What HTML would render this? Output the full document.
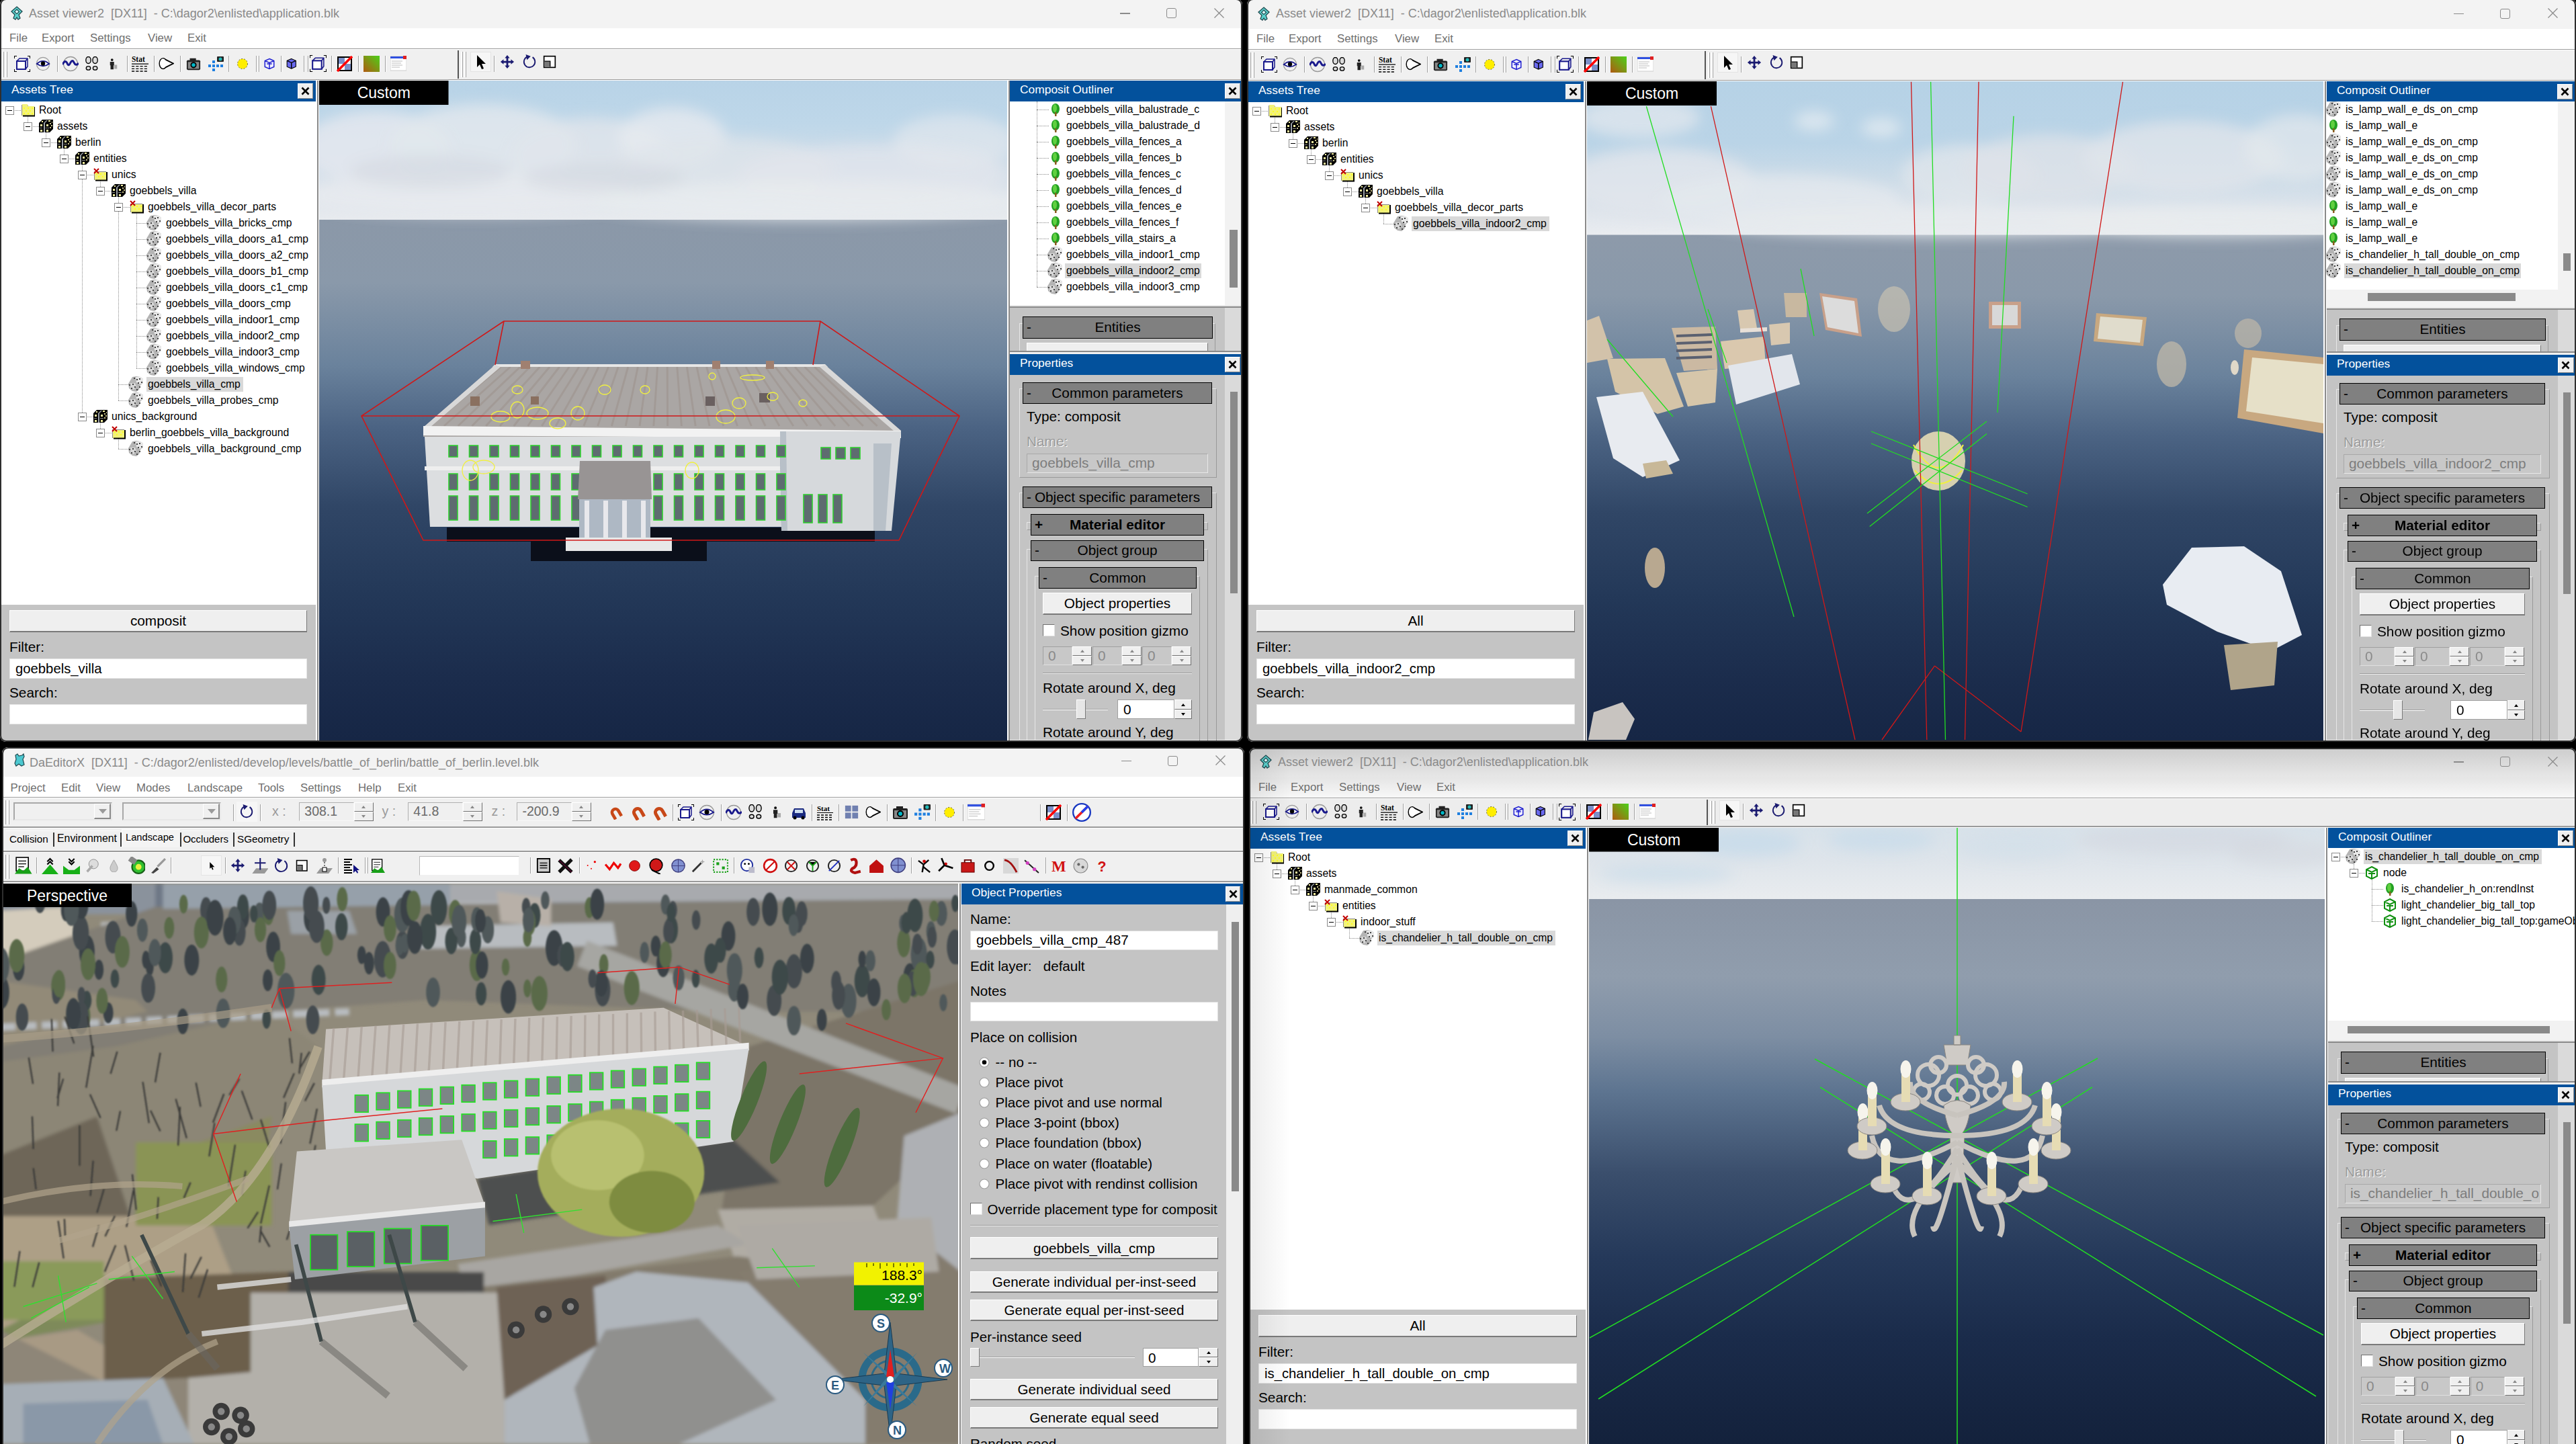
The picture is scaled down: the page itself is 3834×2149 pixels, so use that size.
<!DOCTYPE html><html><head><meta charset="utf-8"><style>html,body{margin:0;padding:0}body{width:3834px;height:2149px;background:#000;position:relative;overflow:hidden;font-family:"Liberation Sans",sans-serif}.a{position:absolute;display:block}.t{position:absolute;white-space:pre;line-height:1}</style></head><body><div class=a style="left:0px;top:-2px;width:1849px;height:1106px;border-radius:9px;overflow:hidden;background:#f0f0f0;"><div class=a style="left:0px;top:0px;width:1849px;height:44px;background:#f3f3f3"></div><svg class=a style="left:16px;top:11px;" width="18" height="21" viewBox="0 0 18 21"><path d="M9 1 L17 8 L12 13 L14 18 L11 20 L9 17 L7 20 L4 18 L6 13 L1 8Z" fill="#5cd0cc" stroke="#1f4a50" stroke-width="1.3"/><path d="M9 5 L12.5 8.5 L9 11.5 L5.5 8.5Z" fill="#dff" stroke="#1f4a50" stroke-width="1.2"/></svg><div class=t style="left:43px;top:12.76px;font-size:18px;color:#8a8a8a;">Asset viewer2  [DX11]  - C:\dagor2\enlisted\application.blk</div><div class=a style="left:1667px;top:21.3px;width:15px;height:1.3px;background:#8b8b8b"></div><div class=a style="left:1736px;top:14.3px;width:15px;height:15px;border:1.3px solid #8b8b8b;border-radius:3px;box-sizing:border-box"></div><svg class=a style="left:1807px;top:13.8px;" width="15" height="15" viewBox="0 0 15 15"><path d="M0.5 0.5 L14.5 14.5 M14.5 0.5 L0.5 14.5" stroke="#8b8b8b" stroke-width="1.3"/></svg><div class=a style="left:0px;top:44px;width:1849px;height:30px;background:#fff"></div><div class=t style="left:14px;top:51.28px;font-size:16.8px;color:#6e6e6e;">File</div><div class=t style="left:62px;top:51.28px;font-size:16.8px;color:#6e6e6e;">Export</div><div class=t style="left:134px;top:51.28px;font-size:16.8px;color:#6e6e6e;">Settings</div><div class=t style="left:220px;top:51.28px;font-size:16.8px;color:#6e6e6e;">View</div><div class=t style="left:279px;top:51.28px;font-size:16.8px;color:#6e6e6e;">Exit</div><div class=a style="left:0px;top:74px;width:1849px;height:1.2px;background:#9c9c9c"></div><div class=a style="left:0px;top:75.2px;width:1849px;height:1px;background:#fff"></div><div class=a style="left:0px;top:76.2px;width:1849px;height:43.5px;background:#f0f0f0"></div><div class=a style="left:0px;top:119.7px;width:1849px;height:1.6px;background:#9a9a9a"></div><div class=a style="left:0px;top:121.3px;width:1849px;height:1px;background:#fff"></div><div class=a style="left:3px;top:79.2px;width:2px;height:37.5px;background:#fff;border-right:1px solid #a0a0a0"></div><div class=a style="left:8px;top:79.2px;width:2px;height:37.5px;background:#fff;border-right:1px solid #a0a0a0"></div><svg class=a style="left:21px;top:84.95px;" width="24" height="24" viewBox="0 0 24 24"><rect x="4" y="8" width="13" height="12" fill="#fff" stroke="#1a1a8c" stroke-width="2"/><path d="M4 8 L8 4 H20 V16 L17 20 M17 8 L20 4" fill="none" stroke="#1a1a8c" stroke-width="1.5"/><path d="M0 4V0H4 M20 0H24V4 M24 20V24H20 M4 24H0V20" fill="none" stroke="#000" stroke-width="2"/></svg><svg class=a style="left:53px;top:85.95px;" width="22" height="22" viewBox="0 0 24 24"><circle cx="12" cy="12" r="10.5" fill="none" stroke="#999" stroke-width="1.3"/><path d="M2 12 Q12 3 22 12 Q12 19 2 12Z" fill="#fff" stroke="#1a1a8c" stroke-width="2"/><circle cx="12" cy="11.5" r="3.5" fill="#000"/></svg><div class=a style="left:84.5px;top:84.95px;width:1px;height:24px;background:#a0a0a0"></div><div class=a style="left:85.5px;top:84.95px;width:1px;height:24px;background:#fff"></div><svg class=a style="left:93px;top:84.95px;" width="24" height="24" viewBox="0 0 24 24"><circle cx="12" cy="12" r="10.5" fill="none" stroke="#999" stroke-width="1.3"/><path d="M0 13 Q4 5 7 11 Q9 17 12 10 Q15 5 17 10 Q20 16 24 11" fill="none" stroke="#1a1a8c" stroke-width="3"/></svg><svg class=a style="left:125.5px;top:85.95px;" width="22" height="22" viewBox="0 0 24 24"><ellipse cx="6" cy="6" rx="4" ry="5.5" fill="#ddd" stroke="#000" stroke-width="1.5"/><ellipse cx="17" cy="6" rx="4" ry="5.5" fill="#ddd" stroke="#000" stroke-width="1.5"/><ellipse cx="6" cy="19" rx="3.5" ry="3" fill="#ddd" stroke="#000" stroke-width="1.5"/><ellipse cx="17" cy="19" rx="3.5" ry="3" fill="#ddd" stroke="#000" stroke-width="1.5"/></svg><svg class=a style="left:160px;top:87.95px;" width="18" height="18" viewBox="0 0 24 24"><rect x="13" y="14" width="6" height="8" fill="#aaa"/><circle cx="9" cy="4" r="2.5" fill="#111"/><path d="M5 8 H13 V15 H12 V23 H6 V15 H5Z" fill="#222"/></svg><div class=a style="left:188.5px;top:84.95px;width:1px;height:24px;background:#a0a0a0"></div><div class=a style="left:189.5px;top:84.95px;width:1px;height:24px;background:#fff"></div><svg class=a style="left:196px;top:84.45px;" width="25" height="25" viewBox="0 0 24 24"><text x="0" y="10" font-family="Liberation Serif" font-size="11" font-weight="bold" fill="#000">Stat</text><path d="M0 12.5H24" stroke="#000" stroke-width="1.2"/><path d="M0 16H24 M0 19.5H24 M0 23H24" stroke="#000" stroke-width="1.3" stroke-dasharray="4 2"/></svg><div class=a style="left:228.5px;top:84.95px;width:1px;height:24px;background:#a0a0a0"></div><div class=a style="left:229.5px;top:84.95px;width:1px;height:24px;background:#fff"></div><svg class=a style="left:236px;top:85.45px;" width="23" height="23" viewBox="0 0 24 24"><ellipse cx="7" cy="12" rx="5.5" ry="8" fill="#fff" stroke="#000" stroke-width="2"/><path d="M7 4 L23 12 L7 20" fill="#fff" stroke="#000" stroke-width="2"/><ellipse cx="7" cy="12" rx="5" ry="7.5" fill="#fff"/></svg><div class=a style="left:268px;top:84.95px;width:1px;height:24px;background:#a0a0a0"></div><div class=a style="left:269px;top:84.95px;width:1px;height:24px;background:#fff"></div><svg class=a style="left:277px;top:85.95px;" width="22" height="22" viewBox="0 0 24 24"><rect x="1" y="6" width="22" height="16" rx="2" fill="#222"/><rect x="3" y="9" width="18" height="11" fill="#888"/><rect x="6" y="3" width="10" height="4" fill="#222"/><circle cx="12" cy="14" r="5" fill="#000"/><circle cx="12" cy="14" r="3" fill="#00b8c8"/></svg><svg class=a style="left:309px;top:84.95px;" width="24" height="24" viewBox="0 0 24 24"><rect x="14" y="1" width="10" height="8" rx="1" fill="#222"/><circle cx="19" cy="5" r="2.5" fill="#2bb"/><path d="M1 13h4v4H1z M7 13h4v4H7z M13 13h4v4h-4z M19 13h4v4h-4z M7 7h4v4H7z M7 19h4v4H7z" fill="#1e7fe0"/></svg><div class=a style="left:340px;top:84.95px;width:1px;height:24px;background:#a0a0a0"></div><div class=a style="left:341px;top:84.95px;width:1px;height:24px;background:#fff"></div><svg class=a style="left:351px;top:86.95px;" width="20" height="20" viewBox="0 0 24 24"><circle cx="12" cy="12" r="9" fill="#ffee00" stroke="#333" stroke-width="1" stroke-dasharray="2 3"/></svg><div class=a style="left:380.5px;top:84.95px;width:1px;height:24px;background:#a0a0a0"></div><div class=a style="left:381.5px;top:84.95px;width:1px;height:24px;background:#fff"></div><div class=a style="left:385px;top:84.95px;width:1px;height:24px;background:#a0a0a0"></div><div class=a style="left:386px;top:84.95px;width:1px;height:24px;background:#fff"></div><svg class=a style="left:392px;top:87.95px;" width="18" height="18" viewBox="0 0 24 24"><path d="M12 2 L21 6 V18 L12 22 L3 18 V6Z M3 6 L12 10 L21 6 M12 10 V22 M7 12 H17" fill="#eef" stroke="#2323d0" stroke-width="2"/></svg><div class=a style="left:417.5px;top:84.95px;width:1px;height:24px;background:#a0a0a0"></div><div class=a style="left:418.5px;top:84.95px;width:1px;height:24px;background:#fff"></div><svg class=a style="left:424.5px;top:88.2px;" width="17.5" height="17.5" viewBox="0 0 24 24"><path d="M12 2 L21 6 V18 L12 22 L3 18 V6Z" fill="#6a6af0" stroke="#000" stroke-width="1.5"/><path d="M3 6 L12 10 L21 6 M12 10 V22" fill="none" stroke="#000" stroke-width="2"/></svg><div class=a style="left:452px;top:84.95px;width:1px;height:24px;background:#a0a0a0"></div><div class=a style="left:453px;top:84.95px;width:1px;height:24px;background:#fff"></div><div class=a style="left:457.5px;top:84.95px;width:1px;height:24px;background:#a0a0a0"></div><div class=a style="left:458.5px;top:84.95px;width:1px;height:24px;background:#fff"></div><svg class=a style="left:461px;top:84.45px;" width="25" height="25" viewBox="0 0 24 24"><rect x="4" y="8" width="13" height="12" fill="#fff" stroke="#1a1a8c" stroke-width="2"/><path d="M4 8 L8 4 H20 V16 L17 20 M17 8 L20 4" fill="none" stroke="#1a1a8c" stroke-width="1.5"/><path d="M0 4V0H4 M20 0H24V4 M24 20V24H20 M4 24H0V20" fill="none" stroke="#000" stroke-width="2"/></svg><div class=a style="left:492.5px;top:84.95px;width:1px;height:24px;background:#a0a0a0"></div><div class=a style="left:493.5px;top:84.95px;width:1px;height:24px;background:#fff"></div><svg class=a style="left:501px;top:84.95px;" width="24" height="24" viewBox="0 0 24 24"><rect x="2" y="2" width="20" height="20" fill="#fff" stroke="#000" stroke-width="2"/><rect x="3" y="3" width="9" height="9" fill="#7c8fc8"/><rect x="12" y="12" width="9" height="9" fill="#7c8fc8"/><path d="M1 23 L23 1" stroke="#f00" stroke-width="3.5"/></svg><div class=a style="left:532.7px;top:84.95px;width:1px;height:24px;background:#a0a0a0"></div><div class=a style="left:533.7px;top:84.95px;width:1px;height:24px;background:#fff"></div><svg class=a style="left:541px;top:84.95px;" width="24" height="24" viewBox="0 0 24 24"><defs><linearGradient id="gg" x1="1" y1="0" x2="0" y2="1"><stop offset="0" stop-color="#4cd11a"/><stop offset="1" stop-color="#b05a10"/></linearGradient></defs><rect x="0" y="0" width="24" height="24" fill="url(#gg)"/></svg><div class=a style="left:573px;top:84.95px;width:1px;height:24px;background:#a0a0a0"></div><div class=a style="left:574px;top:84.95px;width:1px;height:24px;background:#fff"></div><svg class=a style="left:581px;top:84.95px;" width="24" height="24" viewBox="0 0 24 24"><rect x="0" y="1" width="24" height="21" fill="#fff" stroke="#ccc"/><rect x="0" y="1" width="22" height="3" fill="#3050e0"/><rect x="19" y="0" width="5" height="5" fill="#e02020"/><path d="M2 8H18 M2 11H16 M2 14H18 M2 17H14" stroke="#bbb"/></svg><div class=a style="left:681px;top:77.2px;width:2px;height:41.5px;background:#555"></div><div class=a style="left:686px;top:79.2px;width:2px;height:37.5px;background:#fff;border-right:1px solid #a0a0a0"></div><div class=a style="left:691px;top:79.2px;width:2px;height:37.5px;background:#fff;border-right:1px solid #a0a0a0"></div><div class=a style="left:700px;top:79.45px;width:31px;height:30px;background:#f6f6f6;border:1px solid #e4e4e4;box-sizing:border-box"></div><svg class=a style="left:704px;top:82.45px;" width="24" height="24" viewBox="0 0 24 24"><path d="M6 2 L6 20 L10 16 L13 23 L16 22 L13 15 L19 15Z" fill="#000"/></svg><div class=a style="left:735px;top:84.95px;width:1px;height:24px;background:#a0a0a0"></div><div class=a style="left:736px;top:84.95px;width:1px;height:24px;background:#fff"></div><svg class=a style="left:744px;top:83.45px;" width="22" height="22" viewBox="0 0 24 24"><path d="M12 1 L16 6 H13.5 V10.5 H18 V8 L23 12 L18 16 V13.5 H13.5 V18 H16 L12 23 L8 18 H10.5 V13.5 H6 V16 L1 12 L6 8 V10.5 H10.5 V6 H8Z" fill="#1a1a70"/></svg><svg class=a style="left:777px;top:83.45px;" width="22" height="22" viewBox="0 0 24 24"><path d="M8 4 A9 9 0 1 0 17 4.5" fill="none" stroke="#1a1a70" stroke-width="2"/><path d="M6 0 L14 3 L8 9Z" fill="#1a1a70"/></svg><svg class=a style="left:808px;top:84.45px;" width="20" height="20" viewBox="0 0 24 24"><rect x="2" y="2" width="20" height="20" fill="#fff" stroke="#000" stroke-width="2"/><rect x="3" y="11" width="10" height="10" fill="#777"/><path d="M3 11H13V21" fill="none" stroke="#000" stroke-width="1.5"/></svg><div class=a style="left:2px;top:122px;width:468px;height:30.5px;background:#03519c"></div><div class=t style="left:17px;top:127.27px;font-size:17.4px;color:#fff;">Assets Tree</div><div class=a style="left:443px;top:126px;width:23px;height:23px;background:#efefef;border-right:1.5px solid #8a8a8a;border-bottom:1.5px solid #8a8a8a;border-top:1px solid #fff;border-left:1px solid #fff;box-sizing:border-box"></div><svg class=a style="left:448px;top:131px;" width="13" height="13" viewBox="0 0 13 13"><path d="M1.5 1.5 L11.5 11.5 M11.5 1.5 L1.5 11.5" stroke="#000" stroke-width="2.6"/></svg><div class=a style="left:2px;top:152.5px;width:468px;height:749.5px;background:#fff"></div><div class=a style="left:14px;top:165.5px;width:17px;height:1px;border-top:1px dotted #8a8a8a;box-sizing:border-box"></div><div class=a style="left:41px;top:174.5px;width:1px;height:15px;border-left:1px dotted #8a8a8a;box-sizing:border-box"></div><div class=a style="left:41px;top:189.5px;width:17px;height:1px;border-top:1px dotted #8a8a8a;box-sizing:border-box"></div><div class=a style="left:68px;top:198.5px;width:1px;height:15px;border-left:1px dotted #8a8a8a;box-sizing:border-box"></div><div class=a style="left:68px;top:213.5px;width:17px;height:1px;border-top:1px dotted #8a8a8a;box-sizing:border-box"></div><div class=a style="left:95px;top:222.5px;width:1px;height:15px;border-left:1px dotted #8a8a8a;box-sizing:border-box"></div><div class=a style="left:95px;top:237.5px;width:17px;height:1px;border-top:1px dotted #8a8a8a;box-sizing:border-box"></div><div class=a style="left:122px;top:246.5px;width:1px;height:15px;border-left:1px dotted #8a8a8a;box-sizing:border-box"></div><div class=a style="left:122px;top:261.5px;width:17px;height:1px;border-top:1px dotted #8a8a8a;box-sizing:border-box"></div><div class=a style="left:149px;top:270.5px;width:1px;height:15px;border-left:1px dotted #8a8a8a;box-sizing:border-box"></div><div class=a style="left:149px;top:285.5px;width:17px;height:1px;border-top:1px dotted #8a8a8a;box-sizing:border-box"></div><div class=a style="left:176px;top:294.5px;width:1px;height:15px;border-left:1px dotted #8a8a8a;box-sizing:border-box"></div><div class=a style="left:176px;top:309.5px;width:17px;height:1px;border-top:1px dotted #8a8a8a;box-sizing:border-box"></div><div class=a style="left:203px;top:318.5px;width:1px;height:15px;border-left:1px dotted #8a8a8a;box-sizing:border-box"></div><div class=a style="left:203px;top:333.5px;width:17px;height:1px;border-top:1px dotted #8a8a8a;box-sizing:border-box"></div><div class=a style="left:203px;top:318.5px;width:1px;height:39px;border-left:1px dotted #8a8a8a;box-sizing:border-box"></div><div class=a style="left:203px;top:357.5px;width:17px;height:1px;border-top:1px dotted #8a8a8a;box-sizing:border-box"></div><div class=a style="left:203px;top:318.5px;width:1px;height:63px;border-left:1px dotted #8a8a8a;box-sizing:border-box"></div><div class=a style="left:203px;top:381.5px;width:17px;height:1px;border-top:1px dotted #8a8a8a;box-sizing:border-box"></div><div class=a style="left:203px;top:318.5px;width:1px;height:87px;border-left:1px dotted #8a8a8a;box-sizing:border-box"></div><div class=a style="left:203px;top:405.5px;width:17px;height:1px;border-top:1px dotted #8a8a8a;box-sizing:border-box"></div><div class=a style="left:203px;top:318.5px;width:1px;height:111px;border-left:1px dotted #8a8a8a;box-sizing:border-box"></div><div class=a style="left:203px;top:429.5px;width:17px;height:1px;border-top:1px dotted #8a8a8a;box-sizing:border-box"></div><div class=a style="left:203px;top:318.5px;width:1px;height:135px;border-left:1px dotted #8a8a8a;box-sizing:border-box"></div><div class=a style="left:203px;top:453.5px;width:17px;height:1px;border-top:1px dotted #8a8a8a;box-sizing:border-box"></div><div class=a style="left:203px;top:318.5px;width:1px;height:159px;border-left:1px dotted #8a8a8a;box-sizing:border-box"></div><div class=a style="left:203px;top:477.5px;width:17px;height:1px;border-top:1px dotted #8a8a8a;box-sizing:border-box"></div><div class=a style="left:203px;top:318.5px;width:1px;height:183px;border-left:1px dotted #8a8a8a;box-sizing:border-box"></div><div class=a style="left:203px;top:501.5px;width:17px;height:1px;border-top:1px dotted #8a8a8a;box-sizing:border-box"></div><div class=a style="left:203px;top:318.5px;width:1px;height:207px;border-left:1px dotted #8a8a8a;box-sizing:border-box"></div><div class=a style="left:203px;top:525.5px;width:17px;height:1px;border-top:1px dotted #8a8a8a;box-sizing:border-box"></div><div class=a style="left:203px;top:318.5px;width:1px;height:231px;border-left:1px dotted #8a8a8a;box-sizing:border-box"></div><div class=a style="left:203px;top:549.5px;width:17px;height:1px;border-top:1px dotted #8a8a8a;box-sizing:border-box"></div><div class=a style="left:176px;top:294.5px;width:1px;height:279px;border-left:1px dotted #8a8a8a;box-sizing:border-box"></div><div class=a style="left:176px;top:573.5px;width:17px;height:1px;border-top:1px dotted #8a8a8a;box-sizing:border-box"></div><div class=a style="left:176px;top:294.5px;width:1px;height:303px;border-left:1px dotted #8a8a8a;box-sizing:border-box"></div><div class=a style="left:176px;top:597.5px;width:17px;height:1px;border-top:1px dotted #8a8a8a;box-sizing:border-box"></div><div class=a style="left:122px;top:246.5px;width:1px;height:375px;border-left:1px dotted #8a8a8a;box-sizing:border-box"></div><div class=a style="left:122px;top:621.5px;width:17px;height:1px;border-top:1px dotted #8a8a8a;box-sizing:border-box"></div><div class=a style="left:149px;top:630.5px;width:1px;height:15px;border-left:1px dotted #8a8a8a;box-sizing:border-box"></div><div class=a style="left:149px;top:645.5px;width:17px;height:1px;border-top:1px dotted #8a8a8a;box-sizing:border-box"></div><div class=a style="left:176px;top:654.5px;width:1px;height:15px;border-left:1px dotted #8a8a8a;box-sizing:border-box"></div><div class=a style="left:176px;top:669.5px;width:17px;height:1px;border-top:1px dotted #8a8a8a;box-sizing:border-box"></div><div class=a style="left:8px;top:159.5px;width:13px;height:13px;background:#fff;border:1px solid #8a8a8a;box-sizing:border-box"></div><div class=a style="left:11px;top:165.5px;width:7px;height:1.3px;background:#000"></div><svg class=a style="left:31px;top:155.5px;" width="21" height="20" viewBox="0 0 21 20"><path d="M1 2 H10 L11 4 H20 V18 H1Z" fill="#8a8a8a"/><rect x="2" y="4" width="18" height="14" fill="#f2f27a"/><rect x="2" y="1" width="8" height="3" fill="#f2f27a"/><path d="M4 6h2v2h-2z M10 6h2v2h-2z M16 6h2v2h-2z M7 10h2v2h-2z M13 10h2v2h-2z M4 14h2v2h-2z M10 14h2v2h-2z M16 14h2v2h-2z" fill="#ffff20"/><path d="M3 18.5 H21 V5" fill="none" stroke="#000" stroke-width="2"/></svg><div class=t style="left:58px;top:157.71px;font-size:15.7px;color:#000;">Root</div><div class=a style="left:35px;top:183.5px;width:13px;height:13px;background:#fff;border:1px solid #8a8a8a;box-sizing:border-box"></div><div class=a style="left:38px;top:189.5px;width:7px;height:1.3px;background:#000"></div><svg class=a style="left:58px;top:179.5px;" width="21" height="20" viewBox="0 0 21 20"><path d="M0 5 L5 0 H21 V14 L16 19 H0Z" fill="#000"/><path d="M7 19 V5 L11 1 H13 L9 5 V19Z" fill="#9aa0a8"/><path d="M2 7h3v3h-3z M11 7h3v3h-3z M2 15h3v3h-3z M11 15h3v3h-3z M4 2h2v2h-2z M14 1h3v2h-3z" fill="#f4f0a0"/><path d="M16 5h2v2h-2z M18 8h2v2h-2z M16 11h2v2h-2z M19 3h1v2h-1z" fill="#c8c088"/><path d="M1 12.5H5 M10 12.5H15" stroke="#8a8a8a" stroke-width="1"/></svg><div class=t style="left:85px;top:181.71px;font-size:15.7px;color:#000;">assets</div><div class=a style="left:62px;top:207.5px;width:13px;height:13px;background:#fff;border:1px solid #8a8a8a;box-sizing:border-box"></div><div class=a style="left:65px;top:213.5px;width:7px;height:1.3px;background:#000"></div><svg class=a style="left:85px;top:203.5px;" width="21" height="20" viewBox="0 0 21 20"><path d="M0 5 L5 0 H21 V14 L16 19 H0Z" fill="#000"/><path d="M7 19 V5 L11 1 H13 L9 5 V19Z" fill="#9aa0a8"/><path d="M2 7h3v3h-3z M11 7h3v3h-3z M2 15h3v3h-3z M11 15h3v3h-3z M4 2h2v2h-2z M14 1h3v2h-3z" fill="#f4f0a0"/><path d="M16 5h2v2h-2z M18 8h2v2h-2z M16 11h2v2h-2z M19 3h1v2h-1z" fill="#c8c088"/><path d="M1 12.5H5 M10 12.5H15" stroke="#8a8a8a" stroke-width="1"/></svg><div class=t style="left:112px;top:205.71px;font-size:15.7px;color:#000;">berlin</div><div class=a style="left:89px;top:231.5px;width:13px;height:13px;background:#fff;border:1px solid #8a8a8a;box-sizing:border-box"></div><div class=a style="left:92px;top:237.5px;width:7px;height:1.3px;background:#000"></div><svg class=a style="left:112px;top:227.5px;" width="21" height="20" viewBox="0 0 21 20"><path d="M0 5 L5 0 H21 V14 L16 19 H0Z" fill="#000"/><path d="M7 19 V5 L11 1 H13 L9 5 V19Z" fill="#9aa0a8"/><path d="M2 7h3v3h-3z M11 7h3v3h-3z M2 15h3v3h-3z M11 15h3v3h-3z M4 2h2v2h-2z M14 1h3v2h-3z" fill="#f4f0a0"/><path d="M16 5h2v2h-2z M18 8h2v2h-2z M16 11h2v2h-2z M19 3h1v2h-1z" fill="#c8c088"/><path d="M1 12.5H5 M10 12.5H15" stroke="#8a8a8a" stroke-width="1"/></svg><div class=t style="left:139px;top:229.71px;font-size:15.7px;color:#000;">entities</div><div class=a style="left:116px;top:255.5px;width:13px;height:13px;background:#fff;border:1px solid #8a8a8a;box-sizing:border-box"></div><div class=a style="left:119px;top:261.5px;width:7px;height:1.3px;background:#000"></div><svg class=a style="left:139px;top:251.5px;" width="21" height="20" viewBox="0 0 21 20"><path d="M1 5 H19 V18 H1Z" fill="#8a8a8a"/><rect x="2" y="6" width="17" height="12" fill="#f2f27a"/><path d="M4 8h2v2h-2z M10 8h2v2h-2z M16 8h2v2h-2z M7 12h2v2h-2z M13 12h2v2h-2z" fill="#ffff20"/><path d="M3 18.5 H20 V6" fill="none" stroke="#000" stroke-width="2"/><path d="M1 1 L8 8 M8 1 L1 8" stroke="#c00000" stroke-width="2"/></svg><div class=t style="left:166px;top:253.71px;font-size:15.7px;color:#000;">unics</div><div class=a style="left:143px;top:279.5px;width:13px;height:13px;background:#fff;border:1px solid #8a8a8a;box-sizing:border-box"></div><div class=a style="left:146px;top:285.5px;width:7px;height:1.3px;background:#000"></div><svg class=a style="left:166px;top:275.5px;" width="21" height="20" viewBox="0 0 21 20"><path d="M0 5 L5 0 H21 V14 L16 19 H0Z" fill="#000"/><path d="M7 19 V5 L11 1 H13 L9 5 V19Z" fill="#9aa0a8"/><path d="M2 7h3v3h-3z M11 7h3v3h-3z M2 15h3v3h-3z M11 15h3v3h-3z M4 2h2v2h-2z M14 1h3v2h-3z" fill="#f4f0a0"/><path d="M16 5h2v2h-2z M18 8h2v2h-2z M16 11h2v2h-2z M19 3h1v2h-1z" fill="#c8c088"/><path d="M1 12.5H5 M10 12.5H15" stroke="#8a8a8a" stroke-width="1"/></svg><div class=t style="left:193px;top:277.71px;font-size:15.7px;color:#000;">goebbels_villa</div><div class=a style="left:170px;top:303.5px;width:13px;height:13px;background:#fff;border:1px solid #8a8a8a;box-sizing:border-box"></div><div class=a style="left:173px;top:309.5px;width:7px;height:1.3px;background:#000"></div><svg class=a style="left:193px;top:299.5px;" width="21" height="20" viewBox="0 0 21 20"><path d="M1 5 H19 V18 H1Z" fill="#8a8a8a"/><rect x="2" y="6" width="17" height="12" fill="#f2f27a"/><path d="M4 8h2v2h-2z M10 8h2v2h-2z M16 8h2v2h-2z M7 12h2v2h-2z M13 12h2v2h-2z" fill="#ffff20"/><path d="M3 18.5 H20 V6" fill="none" stroke="#000" stroke-width="2"/><path d="M1 1 L8 8 M8 1 L1 8" stroke="#c00000" stroke-width="2"/></svg><div class=t style="left:220px;top:301.71px;font-size:15.7px;color:#000;">goebbels_villa_decor_parts</div><svg class=a style="left:218px;top:321.5px;" width="23" height="24" viewBox="0 0 23 24"><path d="M6 1 L12 0 L18 1 L22 4 L22 10 L18 13 L16 20 L12 23 L6 22 L1 18 L0 11 L3 6Z" fill="#b4b4b4"/><path d="M11 1 L18 1 L22 4 L22 10 L17 12 L12 9Z" fill="#e8e8e8"/><path d="M3 10 L10 10 L12 15 L8 20 L3 18Z" fill="#d6d6d6"/><path d="M8 2h2v2h-2z M12 4h2v2h-2z M16 3h2v2h-2z M19 8h2v2h-2z M14 9h2v2h-2z M1 12h2v2h-2z M6 11h2v2h-2z M9 15h2v2h-2z M4 17h2v2h-2z M12 19h2v2h-2z M16 15h2v2h-2z" fill="#404040"/></svg><div class=t style="left:247px;top:325.71px;font-size:15.7px;color:#000;">goebbels_villa_bricks_cmp</div><svg class=a style="left:218px;top:345.5px;" width="23" height="24" viewBox="0 0 23 24"><path d="M6 1 L12 0 L18 1 L22 4 L22 10 L18 13 L16 20 L12 23 L6 22 L1 18 L0 11 L3 6Z" fill="#b4b4b4"/><path d="M11 1 L18 1 L22 4 L22 10 L17 12 L12 9Z" fill="#e8e8e8"/><path d="M3 10 L10 10 L12 15 L8 20 L3 18Z" fill="#d6d6d6"/><path d="M8 2h2v2h-2z M12 4h2v2h-2z M16 3h2v2h-2z M19 8h2v2h-2z M14 9h2v2h-2z M1 12h2v2h-2z M6 11h2v2h-2z M9 15h2v2h-2z M4 17h2v2h-2z M12 19h2v2h-2z M16 15h2v2h-2z" fill="#404040"/></svg><div class=t style="left:247px;top:349.71px;font-size:15.7px;color:#000;">goebbels_villa_doors_a1_cmp</div><svg class=a style="left:218px;top:369.5px;" width="23" height="24" viewBox="0 0 23 24"><path d="M6 1 L12 0 L18 1 L22 4 L22 10 L18 13 L16 20 L12 23 L6 22 L1 18 L0 11 L3 6Z" fill="#b4b4b4"/><path d="M11 1 L18 1 L22 4 L22 10 L17 12 L12 9Z" fill="#e8e8e8"/><path d="M3 10 L10 10 L12 15 L8 20 L3 18Z" fill="#d6d6d6"/><path d="M8 2h2v2h-2z M12 4h2v2h-2z M16 3h2v2h-2z M19 8h2v2h-2z M14 9h2v2h-2z M1 12h2v2h-2z M6 11h2v2h-2z M9 15h2v2h-2z M4 17h2v2h-2z M12 19h2v2h-2z M16 15h2v2h-2z" fill="#404040"/></svg><div class=t style="left:247px;top:373.71px;font-size:15.7px;color:#000;">goebbels_villa_doors_a2_cmp</div><svg class=a style="left:218px;top:393.5px;" width="23" height="24" viewBox="0 0 23 24"><path d="M6 1 L12 0 L18 1 L22 4 L22 10 L18 13 L16 20 L12 23 L6 22 L1 18 L0 11 L3 6Z" fill="#b4b4b4"/><path d="M11 1 L18 1 L22 4 L22 10 L17 12 L12 9Z" fill="#e8e8e8"/><path d="M3 10 L10 10 L12 15 L8 20 L3 18Z" fill="#d6d6d6"/><path d="M8 2h2v2h-2z M12 4h2v2h-2z M16 3h2v2h-2z M19 8h2v2h-2z M14 9h2v2h-2z M1 12h2v2h-2z M6 11h2v2h-2z M9 15h2v2h-2z M4 17h2v2h-2z M12 19h2v2h-2z M16 15h2v2h-2z" fill="#404040"/></svg><div class=t style="left:247px;top:397.71px;font-size:15.7px;color:#000;">goebbels_villa_doors_b1_cmp</div><svg class=a style="left:218px;top:417.5px;" width="23" height="24" viewBox="0 0 23 24"><path d="M6 1 L12 0 L18 1 L22 4 L22 10 L18 13 L16 20 L12 23 L6 22 L1 18 L0 11 L3 6Z" fill="#b4b4b4"/><path d="M11 1 L18 1 L22 4 L22 10 L17 12 L12 9Z" fill="#e8e8e8"/><path d="M3 10 L10 10 L12 15 L8 20 L3 18Z" fill="#d6d6d6"/><path d="M8 2h2v2h-2z M12 4h2v2h-2z M16 3h2v2h-2z M19 8h2v2h-2z M14 9h2v2h-2z M1 12h2v2h-2z M6 11h2v2h-2z M9 15h2v2h-2z M4 17h2v2h-2z M12 19h2v2h-2z M16 15h2v2h-2z" fill="#404040"/></svg><div class=t style="left:247px;top:421.71px;font-size:15.7px;color:#000;">goebbels_villa_doors_c1_cmp</div><svg class=a style="left:218px;top:441.5px;" width="23" height="24" viewBox="0 0 23 24"><path d="M6 1 L12 0 L18 1 L22 4 L22 10 L18 13 L16 20 L12 23 L6 22 L1 18 L0 11 L3 6Z" fill="#b4b4b4"/><path d="M11 1 L18 1 L22 4 L22 10 L17 12 L12 9Z" fill="#e8e8e8"/><path d="M3 10 L10 10 L12 15 L8 20 L3 18Z" fill="#d6d6d6"/><path d="M8 2h2v2h-2z M12 4h2v2h-2z M16 3h2v2h-2z M19 8h2v2h-2z M14 9h2v2h-2z M1 12h2v2h-2z M6 11h2v2h-2z M9 15h2v2h-2z M4 17h2v2h-2z M12 19h2v2h-2z M16 15h2v2h-2z" fill="#404040"/></svg><div class=t style="left:247px;top:445.71px;font-size:15.7px;color:#000;">goebbels_villa_doors_cmp</div><svg class=a style="left:218px;top:465.5px;" width="23" height="24" viewBox="0 0 23 24"><path d="M6 1 L12 0 L18 1 L22 4 L22 10 L18 13 L16 20 L12 23 L6 22 L1 18 L0 11 L3 6Z" fill="#b4b4b4"/><path d="M11 1 L18 1 L22 4 L22 10 L17 12 L12 9Z" fill="#e8e8e8"/><path d="M3 10 L10 10 L12 15 L8 20 L3 18Z" fill="#d6d6d6"/><path d="M8 2h2v2h-2z M12 4h2v2h-2z M16 3h2v2h-2z M19 8h2v2h-2z M14 9h2v2h-2z M1 12h2v2h-2z M6 11h2v2h-2z M9 15h2v2h-2z M4 17h2v2h-2z M12 19h2v2h-2z M16 15h2v2h-2z" fill="#404040"/></svg><div class=t style="left:247px;top:469.71px;font-size:15.7px;color:#000;">goebbels_villa_indoor1_cmp</div><svg class=a style="left:218px;top:489.5px;" width="23" height="24" viewBox="0 0 23 24"><path d="M6 1 L12 0 L18 1 L22 4 L22 10 L18 13 L16 20 L12 23 L6 22 L1 18 L0 11 L3 6Z" fill="#b4b4b4"/><path d="M11 1 L18 1 L22 4 L22 10 L17 12 L12 9Z" fill="#e8e8e8"/><path d="M3 10 L10 10 L12 15 L8 20 L3 18Z" fill="#d6d6d6"/><path d="M8 2h2v2h-2z M12 4h2v2h-2z M16 3h2v2h-2z M19 8h2v2h-2z M14 9h2v2h-2z M1 12h2v2h-2z M6 11h2v2h-2z M9 15h2v2h-2z M4 17h2v2h-2z M12 19h2v2h-2z M16 15h2v2h-2z" fill="#404040"/></svg><div class=t style="left:247px;top:493.71px;font-size:15.7px;color:#000;">goebbels_villa_indoor2_cmp</div><svg class=a style="left:218px;top:513.5px;" width="23" height="24" viewBox="0 0 23 24"><path d="M6 1 L12 0 L18 1 L22 4 L22 10 L18 13 L16 20 L12 23 L6 22 L1 18 L0 11 L3 6Z" fill="#b4b4b4"/><path d="M11 1 L18 1 L22 4 L22 10 L17 12 L12 9Z" fill="#e8e8e8"/><path d="M3 10 L10 10 L12 15 L8 20 L3 18Z" fill="#d6d6d6"/><path d="M8 2h2v2h-2z M12 4h2v2h-2z M16 3h2v2h-2z M19 8h2v2h-2z M14 9h2v2h-2z M1 12h2v2h-2z M6 11h2v2h-2z M9 15h2v2h-2z M4 17h2v2h-2z M12 19h2v2h-2z M16 15h2v2h-2z" fill="#404040"/></svg><div class=t style="left:247px;top:517.71px;font-size:15.7px;color:#000;">goebbels_villa_indoor3_cmp</div><svg class=a style="left:218px;top:537.5px;" width="23" height="24" viewBox="0 0 23 24"><path d="M6 1 L12 0 L18 1 L22 4 L22 10 L18 13 L16 20 L12 23 L6 22 L1 18 L0 11 L3 6Z" fill="#b4b4b4"/><path d="M11 1 L18 1 L22 4 L22 10 L17 12 L12 9Z" fill="#e8e8e8"/><path d="M3 10 L10 10 L12 15 L8 20 L3 18Z" fill="#d6d6d6"/><path d="M8 2h2v2h-2z M12 4h2v2h-2z M16 3h2v2h-2z M19 8h2v2h-2z M14 9h2v2h-2z M1 12h2v2h-2z M6 11h2v2h-2z M9 15h2v2h-2z M4 17h2v2h-2z M12 19h2v2h-2z M16 15h2v2h-2z" fill="#404040"/></svg><div class=t style="left:247px;top:541.71px;font-size:15.7px;color:#000;">goebbels_villa_windows_cmp</div><svg class=a style="left:191px;top:561.5px;" width="23" height="24" viewBox="0 0 23 24"><path d="M6 1 L12 0 L18 1 L22 4 L22 10 L18 13 L16 20 L12 23 L6 22 L1 18 L0 11 L3 6Z" fill="#b4b4b4"/><path d="M11 1 L18 1 L22 4 L22 10 L17 12 L12 9Z" fill="#e8e8e8"/><path d="M3 10 L10 10 L12 15 L8 20 L3 18Z" fill="#d6d6d6"/><path d="M8 2h2v2h-2z M12 4h2v2h-2z M16 3h2v2h-2z M19 8h2v2h-2z M14 9h2v2h-2z M1 12h2v2h-2z M6 11h2v2h-2z M9 15h2v2h-2z M4 17h2v2h-2z M12 19h2v2h-2z M16 15h2v2h-2z" fill="#404040"/></svg><div class=a style="left:218px;top:562.5px;width:143.89px;height:22px;background:#d9d9d9"></div><div class=t style="left:220px;top:565.71px;font-size:15.7px;color:#000;">goebbels_villa_cmp</div><svg class=a style="left:191px;top:585.5px;" width="23" height="24" viewBox="0 0 23 24"><path d="M6 1 L12 0 L18 1 L22 4 L22 10 L18 13 L16 20 L12 23 L6 22 L1 18 L0 11 L3 6Z" fill="#b4b4b4"/><path d="M11 1 L18 1 L22 4 L22 10 L17 12 L12 9Z" fill="#e8e8e8"/><path d="M3 10 L10 10 L12 15 L8 20 L3 18Z" fill="#d6d6d6"/><path d="M8 2h2v2h-2z M12 4h2v2h-2z M16 3h2v2h-2z M19 8h2v2h-2z M14 9h2v2h-2z M1 12h2v2h-2z M6 11h2v2h-2z M9 15h2v2h-2z M4 17h2v2h-2z M12 19h2v2h-2z M16 15h2v2h-2z" fill="#404040"/></svg><div class=t style="left:220px;top:589.71px;font-size:15.7px;color:#000;">goebbels_villa_probes_cmp</div><div class=a style="left:116px;top:615.5px;width:13px;height:13px;background:#fff;border:1px solid #8a8a8a;box-sizing:border-box"></div><div class=a style="left:119px;top:621.5px;width:7px;height:1.3px;background:#000"></div><svg class=a style="left:139px;top:611.5px;" width="21" height="20" viewBox="0 0 21 20"><path d="M0 5 L5 0 H21 V14 L16 19 H0Z" fill="#000"/><path d="M7 19 V5 L11 1 H13 L9 5 V19Z" fill="#9aa0a8"/><path d="M2 7h3v3h-3z M11 7h3v3h-3z M2 15h3v3h-3z M11 15h3v3h-3z M4 2h2v2h-2z M14 1h3v2h-3z" fill="#f4f0a0"/><path d="M16 5h2v2h-2z M18 8h2v2h-2z M16 11h2v2h-2z M19 3h1v2h-1z" fill="#c8c088"/><path d="M1 12.5H5 M10 12.5H15" stroke="#8a8a8a" stroke-width="1"/></svg><div class=t style="left:166px;top:613.71px;font-size:15.7px;color:#000;">unics_background</div><div class=a style="left:143px;top:639.5px;width:13px;height:13px;background:#fff;border:1px solid #8a8a8a;box-sizing:border-box"></div><div class=a style="left:146px;top:645.5px;width:7px;height:1.3px;background:#000"></div><svg class=a style="left:166px;top:635.5px;" width="21" height="20" viewBox="0 0 21 20"><path d="M1 5 H19 V18 H1Z" fill="#8a8a8a"/><rect x="2" y="6" width="17" height="12" fill="#f2f27a"/><path d="M4 8h2v2h-2z M10 8h2v2h-2z M16 8h2v2h-2z M7 12h2v2h-2z M13 12h2v2h-2z" fill="#ffff20"/><path d="M3 18.5 H20 V6" fill="none" stroke="#000" stroke-width="2"/><path d="M1 1 L8 8 M8 1 L1 8" stroke="#c00000" stroke-width="2"/></svg><div class=t style="left:193px;top:637.71px;font-size:15.7px;color:#000;">berlin_goebbels_villa_background</div><svg class=a style="left:191px;top:657.5px;" width="23" height="24" viewBox="0 0 23 24"><path d="M6 1 L12 0 L18 1 L22 4 L22 10 L18 13 L16 20 L12 23 L6 22 L1 18 L0 11 L3 6Z" fill="#b4b4b4"/><path d="M11 1 L18 1 L22 4 L22 10 L17 12 L12 9Z" fill="#e8e8e8"/><path d="M3 10 L10 10 L12 15 L8 20 L3 18Z" fill="#d6d6d6"/><path d="M8 2h2v2h-2z M12 4h2v2h-2z M16 3h2v2h-2z M19 8h2v2h-2z M14 9h2v2h-2z M1 12h2v2h-2z M6 11h2v2h-2z M9 15h2v2h-2z M4 17h2v2h-2z M12 19h2v2h-2z M16 15h2v2h-2z" fill="#404040"/></svg><div class=t style="left:220px;top:661.71px;font-size:15.7px;color:#000;">goebbels_villa_background_cmp</div><div class=a style="left:2px;top:902px;width:468px;height:204px;background:#c4c4c4"></div><div class=a style="left:14px;top:910px;width:443px;height:33px;background:#efefef;border-top:1px solid #fff;border-left:1px solid #fff;border-right:1.5px solid #7a7a7a;border-bottom:2px solid #7a7a7a;box-sizing:border-box"></div><div class=t style="left:193.89px;top:916.39px;font-size:20.8px;color:#000;">composit</div><div class=t style="left:14px;top:955.39px;font-size:20.8px;color:#000;">Filter:</div><div class=a style="left:14px;top:982px;width:443px;height:30px;background:#fff;border:1px solid #e6e6e6;box-sizing:border-box"></div><div class=t style="left:23px;top:987.12px;font-size:20.3px;color:#000;">goebbels_villa</div><div class=t style="left:14px;top:1023.39px;font-size:20.8px;color:#000;">Search:</div><div class=a style="left:14px;top:1050px;width:443px;height:29.5px;background:#fff;border:1px solid #e6e6e6;box-sizing:border-box"></div><div class=a style="left:470px;top:122px;width:2px;height:984px;background:#fff"></div><div class=a style="left:472px;top:122px;width:2px;height:984px;background:#8a8a8a"></div><div class=a style="left:474px;top:122px;width:1px;height:984px;background:#fff"></div><svg class=a style="left:475px;top:122px" width="1024" height="982" viewBox="475 120 1024 982"><defs><linearGradient id="skv" x1="0" y1="0" x2="0" y2="1"><stop offset="0" stop-color="#b8d3e7"/><stop offset="0.3" stop-color="#bed7e9"/><stop offset="0.6" stop-color="#cfdde9"/><stop offset="0.85" stop-color="#dfe5ec"/><stop offset="1" stop-color="#e8ebef"/></linearGradient><linearGradient id="sev" x1="0" y1="0" x2="0" y2="1"><stop offset="0" stop-color="#8b98a8"/><stop offset="0.12" stop-color="#8a99aa"/><stop offset="0.28" stop-color="#6a829c"/><stop offset="0.4" stop-color="#4b6383"/><stop offset="0.55" stop-color="#304666"/><stop offset="0.72" stop-color="#233858"/><stop offset="0.88" stop-color="#1b2c4c"/><stop offset="1" stop-color="#162645"/></linearGradient><filter id="blv" x="-50%" y="-50%" width="200%" height="200%"><feGaussianBlur stdDeviation="10"/></filter></defs><rect x="475" y="120" width="1024" height="207" fill="url(#skv)"/><rect x="475" y="327" width="1024" height="775" fill="url(#sev)"/><g filter="url(#blv)"><ellipse cx="560" cy="220" rx="110" ry="55" fill="#e4e8ee" opacity="0.85"/><ellipse cx="720" cy="215" rx="140" ry="60" fill="#e2e7ed" opacity="0.85"/><ellipse cx="880" cy="230" rx="120" ry="55" fill="#e0e5eb" opacity="0.8"/><ellipse cx="1000" cy="205" rx="80" ry="45" fill="#e6eaef" opacity="0.8"/><ellipse cx="1080" cy="250" rx="160" ry="45" fill="#dfe4ea" opacity="0.75"/><ellipse cx="1300" cy="260" rx="200" ry="45" fill="#e2e6ec" opacity="0.7"/><ellipse cx="1420" cy="210" rx="90" ry="40" fill="#e6eaee" opacity="0.6"/><ellipse cx="700" cy="290" rx="260" ry="30" fill="#e8ebef" opacity="0.8"/><ellipse cx="1200" cy="300" rx="320" ry="28" fill="#e9ecef" opacity="0.8"/><ellipse cx="640" cy="255" rx="120" ry="25" fill="#cfd6de" opacity="0.5"/><ellipse cx="900" cy="265" rx="120" ry="22" fill="#cfd6de" opacity="0.5"/></g><path d="M665 785 L1302 785 L1302 806 L1052 806 L1052 835 L790 835 L790 806 L665 806Z" fill="#0b0f1a"/><path d="M737 543 L1228 543 L1341 641 L1341 650 L630 650 L630 636Z" fill="#aaa6a4"/><path d="M745.0 546 L640.0 634" stroke="#9c928c" stroke-width="3" opacity="0.55"/><path d="M759.6 546 L660.8 634" stroke="#9c928c" stroke-width="3" opacity="0.55"/><path d="M774.2 546 L681.6 634" stroke="#9c928c" stroke-width="3" opacity="0.55"/><path d="M788.8 546 L702.4 634" stroke="#9c928c" stroke-width="3" opacity="0.55"/><path d="M803.4 546 L723.2 634" stroke="#9c928c" stroke-width="3" opacity="0.55"/><path d="M818.0 546 L744.0 634" stroke="#9c928c" stroke-width="3" opacity="0.55"/><path d="M832.6 546 L764.8 634" stroke="#9c928c" stroke-width="3" opacity="0.55"/><path d="M847.2 546 L785.6 634" stroke="#9c928c" stroke-width="3" opacity="0.55"/><path d="M861.8 546 L806.4 634" stroke="#9c928c" stroke-width="3" opacity="0.55"/><path d="M876.4 546 L827.2 634" stroke="#9c928c" stroke-width="3" opacity="0.55"/><path d="M891.0 546 L848.0 634" stroke="#9c928c" stroke-width="3" opacity="0.55"/><path d="M905.6 546 L868.8 634" stroke="#9c928c" stroke-width="3" opacity="0.55"/><path d="M920.2 546 L889.6 634" stroke="#9c928c" stroke-width="3" opacity="0.55"/><path d="M934.8 546 L910.4 634" stroke="#9c928c" stroke-width="3" opacity="0.55"/><path d="M949.4 546 L931.2 634" stroke="#9c928c" stroke-width="3" opacity="0.55"/><path d="M964.0 546 L952.0 634" stroke="#9c928c" stroke-width="3" opacity="0.55"/><path d="M978.6 546 L972.8 634" stroke="#9c928c" stroke-width="3" opacity="0.55"/><path d="M993.2 546 L993.6 634" stroke="#9c928c" stroke-width="3" opacity="0.55"/><path d="M1007.8 546 L1014.4 634" stroke="#9c928c" stroke-width="3" opacity="0.55"/><path d="M1022.4 546 L1035.2 634" stroke="#9c928c" stroke-width="3" opacity="0.55"/><path d="M1037.0 546 L1056.0 634" stroke="#9c928c" stroke-width="3" opacity="0.55"/><path d="M1051.6 546 L1076.8 634" stroke="#9c928c" stroke-width="3" opacity="0.55"/><path d="M1066.2 546 L1097.6 634" stroke="#9c928c" stroke-width="3" opacity="0.55"/><path d="M1080.8 546 L1118.4 634" stroke="#9c928c" stroke-width="3" opacity="0.55"/><path d="M1095.4 546 L1139.2 634" stroke="#9c928c" stroke-width="3" opacity="0.55"/><path d="M1110.0 546 L1160.0 634" stroke="#9c928c" stroke-width="3" opacity="0.55"/><path d="M1124.6 546 L1180.8 634" stroke="#9c928c" stroke-width="3" opacity="0.55"/><path d="M1139.2 546 L1201.6 634" stroke="#9c928c" stroke-width="3" opacity="0.55"/><path d="M1153.8 546 L1222.4 634" stroke="#9c928c" stroke-width="3" opacity="0.55"/><path d="M1168.4 546 L1243.2 634" stroke="#9c928c" stroke-width="3" opacity="0.55"/><path d="M1183.0 546 L1264.0 634" stroke="#9c928c" stroke-width="3" opacity="0.55"/><path d="M1197.6 546 L1284.8 634" stroke="#9c928c" stroke-width="3" opacity="0.55"/><path d="M1212.2 546 L1305.6 634" stroke="#9c928c" stroke-width="3" opacity="0.55"/><path d="M1226.8 546 L1326.4 634" stroke="#9c928c" stroke-width="3" opacity="0.55"/><path d="M737 542 L1228 542 L1232 546 L733 546Z" fill="#e6e6e6"/><path d="M737 543 L630 636 L640 636 L745 546Z" fill="#d8d8d8"/><path d="M1228 543 L1341 641 L1330 641 L1220 546Z" fill="#d8d8d8"/><path d="M630 634 L1341 641 L1341 652 L630 648Z" fill="#f2f2f2"/><rect x="775" y="537" width="14" height="12" fill="#a08070"/><rect x="1060" y="537" width="12" height="12" fill="#a08070"/><rect x="1140" y="537" width="12" height="12" fill="#a08070"/><rect x="700" y="590" width="14" height="14" fill="#8a7060"/><rect x="790" y="590" width="12" height="12" fill="#8a7060"/><rect x="1050" y="590" width="14" height="14" fill="#6a6060"/><rect x="1130" y="585" width="16" height="14" fill="#6a6060"/><path d="M632 650 L1161 650 L1163 784 L640 784Z" fill="#dcdee0"/><path d="M1161 642 L1341 642 L1327 790 L1163 790Z" fill="#d6d9dc"/><path d="M632 694 L1161 694 L1161 700 L632 700Z" fill="#eeeeee"/><path d="M1161 642 L1170 642 L1172 790 L1163 790Z" fill="#b8c0c8"/><path d="M1300 660 L1327 660 L1318 790 L1300 790Z" fill="#b8c0c8"/><rect x="668.0" y="663" width="13" height="17" fill="#5e6c70" stroke="#30d030" stroke-width="1.6"/><rect x="698.5" y="663" width="13" height="17" fill="#5e6c70" stroke="#30d030" stroke-width="1.6"/><rect x="729.0" y="663" width="13" height="17" fill="#5e6c70" stroke="#30d030" stroke-width="1.6"/><rect x="759.5" y="663" width="13" height="17" fill="#5e6c70" stroke="#30d030" stroke-width="1.6"/><rect x="790.0" y="663" width="13" height="17" fill="#5e6c70" stroke="#30d030" stroke-width="1.6"/><rect x="820.5" y="663" width="13" height="17" fill="#5e6c70" stroke="#30d030" stroke-width="1.6"/><rect x="851.0" y="663" width="13" height="17" fill="#5e6c70" stroke="#30d030" stroke-width="1.6"/><rect x="881.5" y="663" width="13" height="17" fill="#5e6c70" stroke="#30d030" stroke-width="1.6"/><rect x="912.0" y="663" width="13" height="17" fill="#5e6c70" stroke="#30d030" stroke-width="1.6"/><rect x="942.5" y="663" width="13" height="17" fill="#5e6c70" stroke="#30d030" stroke-width="1.6"/><rect x="973.0" y="663" width="13" height="17" fill="#5e6c70" stroke="#30d030" stroke-width="1.6"/><rect x="1003.5" y="663" width="13" height="17" fill="#5e6c70" stroke="#30d030" stroke-width="1.6"/><rect x="1034.0" y="663" width="13" height="17" fill="#5e6c70" stroke="#30d030" stroke-width="1.6"/><rect x="1064.5" y="663" width="13" height="17" fill="#5e6c70" stroke="#30d030" stroke-width="1.6"/><rect x="1095.0" y="663" width="13" height="17" fill="#5e6c70" stroke="#30d030" stroke-width="1.6"/><rect x="1125.5" y="663" width="13" height="17" fill="#5e6c70" stroke="#30d030" stroke-width="1.6"/><rect x="1156.0" y="663" width="13" height="17" fill="#5e6c70" stroke="#30d030" stroke-width="1.6"/><rect x="668.0" y="705" width="13" height="24" fill="#5e6c70" stroke="#30d030" stroke-width="1.6"/><rect x="698.5" y="705" width="13" height="24" fill="#5e6c70" stroke="#30d030" stroke-width="1.6"/><rect x="729.0" y="705" width="13" height="24" fill="#5e6c70" stroke="#30d030" stroke-width="1.6"/><rect x="759.5" y="705" width="13" height="24" fill="#5e6c70" stroke="#30d030" stroke-width="1.6"/><rect x="790.0" y="705" width="13" height="24" fill="#5e6c70" stroke="#30d030" stroke-width="1.6"/><rect x="820.5" y="705" width="13" height="24" fill="#5e6c70" stroke="#30d030" stroke-width="1.6"/><rect x="851.0" y="705" width="13" height="24" fill="#5e6c70" stroke="#30d030" stroke-width="1.6"/><rect x="973.0" y="705" width="13" height="24" fill="#5e6c70" stroke="#30d030" stroke-width="1.6"/><rect x="1003.5" y="705" width="13" height="24" fill="#5e6c70" stroke="#30d030" stroke-width="1.6"/><rect x="1034.0" y="705" width="13" height="24" fill="#5e6c70" stroke="#30d030" stroke-width="1.6"/><rect x="1064.5" y="705" width="13" height="24" fill="#5e6c70" stroke="#30d030" stroke-width="1.6"/><rect x="1095.0" y="705" width="13" height="24" fill="#5e6c70" stroke="#30d030" stroke-width="1.6"/><rect x="1125.5" y="705" width="13" height="24" fill="#5e6c70" stroke="#30d030" stroke-width="1.6"/><rect x="1156.0" y="705" width="13" height="24" fill="#5e6c70" stroke="#30d030" stroke-width="1.6"/><rect x="668.0" y="738" width="13" height="36" fill="#5e6c70" stroke="#30d030" stroke-width="1.6"/><rect x="698.5" y="738" width="13" height="36" fill="#5e6c70" stroke="#30d030" stroke-width="1.6"/><rect x="729.0" y="738" width="13" height="36" fill="#5e6c70" stroke="#30d030" stroke-width="1.6"/><rect x="759.5" y="738" width="13" height="36" fill="#5e6c70" stroke="#30d030" stroke-width="1.6"/><rect x="790.0" y="738" width="13" height="36" fill="#5e6c70" stroke="#30d030" stroke-width="1.6"/><rect x="820.5" y="738" width="13" height="36" fill="#5e6c70" stroke="#30d030" stroke-width="1.6"/><rect x="851.0" y="738" width="13" height="36" fill="#5e6c70" stroke="#30d030" stroke-width="1.6"/><rect x="973.0" y="738" width="13" height="36" fill="#5e6c70" stroke="#30d030" stroke-width="1.6"/><rect x="1003.5" y="738" width="13" height="36" fill="#5e6c70" stroke="#30d030" stroke-width="1.6"/><rect x="1034.0" y="738" width="13" height="36" fill="#5e6c70" stroke="#30d030" stroke-width="1.6"/><rect x="1064.5" y="738" width="13" height="36" fill="#5e6c70" stroke="#30d030" stroke-width="1.6"/><rect x="1095.0" y="738" width="13" height="36" fill="#5e6c70" stroke="#30d030" stroke-width="1.6"/><rect x="1125.5" y="738" width="13" height="36" fill="#5e6c70" stroke="#30d030" stroke-width="1.6"/><rect x="1156.0" y="738" width="13" height="36" fill="#5e6c70" stroke="#30d030" stroke-width="1.6"/><rect x="1196" y="736" width="13" height="42" fill="#5e6c70" stroke="#30d030" stroke-width="1.6"/><rect x="1218" y="736" width="13" height="42" fill="#5e6c70" stroke="#30d030" stroke-width="1.6"/><rect x="1240" y="736" width="13" height="42" fill="#5e6c70" stroke="#30d030" stroke-width="1.6"/><rect x="1222" y="666" width="14" height="17" fill="#5e6c70" stroke="#30d030" stroke-width="1.6"/><rect x="1244" y="666" width="14" height="17" fill="#5e6c70" stroke="#30d030" stroke-width="1.6"/><rect x="1266" y="666" width="14" height="17" fill="#5e6c70" stroke="#30d030" stroke-width="1.6"/><path d="M863 686 L968 686 L970 743 L860 743Z" fill="#989494"/><path d="M862 743 L968 743 L968 800 L862 800Z" fill="#aeb8c4"/><rect x="870" y="745" width="7" height="55" fill="#e8e8ec"/><rect x="898" y="745" width="7" height="55" fill="#e8e8ec"/><rect x="926" y="745" width="7" height="55" fill="#e8e8ec"/><rect x="954" y="745" width="7" height="55" fill="#e8e8ec"/><path d="M842 800 L1000 800 L1000 820 L842 820Z" fill="#e8e8e8"/><ellipse cx="745" cy="620" rx="14" ry="8" fill="none" stroke="#f0f040" stroke-width="1.3"/><ellipse cx="770" cy="610" rx="10" ry="12" fill="none" stroke="#f0f040" stroke-width="1.3"/><ellipse cx="800" cy="615" rx="16" ry="9" fill="none" stroke="#f0f040" stroke-width="1.3"/><ellipse cx="830" cy="630" rx="12" ry="8" fill="none" stroke="#f0f040" stroke-width="1.3"/><ellipse cx="860" cy="615" rx="10" ry="10" fill="none" stroke="#f0f040" stroke-width="1.3"/><ellipse cx="1080" cy="620" rx="14" ry="10" fill="none" stroke="#f0f040" stroke-width="1.3"/><ellipse cx="1100" cy="600" rx="10" ry="8" fill="none" stroke="#f0f040" stroke-width="1.3"/><ellipse cx="1150" cy="590" rx="8" ry="6" fill="none" stroke="#f0f040" stroke-width="1.3"/><ellipse cx="1195" cy="600" rx="6" ry="5" fill="none" stroke="#f0f040" stroke-width="1.3"/><ellipse cx="700" cy="700" rx="12" ry="15" fill="none" stroke="#f0f040" stroke-width="1.3"/><ellipse cx="720" cy="695" rx="16" ry="10" fill="none" stroke="#f0f040" stroke-width="1.3"/><ellipse cx="1030" cy="700" rx="10" ry="12" fill="none" stroke="#f0f040" stroke-width="1.3"/><ellipse cx="770" cy="580" rx="8" ry="6" fill="none" stroke="#f0f040" stroke-width="1.3"/><ellipse cx="900" cy="580" rx="9" ry="7" fill="none" stroke="#f0f040" stroke-width="1.3"/><ellipse cx="960" cy="580" rx="7" ry="6" fill="none" stroke="#f0f040" stroke-width="1.3"/><ellipse cx="1060" cy="560" rx="5" ry="5" fill="none" stroke="#f0f040" stroke-width="1.3"/><ellipse cx="1120" cy="562" rx="18" ry="4" fill="none" stroke="#f0f040" stroke-width="1.3"/><path d="M750 478 L538 619 L630 804 L1338 804 L1428 619 L1221 478Z M538 619 L1428 619 M750 478 L737 543 M1221 478 L1210 543" fill="none" stroke="#d01818" stroke-width="1.6"/><rect x="475" y="120" width="192.5" height="36" fill="#000"/><text x="531.63" y="146" font-family="Liberation Sans" font-size="23" fill="#fff">Custom</text></svg><div class=a style="left:1499px;top:122px;width:2px;height:984px;background:#fff"></div><div class=a style="left:1501px;top:122px;width:2px;height:984px;background:#8a8a8a"></div><div class=a style="left:1503px;top:122px;width:1px;height:984px;background:#fff"></div><div class=a style="left:1503px;top:122px;width:346px;height:30.5px;background:#03519c"></div><div class=t style="left:1518px;top:127.27px;font-size:17.4px;color:#fff;">Composit Outliner</div><div class=a style="left:1823px;top:126px;width:23px;height:23px;background:#efefef;border-right:1.5px solid #8a8a8a;border-bottom:1.5px solid #8a8a8a;border-top:1px solid #fff;border-left:1px solid #fff;box-sizing:border-box"></div><svg class=a style="left:1828px;top:131px;" width="13" height="13" viewBox="0 0 13 13"><path d="M1.5 1.5 L11.5 11.5 M11.5 1.5 L1.5 11.5" stroke="#000" stroke-width="2.6"/></svg><div class=a style="left:1503px;top:152.5px;width:346px;height:303.5px;background:#fff"></div><div class=a style="left:1823px;top:152.5px;width:26px;height:303.5px;background:#f2f2f2"></div><div class=a style="left:1830px;top:344px;width:12px;height:85.5px;background:#8a8a8a"></div><div class=a style="left:1543px;top:165px;width:18px;height:1px;border-top:1px dotted #8a8a8a;box-sizing:border-box"></div><svg class=a style="left:1561px;top:155px;" width="21" height="20" viewBox="0 0 21 20"><ellipse cx="10" cy="9" rx="6" ry="8" fill="#22a022"/><ellipse cx="9" cy="8" rx="3" ry="6" fill="#60d040"/><rect x="9" y="14" width="2.5" height="6" fill="#8a5a20"/></svg><div class=t style="left:1587px;top:157.21px;font-size:15.7px;color:#000;">goebbels_villa_balustrade_c</div><div class=a style="left:1543px;top:189px;width:18px;height:1px;border-top:1px dotted #8a8a8a;box-sizing:border-box"></div><svg class=a style="left:1561px;top:179px;" width="21" height="20" viewBox="0 0 21 20"><ellipse cx="10" cy="9" rx="6" ry="8" fill="#22a022"/><ellipse cx="9" cy="8" rx="3" ry="6" fill="#60d040"/><rect x="9" y="14" width="2.5" height="6" fill="#8a5a20"/></svg><div class=t style="left:1587px;top:181.21px;font-size:15.7px;color:#000;">goebbels_villa_balustrade_d</div><div class=a style="left:1543px;top:213px;width:18px;height:1px;border-top:1px dotted #8a8a8a;box-sizing:border-box"></div><svg class=a style="left:1561px;top:203px;" width="21" height="20" viewBox="0 0 21 20"><ellipse cx="10" cy="9" rx="6" ry="8" fill="#22a022"/><ellipse cx="9" cy="8" rx="3" ry="6" fill="#60d040"/><rect x="9" y="14" width="2.5" height="6" fill="#8a5a20"/></svg><div class=t style="left:1587px;top:205.21px;font-size:15.7px;color:#000;">goebbels_villa_fences_a</div><div class=a style="left:1543px;top:237px;width:18px;height:1px;border-top:1px dotted #8a8a8a;box-sizing:border-box"></div><svg class=a style="left:1561px;top:227px;" width="21" height="20" viewBox="0 0 21 20"><ellipse cx="10" cy="9" rx="6" ry="8" fill="#22a022"/><ellipse cx="9" cy="8" rx="3" ry="6" fill="#60d040"/><rect x="9" y="14" width="2.5" height="6" fill="#8a5a20"/></svg><div class=t style="left:1587px;top:229.21px;font-size:15.7px;color:#000;">goebbels_villa_fences_b</div><div class=a style="left:1543px;top:261px;width:18px;height:1px;border-top:1px dotted #8a8a8a;box-sizing:border-box"></div><svg class=a style="left:1561px;top:251px;" width="21" height="20" viewBox="0 0 21 20"><ellipse cx="10" cy="9" rx="6" ry="8" fill="#22a022"/><ellipse cx="9" cy="8" rx="3" ry="6" fill="#60d040"/><rect x="9" y="14" width="2.5" height="6" fill="#8a5a20"/></svg><div class=t style="left:1587px;top:253.21px;font-size:15.7px;color:#000;">goebbels_villa_fences_c</div><div class=a style="left:1543px;top:285px;width:18px;height:1px;border-top:1px dotted #8a8a8a;box-sizing:border-box"></div><svg class=a style="left:1561px;top:275px;" width="21" height="20" viewBox="0 0 21 20"><ellipse cx="10" cy="9" rx="6" ry="8" fill="#22a022"/><ellipse cx="9" cy="8" rx="3" ry="6" fill="#60d040"/><rect x="9" y="14" width="2.5" height="6" fill="#8a5a20"/></svg><div class=t style="left:1587px;top:277.21px;font-size:15.7px;color:#000;">goebbels_villa_fences_d</div><div class=a style="left:1543px;top:309px;width:18px;height:1px;border-top:1px dotted #8a8a8a;box-sizing:border-box"></div><svg class=a style="left:1561px;top:299px;" width="21" height="20" viewBox="0 0 21 20"><ellipse cx="10" cy="9" rx="6" ry="8" fill="#22a022"/><ellipse cx="9" cy="8" rx="3" ry="6" fill="#60d040"/><rect x="9" y="14" width="2.5" height="6" fill="#8a5a20"/></svg><div class=t style="left:1587px;top:301.21px;font-size:15.7px;color:#000;">goebbels_villa_fences_e</div><div class=a style="left:1543px;top:333px;width:18px;height:1px;border-top:1px dotted #8a8a8a;box-sizing:border-box"></div><svg class=a style="left:1561px;top:323px;" width="21" height="20" viewBox="0 0 21 20"><ellipse cx="10" cy="9" rx="6" ry="8" fill="#22a022"/><ellipse cx="9" cy="8" rx="3" ry="6" fill="#60d040"/><rect x="9" y="14" width="2.5" height="6" fill="#8a5a20"/></svg><div class=t style="left:1587px;top:325.21px;font-size:15.7px;color:#000;">goebbels_villa_fences_f</div><div class=a style="left:1543px;top:357px;width:18px;height:1px;border-top:1px dotted #8a8a8a;box-sizing:border-box"></div><svg class=a style="left:1561px;top:347px;" width="21" height="20" viewBox="0 0 21 20"><ellipse cx="10" cy="9" rx="6" ry="8" fill="#22a022"/><ellipse cx="9" cy="8" rx="3" ry="6" fill="#60d040"/><rect x="9" y="14" width="2.5" height="6" fill="#8a5a20"/></svg><div class=t style="left:1587px;top:349.21px;font-size:15.7px;color:#000;">goebbels_villa_stairs_a</div><div class=a style="left:1543px;top:381px;width:18px;height:1px;border-top:1px dotted #8a8a8a;box-sizing:border-box"></div><svg class=a style="left:1559px;top:369px;" width="23" height="24" viewBox="0 0 23 24"><path d="M6 1 L12 0 L18 1 L22 4 L22 10 L18 13 L16 20 L12 23 L6 22 L1 18 L0 11 L3 6Z" fill="#b4b4b4"/><path d="M11 1 L18 1 L22 4 L22 10 L17 12 L12 9Z" fill="#e8e8e8"/><path d="M3 10 L10 10 L12 15 L8 20 L3 18Z" fill="#d6d6d6"/><path d="M8 2h2v2h-2z M12 4h2v2h-2z M16 3h2v2h-2z M19 8h2v2h-2z M14 9h2v2h-2z M1 12h2v2h-2z M6 11h2v2h-2z M9 15h2v2h-2z M4 17h2v2h-2z M12 19h2v2h-2z M16 15h2v2h-2z" fill="#404040"/></svg><div class=t style="left:1587px;top:373.21px;font-size:15.7px;color:#000;">goebbels_villa_indoor1_cmp</div><div class=a style="left:1543px;top:405px;width:18px;height:1px;border-top:1px dotted #8a8a8a;box-sizing:border-box"></div><svg class=a style="left:1559px;top:393px;" width="23" height="24" viewBox="0 0 23 24"><path d="M6 1 L12 0 L18 1 L22 4 L22 10 L18 13 L16 20 L12 23 L6 22 L1 18 L0 11 L3 6Z" fill="#b4b4b4"/><path d="M11 1 L18 1 L22 4 L22 10 L17 12 L12 9Z" fill="#e8e8e8"/><path d="M3 10 L10 10 L12 15 L8 20 L3 18Z" fill="#d6d6d6"/><path d="M8 2h2v2h-2z M12 4h2v2h-2z M16 3h2v2h-2z M19 8h2v2h-2z M14 9h2v2h-2z M1 12h2v2h-2z M6 11h2v2h-2z M9 15h2v2h-2z M4 17h2v2h-2z M12 19h2v2h-2z M16 15h2v2h-2z" fill="#404040"/></svg><div class=a style="left:1585px;top:394px;width:202.99px;height:22px;background:#d9d9d9"></div><div class=t style="left:1587px;top:397.21px;font-size:15.7px;color:#000;">goebbels_villa_indoor2_cmp</div><div class=a style="left:1543px;top:429px;width:18px;height:1px;border-top:1px dotted #8a8a8a;box-sizing:border-box"></div><svg class=a style="left:1559px;top:417px;" width="23" height="24" viewBox="0 0 23 24"><path d="M6 1 L12 0 L18 1 L22 4 L22 10 L18 13 L16 20 L12 23 L6 22 L1 18 L0 11 L3 6Z" fill="#b4b4b4"/><path d="M11 1 L18 1 L22 4 L22 10 L17 12 L12 9Z" fill="#e8e8e8"/><path d="M3 10 L10 10 L12 15 L8 20 L3 18Z" fill="#d6d6d6"/><path d="M8 2h2v2h-2z M12 4h2v2h-2z M16 3h2v2h-2z M19 8h2v2h-2z M14 9h2v2h-2z M1 12h2v2h-2z M6 11h2v2h-2z M9 15h2v2h-2z M4 17h2v2h-2z M12 19h2v2h-2z M16 15h2v2h-2z" fill="#404040"/></svg><div class=t style="left:1587px;top:421.21px;font-size:15.7px;color:#000;">goebbels_villa_indoor3_cmp</div><div class=a style="left:1543px;top:153px;width:1px;height:276px;border-left:1px dotted #8a8a8a;box-sizing:border-box"></div><div class=a style="left:1503px;top:456px;width:346px;height:2px;background:#e8e8e8"></div><div class=a style="left:1503px;top:458px;width:346px;height:2px;background:#8a8a8a"></div><div class=a style="left:1503px;top:460px;width:346px;height:69px;background:#c4c4c4"></div><div class=a style="left:1823px;top:460px;width:26px;height:69px;background:#dadada"></div><div class=a style="left:1517px;top:483px;width:292px;height:56px;border:1px solid #e6e6e6;border-right-color:#9a9a9a;border-bottom-color:#9a9a9a;box-sizing:border-box"></div><div class=a style="left:1528px;top:512px;width:270px;height:17px;background:#efefef;border:1px solid #fff;border-right-color:#777;box-sizing:border-box"></div><div class=a style="left:1522px;top:473px;width:283px;height:33px;background:#808080;border:1.3px solid #000;box-sizing:border-box"></div><div class=t style="left:1528px;top:479.39px;font-size:20.8px;color:#000;">-</div><div class=t style="left:1629.4px;top:479.39px;font-size:20.8px;color:#000;">Entities</div><div class=a style="left:1503px;top:524px;width:346px;height:2px;background:#8a8a8a"></div><div class=a style="left:1503px;top:526px;width:346px;height:3px;background:#f0f0f0"></div><div class=a style="left:1503px;top:529px;width:346px;height:30.5px;background:#03519c"></div><div class=t style="left:1518px;top:534.27px;font-size:17.4px;color:#fff;">Properties</div><div class=a style="left:1822.5px;top:533px;width:23.5px;height:23px;background:#efefef;border-right:1.5px solid #8a8a8a;border-bottom:1.5px solid #8a8a8a;border-top:1px solid #fff;border-left:1px solid #fff;box-sizing:border-box"></div><svg class=a style="left:1827.75px;top:538px;" width="13" height="13" viewBox="0 0 13 13"><path d="M1.5 1.5 L11.5 11.5 M11.5 1.5 L1.5 11.5" stroke="#000" stroke-width="2.6"/></svg><div class=a style="left:1503px;top:559.5px;width:346px;height:543.5px;background:#c4c4c4"></div><div class=a style="left:1823px;top:559.5px;width:26px;height:543.5px;background:#dadada"></div><div class=a style="left:1831px;top:585px;width:11px;height:299.5px;background:#8a8a8a"></div><div class=a style="left:1516.5px;top:580px;width:294px;height:133px;border:1px solid #e6e6e6;border-right-color:#9a9a9a;border-bottom-color:#9a9a9a;box-sizing:border-box"></div><div class=a style="left:1522px;top:571px;width:282px;height:32px;background:#808080;border:1.3px solid #000;box-sizing:border-box"></div><div class=t style="left:1528px;top:576.89px;font-size:20.8px;color:#000;">-</div><div class=t style="left:1565.33px;top:576.89px;font-size:20.8px;color:#000;">Common parameters</div><div class=t style="left:1528px;top:612.39px;font-size:20.8px;color:#000;">Type: composit</div><div class=t style="left:1529px;top:650.39px;font-size:20.8px;color:#fff;">Name:</div><div class=t style="left:1528px;top:649.39px;font-size:20.8px;color:#9a9a9a;">Name:</div><div class=a style="left:1528px;top:677px;width:270px;height:29px;background:#c8c8c8;border:1px solid #e8e8e8;border-top-color:#a8a8a8;border-left-color:#a8a8a8;box-sizing:border-box;overflow:hidden"></div><div class=a style="left:1528px;top:677px;width:268px;height:29px;overflow:hidden"><div class=t style="left:8px;top:3.89px;font-size:20.8px;color:#7d7d7d">goebbels_villa_cmp</div></div><div class=a style="left:1516.5px;top:735px;width:294px;height:388px;border:1px solid #e6e6e6;border-right-color:#9a9a9a;border-bottom-color:#9a9a9a;box-sizing:border-box"></div><div class=a style="left:1522px;top:726px;width:282px;height:32px;background:#808080;border:1.3px solid #000;box-sizing:border-box"></div><div class=t style="left:1528px;top:731.89px;font-size:20.8px;color:#000;">-</div><div class=t style="left:1539.89px;top:731.89px;font-size:20.8px;color:#000;">Object specific parameters</div><div class=a style="left:1528px;top:779px;width:270px;height:12px;border:1px solid #e6e6e6;border-right-color:#9a9a9a;border-bottom-color:#9a9a9a;box-sizing:border-box"></div><div class=a style="left:1534px;top:767px;width:258px;height:32px;background:#808080;border:1.3px solid #000;box-sizing:border-box"></div><div class=t style="left:1540px;top:772.89px;font-size:20.8px;color:#000;font-weight:bold;">+</div><div class=t style="left:1591.92px;top:772.89px;font-size:20.8px;color:#000;font-weight:bold;">Material editor</div><div class=a style="left:1528px;top:819px;width:270px;height:304px;border:1px solid #e6e6e6;border-right-color:#9a9a9a;border-bottom-color:#9a9a9a;box-sizing:border-box"></div><div class=a style="left:1534px;top:806px;width:258px;height:31px;background:#808080;border:1.3px solid #000;box-sizing:border-box"></div><div class=t style="left:1540px;top:811.39px;font-size:20.8px;color:#000;">-</div><div class=t style="left:1603.46px;top:811.39px;font-size:20.8px;color:#000;">Object group</div><div class=a style="left:1540px;top:859px;width:246px;height:264px;border:1px solid #e6e6e6;border-right-color:#9a9a9a;border-bottom-color:#9a9a9a;box-sizing:border-box"></div><div class=a style="left:1546px;top:846px;width:235px;height:32px;background:#808080;border:1.3px solid #000;box-sizing:border-box"></div><div class=t style="left:1552px;top:851.89px;font-size:20.8px;color:#000;">-</div><div class=t style="left:1621.31px;top:851.89px;font-size:20.8px;color:#000;">Common</div><div class=a style="left:1552px;top:884px;width:222px;height:33px;background:#efefef;border-top:1px solid #fff;border-left:1px solid #fff;border-right:1.5px solid #7a7a7a;border-bottom:2px solid #7a7a7a;box-sizing:border-box"></div><div class=t style="left:1583.81px;top:890.39px;font-size:20.8px;color:#000;">Object properties</div><div class=a style="left:1552px;top:931px;width:18px;height:18px;background:#fff;border-top:1.5px solid #707070;border-left:1.5px solid #707070;border-right:1px solid #e0e0e0;border-bottom:1px solid #e0e0e0;box-sizing:border-box"></div><div class=t style="left:1578px;top:931.39px;font-size:20.8px;color:#000;">Show position gizmo</div><div class=a style="left:1552px;top:964px;width:44px;height:28px;background:#c8c8c8;border:1px solid #e0e0e0;border-top-color:#a0a0a0;border-left-color:#a0a0a0;box-sizing:border-box"></div><div class=t style="left:1560px;top:968.39px;font-size:20.8px;color:#8a8a8a;">0</div><div class=a style="left:1596px;top:964px;width:29px;height:14px;background:#efefef;border-top:1px solid #fff;border-left:1px solid #fff;border-right:1px solid #707070;border-bottom:1px solid #707070;box-sizing:border-box"></div><div class=a style="left:1596px;top:978px;width:29px;height:14px;background:#efefef;border-top:1px solid #fff;border-left:1px solid #fff;border-right:1px solid #707070;border-bottom:1px solid #707070;box-sizing:border-box"></div><svg class=a style="left:1607.5px;top:969px;" width="6" height="4" viewBox="0 0 6 4"><path d="M0 4 L3 0 L6 4Z" fill="#888"/></svg><svg class=a style="left:1607.5px;top:983px;" width="6" height="4" viewBox="0 0 6 4"><path d="M0 0 L3 4 L6 0Z" fill="#888"/></svg><div class=a style="left:1626px;top:964px;width:44px;height:28px;background:#c8c8c8;border:1px solid #e0e0e0;border-top-color:#a0a0a0;border-left-color:#a0a0a0;box-sizing:border-box"></div><div class=t style="left:1634px;top:968.39px;font-size:20.8px;color:#8a8a8a;">0</div><div class=a style="left:1670px;top:964px;width:29px;height:14px;background:#efefef;border-top:1px solid #fff;border-left:1px solid #fff;border-right:1px solid #707070;border-bottom:1px solid #707070;box-sizing:border-box"></div><div class=a style="left:1670px;top:978px;width:29px;height:14px;background:#efefef;border-top:1px solid #fff;border-left:1px solid #fff;border-right:1px solid #707070;border-bottom:1px solid #707070;box-sizing:border-box"></div><svg class=a style="left:1681.5px;top:969px;" width="6" height="4" viewBox="0 0 6 4"><path d="M0 4 L3 0 L6 4Z" fill="#888"/></svg><svg class=a style="left:1681.5px;top:983px;" width="6" height="4" viewBox="0 0 6 4"><path d="M0 0 L3 4 L6 0Z" fill="#888"/></svg><div class=a style="left:1700px;top:964px;width:44px;height:28px;background:#c8c8c8;border:1px solid #e0e0e0;border-top-color:#a0a0a0;border-left-color:#a0a0a0;box-sizing:border-box"></div><div class=t style="left:1708px;top:968.39px;font-size:20.8px;color:#8a8a8a;">0</div><div class=a style="left:1744px;top:964px;width:29px;height:14px;background:#efefef;border-top:1px solid #fff;border-left:1px solid #fff;border-right:1px solid #707070;border-bottom:1px solid #707070;box-sizing:border-box"></div><div class=a style="left:1744px;top:978px;width:29px;height:14px;background:#efefef;border-top:1px solid #fff;border-left:1px solid #fff;border-right:1px solid #707070;border-bottom:1px solid #707070;box-sizing:border-box"></div><svg class=a style="left:1755.5px;top:969px;" width="6" height="4" viewBox="0 0 6 4"><path d="M0 4 L3 0 L6 4Z" fill="#888"/></svg><svg class=a style="left:1755.5px;top:983px;" width="6" height="4" viewBox="0 0 6 4"><path d="M0 0 L3 4 L6 0Z" fill="#888"/></svg><div class=a style="left:1552px;top:1002.5px;width:222px;height:2px;background:#9a9a9a;border-bottom:1px solid #eee;box-sizing:border-box"></div><div class=t style="left:1552px;top:1016.39px;font-size:20.8px;color:#000;">Rotate around X, deg</div><div class=a style="left:1552px;top:1056.5px;width:97px;height:2.5px;background:#a0a0a0;border-bottom:1px solid #fff;box-sizing:border-box"></div><div class=a style="left:1602px;top:1043px;width:14px;height:29px;background:#e6e6e6;border:1px solid #7a7a7a;border-top-color:#fff;border-left-color:#fff;box-sizing:border-box"></div><div class=a style="left:1663px;top:1043px;width:85px;height:29px;background:#fff;border:1px solid #a0a0a0;box-sizing:border-box"></div><div class=t style="left:1672px;top:1048.39px;font-size:20.8px;color:#000;">0</div><div class=a style="left:1748px;top:1043px;width:26px;height:14.5px;background:#efefef;border-top:1px solid #fff;border-left:1px solid #fff;border-right:1px solid #707070;border-bottom:1px solid #707070;box-sizing:border-box"></div><div class=a style="left:1748px;top:1057.5px;width:26px;height:14.5px;background:#efefef;border-top:1px solid #fff;border-left:1px solid #fff;border-right:1px solid #707070;border-bottom:1px solid #707070;box-sizing:border-box"></div><svg class=a style="left:1758px;top:1048.5px;" width="6" height="4" viewBox="0 0 6 4"><path d="M0 4 L3 0 L6 4Z" fill="#000"/></svg><svg class=a style="left:1758px;top:1062.5px;" width="6" height="4" viewBox="0 0 6 4"><path d="M0 0 L3 4 L6 0Z" fill="#000"/></svg><div class=t style="left:1552px;top:1082.39px;font-size:20.8px;color:#000;">Rotate around Y, deg</div></div><div class=a style="left:0px;top:-2px;width:1849px;height:1106px;border:2px solid #2e2e2e;border-radius:9px;box-sizing:border-box"></div><div class=a style="left:1856px;top:-2px;width:1978px;height:1106px;border-radius:9px;overflow:hidden;background:#f0f0f0;"><div class=a style="left:0px;top:0px;width:1978px;height:45px;background:#f3f3f3"></div><svg class=a style="left:16px;top:11.5px;" width="18" height="21" viewBox="0 0 18 21"><path d="M9 1 L17 8 L12 13 L14 18 L11 20 L9 17 L7 20 L4 18 L6 13 L1 8Z" fill="#5cd0cc" stroke="#1f4a50" stroke-width="1.3"/><path d="M9 5 L12.5 8.5 L9 11.5 L5.5 8.5Z" fill="#dff" stroke="#1f4a50" stroke-width="1.2"/></svg><div class=t style="left:43px;top:13.26px;font-size:18px;color:#8a8a8a;">Asset viewer2  [DX11]  - C:\dagor2\enlisted\application.blk</div><div class=a style="left:1796px;top:21.8px;width:15px;height:1.3px;background:#8b8b8b"></div><div class=a style="left:1865px;top:14.8px;width:15px;height:15px;border:1.3px solid #8b8b8b;border-radius:3px;box-sizing:border-box"></div><svg class=a style="left:1936px;top:14.3px;" width="15" height="15" viewBox="0 0 15 15"><path d="M0.5 0.5 L14.5 14.5 M14.5 0.5 L0.5 14.5" stroke="#8b8b8b" stroke-width="1.3"/></svg><div class=a style="left:0px;top:45px;width:1978px;height:30px;background:#fff"></div><div class=t style="left:14px;top:52.28px;font-size:16.8px;color:#6e6e6e;">File</div><div class=t style="left:62px;top:52.28px;font-size:16.8px;color:#6e6e6e;">Export</div><div class=t style="left:134px;top:52.28px;font-size:16.8px;color:#6e6e6e;">Settings</div><div class=t style="left:220px;top:52.28px;font-size:16.8px;color:#6e6e6e;">View</div><div class=t style="left:279px;top:52.28px;font-size:16.8px;color:#6e6e6e;">Exit</div><div class=a style="left:0px;top:75px;width:1978px;height:1.2px;background:#9c9c9c"></div><div class=a style="left:0px;top:76.2px;width:1978px;height:1px;background:#fff"></div><div class=a style="left:0px;top:77.2px;width:1978px;height:43.5px;background:#f0f0f0"></div><div class=a style="left:0px;top:120.7px;width:1978px;height:1.6px;background:#9a9a9a"></div><div class=a style="left:0px;top:122.3px;width:1978px;height:1px;background:#fff"></div><div class=a style="left:3px;top:80.2px;width:2px;height:37.5px;background:#fff;border-right:1px solid #a0a0a0"></div><div class=a style="left:8px;top:80.2px;width:2px;height:37.5px;background:#fff;border-right:1px solid #a0a0a0"></div><svg class=a style="left:21px;top:85.95px;" width="24" height="24" viewBox="0 0 24 24"><rect x="4" y="8" width="13" height="12" fill="#fff" stroke="#1a1a8c" stroke-width="2"/><path d="M4 8 L8 4 H20 V16 L17 20 M17 8 L20 4" fill="none" stroke="#1a1a8c" stroke-width="1.5"/><path d="M0 4V0H4 M20 0H24V4 M24 20V24H20 M4 24H0V20" fill="none" stroke="#000" stroke-width="2"/></svg><svg class=a style="left:53px;top:86.95px;" width="22" height="22" viewBox="0 0 24 24"><circle cx="12" cy="12" r="10.5" fill="none" stroke="#999" stroke-width="1.3"/><path d="M2 12 Q12 3 22 12 Q12 19 2 12Z" fill="#fff" stroke="#1a1a8c" stroke-width="2"/><circle cx="12" cy="11.5" r="3.5" fill="#000"/></svg><div class=a style="left:84.5px;top:85.95px;width:1px;height:24px;background:#a0a0a0"></div><div class=a style="left:85.5px;top:85.95px;width:1px;height:24px;background:#fff"></div><svg class=a style="left:93px;top:85.95px;" width="24" height="24" viewBox="0 0 24 24"><circle cx="12" cy="12" r="10.5" fill="none" stroke="#999" stroke-width="1.3"/><path d="M0 13 Q4 5 7 11 Q9 17 12 10 Q15 5 17 10 Q20 16 24 11" fill="none" stroke="#1a1a8c" stroke-width="3"/></svg><svg class=a style="left:125.5px;top:86.95px;" width="22" height="22" viewBox="0 0 24 24"><ellipse cx="6" cy="6" rx="4" ry="5.5" fill="#ddd" stroke="#000" stroke-width="1.5"/><ellipse cx="17" cy="6" rx="4" ry="5.5" fill="#ddd" stroke="#000" stroke-width="1.5"/><ellipse cx="6" cy="19" rx="3.5" ry="3" fill="#ddd" stroke="#000" stroke-width="1.5"/><ellipse cx="17" cy="19" rx="3.5" ry="3" fill="#ddd" stroke="#000" stroke-width="1.5"/></svg><svg class=a style="left:160px;top:88.95px;" width="18" height="18" viewBox="0 0 24 24"><rect x="13" y="14" width="6" height="8" fill="#aaa"/><circle cx="9" cy="4" r="2.5" fill="#111"/><path d="M5 8 H13 V15 H12 V23 H6 V15 H5Z" fill="#222"/></svg><div class=a style="left:188.5px;top:85.95px;width:1px;height:24px;background:#a0a0a0"></div><div class=a style="left:189.5px;top:85.95px;width:1px;height:24px;background:#fff"></div><svg class=a style="left:196px;top:85.45px;" width="25" height="25" viewBox="0 0 24 24"><text x="0" y="10" font-family="Liberation Serif" font-size="11" font-weight="bold" fill="#000">Stat</text><path d="M0 12.5H24" stroke="#000" stroke-width="1.2"/><path d="M0 16H24 M0 19.5H24 M0 23H24" stroke="#000" stroke-width="1.3" stroke-dasharray="4 2"/></svg><div class=a style="left:228.5px;top:85.95px;width:1px;height:24px;background:#a0a0a0"></div><div class=a style="left:229.5px;top:85.95px;width:1px;height:24px;background:#fff"></div><svg class=a style="left:236px;top:86.45px;" width="23" height="23" viewBox="0 0 24 24"><ellipse cx="7" cy="12" rx="5.5" ry="8" fill="#fff" stroke="#000" stroke-width="2"/><path d="M7 4 L23 12 L7 20" fill="#fff" stroke="#000" stroke-width="2"/><ellipse cx="7" cy="12" rx="5" ry="7.5" fill="#fff"/></svg><div class=a style="left:268px;top:85.95px;width:1px;height:24px;background:#a0a0a0"></div><div class=a style="left:269px;top:85.95px;width:1px;height:24px;background:#fff"></div><svg class=a style="left:277px;top:86.95px;" width="22" height="22" viewBox="0 0 24 24"><rect x="1" y="6" width="22" height="16" rx="2" fill="#222"/><rect x="3" y="9" width="18" height="11" fill="#888"/><rect x="6" y="3" width="10" height="4" fill="#222"/><circle cx="12" cy="14" r="5" fill="#000"/><circle cx="12" cy="14" r="3" fill="#00b8c8"/></svg><svg class=a style="left:309px;top:85.95px;" width="24" height="24" viewBox="0 0 24 24"><rect x="14" y="1" width="10" height="8" rx="1" fill="#222"/><circle cx="19" cy="5" r="2.5" fill="#2bb"/><path d="M1 13h4v4H1z M7 13h4v4H7z M13 13h4v4h-4z M19 13h4v4h-4z M7 7h4v4H7z M7 19h4v4H7z" fill="#1e7fe0"/></svg><div class=a style="left:340px;top:85.95px;width:1px;height:24px;background:#a0a0a0"></div><div class=a style="left:341px;top:85.95px;width:1px;height:24px;background:#fff"></div><svg class=a style="left:351px;top:87.95px;" width="20" height="20" viewBox="0 0 24 24"><circle cx="12" cy="12" r="9" fill="#ffee00" stroke="#333" stroke-width="1" stroke-dasharray="2 3"/></svg><div class=a style="left:380.5px;top:85.95px;width:1px;height:24px;background:#a0a0a0"></div><div class=a style="left:381.5px;top:85.95px;width:1px;height:24px;background:#fff"></div><div class=a style="left:385px;top:85.95px;width:1px;height:24px;background:#a0a0a0"></div><div class=a style="left:386px;top:85.95px;width:1px;height:24px;background:#fff"></div><svg class=a style="left:392px;top:88.95px;" width="18" height="18" viewBox="0 0 24 24"><path d="M12 2 L21 6 V18 L12 22 L3 18 V6Z M3 6 L12 10 L21 6 M12 10 V22 M7 12 H17" fill="#eef" stroke="#2323d0" stroke-width="2"/></svg><div class=a style="left:417.5px;top:85.95px;width:1px;height:24px;background:#a0a0a0"></div><div class=a style="left:418.5px;top:85.95px;width:1px;height:24px;background:#fff"></div><svg class=a style="left:424.5px;top:89.2px;" width="17.5" height="17.5" viewBox="0 0 24 24"><path d="M12 2 L21 6 V18 L12 22 L3 18 V6Z" fill="#6a6af0" stroke="#000" stroke-width="1.5"/><path d="M3 6 L12 10 L21 6 M12 10 V22" fill="none" stroke="#000" stroke-width="2"/></svg><div class=a style="left:452px;top:85.95px;width:1px;height:24px;background:#a0a0a0"></div><div class=a style="left:453px;top:85.95px;width:1px;height:24px;background:#fff"></div><div class=a style="left:457.5px;top:85.95px;width:1px;height:24px;background:#a0a0a0"></div><div class=a style="left:458.5px;top:85.95px;width:1px;height:24px;background:#fff"></div><svg class=a style="left:461px;top:85.45px;" width="25" height="25" viewBox="0 0 24 24"><rect x="4" y="8" width="13" height="12" fill="#fff" stroke="#1a1a8c" stroke-width="2"/><path d="M4 8 L8 4 H20 V16 L17 20 M17 8 L20 4" fill="none" stroke="#1a1a8c" stroke-width="1.5"/><path d="M0 4V0H4 M20 0H24V4 M24 20V24H20 M4 24H0V20" fill="none" stroke="#000" stroke-width="2"/></svg><div class=a style="left:492.5px;top:85.95px;width:1px;height:24px;background:#a0a0a0"></div><div class=a style="left:493.5px;top:85.95px;width:1px;height:24px;background:#fff"></div><svg class=a style="left:501px;top:85.95px;" width="24" height="24" viewBox="0 0 24 24"><rect x="2" y="2" width="20" height="20" fill="#fff" stroke="#000" stroke-width="2"/><rect x="3" y="3" width="9" height="9" fill="#7c8fc8"/><rect x="12" y="12" width="9" height="9" fill="#7c8fc8"/><path d="M1 23 L23 1" stroke="#f00" stroke-width="3.5"/></svg><div class=a style="left:532.7px;top:85.95px;width:1px;height:24px;background:#a0a0a0"></div><div class=a style="left:533.7px;top:85.95px;width:1px;height:24px;background:#fff"></div><svg class=a style="left:541px;top:85.95px;" width="24" height="24" viewBox="0 0 24 24"><defs><linearGradient id="gg" x1="1" y1="0" x2="0" y2="1"><stop offset="0" stop-color="#4cd11a"/><stop offset="1" stop-color="#b05a10"/></linearGradient></defs><rect x="0" y="0" width="24" height="24" fill="url(#gg)"/></svg><div class=a style="left:573px;top:85.95px;width:1px;height:24px;background:#a0a0a0"></div><div class=a style="left:574px;top:85.95px;width:1px;height:24px;background:#fff"></div><svg class=a style="left:581px;top:85.95px;" width="24" height="24" viewBox="0 0 24 24"><rect x="0" y="1" width="24" height="21" fill="#fff" stroke="#ccc"/><rect x="0" y="1" width="22" height="3" fill="#3050e0"/><rect x="19" y="0" width="5" height="5" fill="#e02020"/><path d="M2 8H18 M2 11H16 M2 14H18 M2 17H14" stroke="#bbb"/></svg><div class=a style="left:681px;top:78.2px;width:2px;height:41.5px;background:#555"></div><div class=a style="left:686px;top:80.2px;width:2px;height:37.5px;background:#fff;border-right:1px solid #a0a0a0"></div><div class=a style="left:691px;top:80.2px;width:2px;height:37.5px;background:#fff;border-right:1px solid #a0a0a0"></div><div class=a style="left:700px;top:80.45px;width:31px;height:30px;background:#f6f6f6;border:1px solid #e4e4e4;box-sizing:border-box"></div><svg class=a style="left:704px;top:83.45px;" width="24" height="24" viewBox="0 0 24 24"><path d="M6 2 L6 20 L10 16 L13 23 L16 22 L13 15 L19 15Z" fill="#000"/></svg><div class=a style="left:735px;top:85.95px;width:1px;height:24px;background:#a0a0a0"></div><div class=a style="left:736px;top:85.95px;width:1px;height:24px;background:#fff"></div><svg class=a style="left:744px;top:84.45px;" width="22" height="22" viewBox="0 0 24 24"><path d="M12 1 L16 6 H13.5 V10.5 H18 V8 L23 12 L18 16 V13.5 H13.5 V18 H16 L12 23 L8 18 H10.5 V13.5 H6 V16 L1 12 L6 8 V10.5 H10.5 V6 H8Z" fill="#1a1a70"/></svg><svg class=a style="left:777px;top:84.45px;" width="22" height="22" viewBox="0 0 24 24"><path d="M8 4 A9 9 0 1 0 17 4.5" fill="none" stroke="#1a1a70" stroke-width="2"/><path d="M6 0 L14 3 L8 9Z" fill="#1a1a70"/></svg><svg class=a style="left:808px;top:85.45px;" width="20" height="20" viewBox="0 0 24 24"><rect x="2" y="2" width="20" height="20" fill="#fff" stroke="#000" stroke-width="2"/><rect x="3" y="11" width="10" height="10" fill="#777"/><path d="M3 11H13V21" fill="none" stroke="#000" stroke-width="1.5"/></svg><div class=a style="left:2px;top:123px;width:499px;height:30.5px;background:#03519c"></div><div class=t style="left:17px;top:128.27px;font-size:17.4px;color:#fff;">Assets Tree</div><div class=a style="left:474px;top:127px;width:23px;height:23px;background:#efefef;border-right:1.5px solid #8a8a8a;border-bottom:1.5px solid #8a8a8a;border-top:1px solid #fff;border-left:1px solid #fff;box-sizing:border-box"></div><svg class=a style="left:479px;top:132px;" width="13" height="13" viewBox="0 0 13 13"><path d="M1.5 1.5 L11.5 11.5 M11.5 1.5 L1.5 11.5" stroke="#000" stroke-width="2.6"/></svg><div class=a style="left:2px;top:153.5px;width:499px;height:748.5px;background:#fff"></div><div class=a style="left:14px;top:166.5px;width:17px;height:1px;border-top:1px dotted #8a8a8a;box-sizing:border-box"></div><div class=a style="left:41px;top:175.5px;width:1px;height:15px;border-left:1px dotted #8a8a8a;box-sizing:border-box"></div><div class=a style="left:41px;top:190.5px;width:17px;height:1px;border-top:1px dotted #8a8a8a;box-sizing:border-box"></div><div class=a style="left:68px;top:199.5px;width:1px;height:15px;border-left:1px dotted #8a8a8a;box-sizing:border-box"></div><div class=a style="left:68px;top:214.5px;width:17px;height:1px;border-top:1px dotted #8a8a8a;box-sizing:border-box"></div><div class=a style="left:95px;top:223.5px;width:1px;height:15px;border-left:1px dotted #8a8a8a;box-sizing:border-box"></div><div class=a style="left:95px;top:238.5px;width:17px;height:1px;border-top:1px dotted #8a8a8a;box-sizing:border-box"></div><div class=a style="left:122px;top:247.5px;width:1px;height:15px;border-left:1px dotted #8a8a8a;box-sizing:border-box"></div><div class=a style="left:122px;top:262.5px;width:17px;height:1px;border-top:1px dotted #8a8a8a;box-sizing:border-box"></div><div class=a style="left:149px;top:271.5px;width:1px;height:15px;border-left:1px dotted #8a8a8a;box-sizing:border-box"></div><div class=a style="left:149px;top:286.5px;width:17px;height:1px;border-top:1px dotted #8a8a8a;box-sizing:border-box"></div><div class=a style="left:176px;top:295.5px;width:1px;height:15px;border-left:1px dotted #8a8a8a;box-sizing:border-box"></div><div class=a style="left:176px;top:310.5px;width:17px;height:1px;border-top:1px dotted #8a8a8a;box-sizing:border-box"></div><div class=a style="left:203px;top:319.5px;width:1px;height:15px;border-left:1px dotted #8a8a8a;box-sizing:border-box"></div><div class=a style="left:203px;top:334.5px;width:17px;height:1px;border-top:1px dotted #8a8a8a;box-sizing:border-box"></div><div class=a style="left:8px;top:160.5px;width:13px;height:13px;background:#fff;border:1px solid #8a8a8a;box-sizing:border-box"></div><div class=a style="left:11px;top:166.5px;width:7px;height:1.3px;background:#000"></div><svg class=a style="left:31px;top:156.5px;" width="21" height="20" viewBox="0 0 21 20"><path d="M1 2 H10 L11 4 H20 V18 H1Z" fill="#8a8a8a"/><rect x="2" y="4" width="18" height="14" fill="#f2f27a"/><rect x="2" y="1" width="8" height="3" fill="#f2f27a"/><path d="M4 6h2v2h-2z M10 6h2v2h-2z M16 6h2v2h-2z M7 10h2v2h-2z M13 10h2v2h-2z M4 14h2v2h-2z M10 14h2v2h-2z M16 14h2v2h-2z" fill="#ffff20"/><path d="M3 18.5 H21 V5" fill="none" stroke="#000" stroke-width="2"/></svg><div class=t style="left:58px;top:158.71px;font-size:15.7px;color:#000;">Root</div><div class=a style="left:35px;top:184.5px;width:13px;height:13px;background:#fff;border:1px solid #8a8a8a;box-sizing:border-box"></div><div class=a style="left:38px;top:190.5px;width:7px;height:1.3px;background:#000"></div><svg class=a style="left:58px;top:180.5px;" width="21" height="20" viewBox="0 0 21 20"><path d="M0 5 L5 0 H21 V14 L16 19 H0Z" fill="#000"/><path d="M7 19 V5 L11 1 H13 L9 5 V19Z" fill="#9aa0a8"/><path d="M2 7h3v3h-3z M11 7h3v3h-3z M2 15h3v3h-3z M11 15h3v3h-3z M4 2h2v2h-2z M14 1h3v2h-3z" fill="#f4f0a0"/><path d="M16 5h2v2h-2z M18 8h2v2h-2z M16 11h2v2h-2z M19 3h1v2h-1z" fill="#c8c088"/><path d="M1 12.5H5 M10 12.5H15" stroke="#8a8a8a" stroke-width="1"/></svg><div class=t style="left:85px;top:182.71px;font-size:15.7px;color:#000;">assets</div><div class=a style="left:62px;top:208.5px;width:13px;height:13px;background:#fff;border:1px solid #8a8a8a;box-sizing:border-box"></div><div class=a style="left:65px;top:214.5px;width:7px;height:1.3px;background:#000"></div><svg class=a style="left:85px;top:204.5px;" width="21" height="20" viewBox="0 0 21 20"><path d="M0 5 L5 0 H21 V14 L16 19 H0Z" fill="#000"/><path d="M7 19 V5 L11 1 H13 L9 5 V19Z" fill="#9aa0a8"/><path d="M2 7h3v3h-3z M11 7h3v3h-3z M2 15h3v3h-3z M11 15h3v3h-3z M4 2h2v2h-2z M14 1h3v2h-3z" fill="#f4f0a0"/><path d="M16 5h2v2h-2z M18 8h2v2h-2z M16 11h2v2h-2z M19 3h1v2h-1z" fill="#c8c088"/><path d="M1 12.5H5 M10 12.5H15" stroke="#8a8a8a" stroke-width="1"/></svg><div class=t style="left:112px;top:206.71px;font-size:15.7px;color:#000;">berlin</div><div class=a style="left:89px;top:232.5px;width:13px;height:13px;background:#fff;border:1px solid #8a8a8a;box-sizing:border-box"></div><div class=a style="left:92px;top:238.5px;width:7px;height:1.3px;background:#000"></div><svg class=a style="left:112px;top:228.5px;" width="21" height="20" viewBox="0 0 21 20"><path d="M0 5 L5 0 H21 V14 L16 19 H0Z" fill="#000"/><path d="M7 19 V5 L11 1 H13 L9 5 V19Z" fill="#9aa0a8"/><path d="M2 7h3v3h-3z M11 7h3v3h-3z M2 15h3v3h-3z M11 15h3v3h-3z M4 2h2v2h-2z M14 1h3v2h-3z" fill="#f4f0a0"/><path d="M16 5h2v2h-2z M18 8h2v2h-2z M16 11h2v2h-2z M19 3h1v2h-1z" fill="#c8c088"/><path d="M1 12.5H5 M10 12.5H15" stroke="#8a8a8a" stroke-width="1"/></svg><div class=t style="left:139px;top:230.71px;font-size:15.7px;color:#000;">entities</div><div class=a style="left:116px;top:256.5px;width:13px;height:13px;background:#fff;border:1px solid #8a8a8a;box-sizing:border-box"></div><div class=a style="left:119px;top:262.5px;width:7px;height:1.3px;background:#000"></div><svg class=a style="left:139px;top:252.5px;" width="21" height="20" viewBox="0 0 21 20"><path d="M1 5 H19 V18 H1Z" fill="#8a8a8a"/><rect x="2" y="6" width="17" height="12" fill="#f2f27a"/><path d="M4 8h2v2h-2z M10 8h2v2h-2z M16 8h2v2h-2z M7 12h2v2h-2z M13 12h2v2h-2z" fill="#ffff20"/><path d="M3 18.5 H20 V6" fill="none" stroke="#000" stroke-width="2"/><path d="M1 1 L8 8 M8 1 L1 8" stroke="#c00000" stroke-width="2"/></svg><div class=t style="left:166px;top:254.71px;font-size:15.7px;color:#000;">unics</div><div class=a style="left:143px;top:280.5px;width:13px;height:13px;background:#fff;border:1px solid #8a8a8a;box-sizing:border-box"></div><div class=a style="left:146px;top:286.5px;width:7px;height:1.3px;background:#000"></div><svg class=a style="left:166px;top:276.5px;" width="21" height="20" viewBox="0 0 21 20"><path d="M0 5 L5 0 H21 V14 L16 19 H0Z" fill="#000"/><path d="M7 19 V5 L11 1 H13 L9 5 V19Z" fill="#9aa0a8"/><path d="M2 7h3v3h-3z M11 7h3v3h-3z M2 15h3v3h-3z M11 15h3v3h-3z M4 2h2v2h-2z M14 1h3v2h-3z" fill="#f4f0a0"/><path d="M16 5h2v2h-2z M18 8h2v2h-2z M16 11h2v2h-2z M19 3h1v2h-1z" fill="#c8c088"/><path d="M1 12.5H5 M10 12.5H15" stroke="#8a8a8a" stroke-width="1"/></svg><div class=t style="left:193px;top:278.71px;font-size:15.7px;color:#000;">goebbels_villa</div><div class=a style="left:170px;top:304.5px;width:13px;height:13px;background:#fff;border:1px solid #8a8a8a;box-sizing:border-box"></div><div class=a style="left:173px;top:310.5px;width:7px;height:1.3px;background:#000"></div><svg class=a style="left:193px;top:300.5px;" width="21" height="20" viewBox="0 0 21 20"><path d="M1 5 H19 V18 H1Z" fill="#8a8a8a"/><rect x="2" y="6" width="17" height="12" fill="#f2f27a"/><path d="M4 8h2v2h-2z M10 8h2v2h-2z M16 8h2v2h-2z M7 12h2v2h-2z M13 12h2v2h-2z" fill="#ffff20"/><path d="M3 18.5 H20 V6" fill="none" stroke="#000" stroke-width="2"/><path d="M1 1 L8 8 M8 1 L1 8" stroke="#c00000" stroke-width="2"/></svg><div class=t style="left:220px;top:302.71px;font-size:15.7px;color:#000;">goebbels_villa_decor_parts</div><svg class=a style="left:218px;top:322.5px;" width="23" height="24" viewBox="0 0 23 24"><path d="M6 1 L12 0 L18 1 L22 4 L22 10 L18 13 L16 20 L12 23 L6 22 L1 18 L0 11 L3 6Z" fill="#b4b4b4"/><path d="M11 1 L18 1 L22 4 L22 10 L17 12 L12 9Z" fill="#e8e8e8"/><path d="M3 10 L10 10 L12 15 L8 20 L3 18Z" fill="#d6d6d6"/><path d="M8 2h2v2h-2z M12 4h2v2h-2z M16 3h2v2h-2z M19 8h2v2h-2z M14 9h2v2h-2z M1 12h2v2h-2z M6 11h2v2h-2z M9 15h2v2h-2z M4 17h2v2h-2z M12 19h2v2h-2z M16 15h2v2h-2z" fill="#404040"/></svg><div class=a style="left:245px;top:323.5px;width:204.99px;height:22px;background:#d9d9d9"></div><div class=t style="left:247px;top:326.71px;font-size:15.7px;color:#000;">goebbels_villa_indoor2_cmp</div><div class=a style="left:2px;top:902px;width:499px;height:204px;background:#c4c4c4"></div><div class=a style="left:14px;top:910px;width:474px;height:33px;background:#efefef;border-top:1px solid #fff;border-left:1px solid #fff;border-right:1.5px solid #7a7a7a;border-bottom:2px solid #7a7a7a;box-sizing:border-box"></div><div class=t style="left:239.44px;top:916.39px;font-size:20.8px;color:#000;">All</div><div class=t style="left:14px;top:955.39px;font-size:20.8px;color:#000;">Filter:</div><div class=a style="left:14px;top:982px;width:474px;height:30px;background:#fff;border:1px solid #e6e6e6;box-sizing:border-box"></div><div class=t style="left:23px;top:987.12px;font-size:20.3px;color:#000;">goebbels_villa_indoor2_cmp</div><div class=t style="left:14px;top:1023.39px;font-size:20.8px;color:#000;">Search:</div><div class=a style="left:14px;top:1050px;width:474px;height:29.5px;background:#fff;border:1px solid #e6e6e6;box-sizing:border-box"></div><div class=a style="left:501px;top:123px;width:2px;height:983px;background:#fff"></div><div class=a style="left:503px;top:123px;width:2px;height:983px;background:#8a8a8a"></div><div class=a style="left:505px;top:123px;width:1px;height:983px;background:#fff"></div><svg class=a style="left:506px;top:123px" width="1096" height="981" viewBox="2362 121 1096 981"><defs><linearGradient id="ski" x1="0" y1="0" x2="0" y2="1"><stop offset="0" stop-color="#b6d2e6"/><stop offset="0.4" stop-color="#bad4e7"/><stop offset="0.65" stop-color="#cddce8"/><stop offset="0.85" stop-color="#dfe5ec"/><stop offset="1" stop-color="#e9ecf0"/></linearGradient><linearGradient id="sei" x1="0" y1="0" x2="0" y2="1"><stop offset="0" stop-color="#8d9aaa"/><stop offset="0.12" stop-color="#8a99aa"/><stop offset="0.28" stop-color="#6a829c"/><stop offset="0.4" stop-color="#4b6383"/><stop offset="0.55" stop-color="#304666"/><stop offset="0.72" stop-color="#233858"/><stop offset="0.88" stop-color="#1b2c4c"/><stop offset="1" stop-color="#162645"/></linearGradient><filter id="bli" x="-50%" y="-50%" width="200%" height="200%"><feGaussianBlur stdDeviation="10"/></filter></defs><rect x="2362" y="121" width="1096" height="228.5" fill="url(#ski)"/><rect x="2362" y="349.5" width="1096" height="752.5" fill="url(#sei)"/><g filter="url(#bli)"><ellipse cx="2440" cy="175" rx="90" ry="30" fill="#e4e8ee" opacity="0.7"/><ellipse cx="2470" cy="270" rx="140" ry="50" fill="#e2e6ec" opacity="0.8"/><ellipse cx="2650" cy="300" rx="180" ry="40" fill="#e4e8ed" opacity="0.8"/><ellipse cx="2930" cy="260" rx="100" ry="45" fill="#e0e5eb" opacity="0.75"/><ellipse cx="3050" cy="250" rx="130" ry="50" fill="#dde2e9" opacity="0.8"/><ellipse cx="3250" cy="235" rx="150" ry="55" fill="#e0e5eb" opacity="0.8"/><ellipse cx="3420" cy="220" rx="80" ry="50" fill="#e4e8ed" opacity="0.7"/><ellipse cx="2900" cy="330" rx="350" ry="22" fill="#e8ebef" opacity="0.85"/><ellipse cx="3300" cy="330" rx="250" ry="22" fill="#e9ecef" opacity="0.85"/><ellipse cx="2700" cy="180" rx="30" ry="15" fill="#eef1f4" opacity="0.6"/><ellipse cx="2800" cy="190" rx="30" ry="15" fill="#eef1f4" opacity="0.6"/></g><path d="M2362 477 L2380 470 L2401 533 L2362 540 Z" fill="#d2c2aa" /><path d="M2392 534 L2478 533 L2506 605 L2467 616 L2404 583 Z" fill="#d4c4a8" /><path d="M2488 488 L2553 486 L2556 549 L2506 552 Z" fill="#cbb9a2" /><path d="M2495 500 L2548 498" stroke="#5a6070" stroke-width="4"/><path d="M2495 511 L2548 509" stroke="#5a6070" stroke-width="4"/><path d="M2495 522 L2548 520" stroke="#5a6070" stroke-width="4"/><path d="M2495 533 L2548 531" stroke="#5a6070" stroke-width="4"/><path d="M2495 555 L2556 549 L2553 599 L2512 605 Z" fill="#d6c6aa" /><path d="M2561 508 L2625 501 L2628 544 L2567 549 Z" fill="#dac8ae" /><path d="M2572 544 L2667 527 L2679 572 L2584 602 Z" fill="#e2e6ec" /><path d="M2376 591 L2445 583 L2500 685 L2445 710 L2401 682 Z" fill="#e8ebf0" /><path d="M2445 690 L2480 685 L2490 705 L2450 712 Z" fill="#c8b898" /><path d="M2633 483 L2664 480 L2664 511 L2636 514 Z" fill="#d8c8b0" /><path d="M2655 436 L2689 436 L2689 472 L2658 472 Z" fill="#c8b8a0" /><path d="M2586 462 L2610 460 L2615 488 L2590 490 Z" fill="#d8c8b0" /><path d="M2590 489 L2630 487 L2630 493 L2590 495 Z" fill="#e8e0d8" /><path d="M2708 436 L2764 444 L2771 501 L2717 491 Z" fill="#c8a08a" /><path d="M2712 441 L2760 448 L2766 496 L2720 487 Z" fill="#dcdcdc" /><path d="M2960 449 L3008 449 L3008 489 L2960 489 Z" fill="#c8a08a" /><path d="M2965 454 L3003 454 L3003 484 L2965 484 Z" fill="#d8d8d8" /><path d="M3120 466 L3195 472 L3190 515 L3116 508 Z" fill="#c8a880" /><path d="M3126 471 L3189 476 L3185 510 L3122 504 Z" fill="#e0dccc" /><path d="M3340 520 L3458 532 L3458 645 L3330 622 Z" fill="#c8a880" /><path d="M3352 532 L3458 542 L3458 630 L3343 612 Z" fill="#e6e0c8" /><path d="M3219 870 L3262 815 L3340 813 L3395 850 L3426 945 L3380 969 L3300 940 L3225 900 Z" fill="#e8ecf2" /><path d="M3310 960 L3390 955 L3385 1020 L3320 1027 Z" fill="#b0a48a" /><path d="M2364 1101 L2372 1060 L2415 1045 L2433 1070 L2420 1101 Z" fill="#c8c4c0" /><ellipse cx="2463" cy="845" rx="15" ry="30" fill="#b8a890"/><ellipse cx="3232" cy="542" rx="22" ry="34" fill="#c0b8a8" opacity="0.75"/><ellipse cx="3346" cy="496" rx="20" ry="22" fill="#c0b8a8" opacity="0.7"/><ellipse cx="2819" cy="460" rx="24" ry="34" fill="#c8c0b0" opacity="0.7"/><ellipse cx="3326" cy="547" rx="6" ry="11" fill="#e0d8c8"/><ellipse cx="2885" cy="686" rx="40" ry="44" fill="#d6d0b0"/><path d="M2848 662 Q2885 730 2922 662 M2850 700 Q2885 740 2920 700" fill="none" stroke="#f0f040" stroke-width="2"/><path d="M2546.4 158.2 L2761 1101 M2844.5 121.8 L2867.8 1101 M2945 121.8 L2924.5 1101 M3159.5 121.8 L3008 1089 M2879.5 990.9 L2801 1101 M2879.5 990.9 L3008 1089" fill="none" stroke="#d01818" stroke-width="1.3"/><path d="M2450.4 158.2 L2670 918 M2873.6 121.8 L2895.5 1101 M2997 172.7 L2973 614 M2785 642 L3017.6 735 M2785 660 L3017.6 754.5 M2779 764 L2957 627 M2782.7 783.6 L2957 645.5 M2392 505 L2490 620 M2542 460 L2570 540 M2680 400 L2700 500" fill="none" stroke="#22dd22" stroke-width="1.3"/><rect x="2362" y="121" width="193" height="36" fill="#000"/><text x="2418.88" y="147" font-family="Liberation Sans" font-size="23" fill="#fff">Custom</text></svg><div class=a style="left:1602px;top:123px;width:2px;height:983px;background:#fff"></div><div class=a style="left:1604px;top:123px;width:2px;height:983px;background:#8a8a8a"></div><div class=a style="left:1606px;top:123px;width:1px;height:983px;background:#fff"></div><div class=a style="left:1607px;top:123px;width:371px;height:30px;background:#03519c"></div><div class=t style="left:1622px;top:127.77px;font-size:17.4px;color:#fff;">Composit Outliner</div><div class=a style="left:1950px;top:127px;width:23px;height:22.5px;background:#efefef;border-right:1.5px solid #8a8a8a;border-bottom:1.5px solid #8a8a8a;border-top:1px solid #fff;border-left:1px solid #fff;box-sizing:border-box"></div><svg class=a style="left:1955px;top:131.75px;" width="13" height="13" viewBox="0 0 13 13"><path d="M1.5 1.5 L11.5 11.5 M11.5 1.5 L1.5 11.5" stroke="#000" stroke-width="2.6"/></svg><div class=a style="left:1607px;top:153px;width:371px;height:280px;background:#fff"></div><div class=a style="left:1951px;top:153px;width:27px;height:306px;background:#f2f2f2"></div><div class=a style="left:1607px;top:433px;width:344px;height:26px;background:#f2f2f2"></div><div class=a style="left:1959px;top:379px;width:11px;height:26px;background:#8a8a8a"></div><div class=a style="left:1668px;top:438px;width:220px;height:12px;background:#8a8a8a"></div><svg class=a style="left:1606px;top:153px;" width="23" height="24" viewBox="0 0 23 24"><path d="M6 1 L12 0 L18 1 L22 4 L22 10 L18 13 L16 20 L12 23 L6 22 L1 18 L0 11 L3 6Z" fill="#b4b4b4"/><path d="M11 1 L18 1 L22 4 L22 10 L17 12 L12 9Z" fill="#e8e8e8"/><path d="M3 10 L10 10 L12 15 L8 20 L3 18Z" fill="#d6d6d6"/><path d="M8 2h2v2h-2z M12 4h2v2h-2z M16 3h2v2h-2z M19 8h2v2h-2z M14 9h2v2h-2z M1 12h2v2h-2z M6 11h2v2h-2z M9 15h2v2h-2z M4 17h2v2h-2z M12 19h2v2h-2z M16 15h2v2h-2z" fill="#404040"/></svg><div class=t style="left:1635px;top:157.21px;font-size:15.7px;color:#000;">is_lamp_wall_e_ds_on_cmp</div><svg class=a style="left:1607px;top:179px;" width="21" height="20" viewBox="0 0 21 20"><ellipse cx="10" cy="9" rx="6" ry="8" fill="#22a022"/><ellipse cx="9" cy="8" rx="3" ry="6" fill="#60d040"/><rect x="9" y="14" width="2.5" height="6" fill="#8a5a20"/></svg><div class=t style="left:1635px;top:181.21px;font-size:15.7px;color:#000;">is_lamp_wall_e</div><svg class=a style="left:1606px;top:201px;" width="23" height="24" viewBox="0 0 23 24"><path d="M6 1 L12 0 L18 1 L22 4 L22 10 L18 13 L16 20 L12 23 L6 22 L1 18 L0 11 L3 6Z" fill="#b4b4b4"/><path d="M11 1 L18 1 L22 4 L22 10 L17 12 L12 9Z" fill="#e8e8e8"/><path d="M3 10 L10 10 L12 15 L8 20 L3 18Z" fill="#d6d6d6"/><path d="M8 2h2v2h-2z M12 4h2v2h-2z M16 3h2v2h-2z M19 8h2v2h-2z M14 9h2v2h-2z M1 12h2v2h-2z M6 11h2v2h-2z M9 15h2v2h-2z M4 17h2v2h-2z M12 19h2v2h-2z M16 15h2v2h-2z" fill="#404040"/></svg><div class=t style="left:1635px;top:205.21px;font-size:15.7px;color:#000;">is_lamp_wall_e_ds_on_cmp</div><svg class=a style="left:1606px;top:225px;" width="23" height="24" viewBox="0 0 23 24"><path d="M6 1 L12 0 L18 1 L22 4 L22 10 L18 13 L16 20 L12 23 L6 22 L1 18 L0 11 L3 6Z" fill="#b4b4b4"/><path d="M11 1 L18 1 L22 4 L22 10 L17 12 L12 9Z" fill="#e8e8e8"/><path d="M3 10 L10 10 L12 15 L8 20 L3 18Z" fill="#d6d6d6"/><path d="M8 2h2v2h-2z M12 4h2v2h-2z M16 3h2v2h-2z M19 8h2v2h-2z M14 9h2v2h-2z M1 12h2v2h-2z M6 11h2v2h-2z M9 15h2v2h-2z M4 17h2v2h-2z M12 19h2v2h-2z M16 15h2v2h-2z" fill="#404040"/></svg><div class=t style="left:1635px;top:229.21px;font-size:15.7px;color:#000;">is_lamp_wall_e_ds_on_cmp</div><svg class=a style="left:1606px;top:249px;" width="23" height="24" viewBox="0 0 23 24"><path d="M6 1 L12 0 L18 1 L22 4 L22 10 L18 13 L16 20 L12 23 L6 22 L1 18 L0 11 L3 6Z" fill="#b4b4b4"/><path d="M11 1 L18 1 L22 4 L22 10 L17 12 L12 9Z" fill="#e8e8e8"/><path d="M3 10 L10 10 L12 15 L8 20 L3 18Z" fill="#d6d6d6"/><path d="M8 2h2v2h-2z M12 4h2v2h-2z M16 3h2v2h-2z M19 8h2v2h-2z M14 9h2v2h-2z M1 12h2v2h-2z M6 11h2v2h-2z M9 15h2v2h-2z M4 17h2v2h-2z M12 19h2v2h-2z M16 15h2v2h-2z" fill="#404040"/></svg><div class=t style="left:1635px;top:253.21px;font-size:15.7px;color:#000;">is_lamp_wall_e_ds_on_cmp</div><svg class=a style="left:1606px;top:273px;" width="23" height="24" viewBox="0 0 23 24"><path d="M6 1 L12 0 L18 1 L22 4 L22 10 L18 13 L16 20 L12 23 L6 22 L1 18 L0 11 L3 6Z" fill="#b4b4b4"/><path d="M11 1 L18 1 L22 4 L22 10 L17 12 L12 9Z" fill="#e8e8e8"/><path d="M3 10 L10 10 L12 15 L8 20 L3 18Z" fill="#d6d6d6"/><path d="M8 2h2v2h-2z M12 4h2v2h-2z M16 3h2v2h-2z M19 8h2v2h-2z M14 9h2v2h-2z M1 12h2v2h-2z M6 11h2v2h-2z M9 15h2v2h-2z M4 17h2v2h-2z M12 19h2v2h-2z M16 15h2v2h-2z" fill="#404040"/></svg><div class=t style="left:1635px;top:277.21px;font-size:15.7px;color:#000;">is_lamp_wall_e_ds_on_cmp</div><svg class=a style="left:1607px;top:299px;" width="21" height="20" viewBox="0 0 21 20"><ellipse cx="10" cy="9" rx="6" ry="8" fill="#22a022"/><ellipse cx="9" cy="8" rx="3" ry="6" fill="#60d040"/><rect x="9" y="14" width="2.5" height="6" fill="#8a5a20"/></svg><div class=t style="left:1635px;top:301.21px;font-size:15.7px;color:#000;">is_lamp_wall_e</div><svg class=a style="left:1607px;top:323px;" width="21" height="20" viewBox="0 0 21 20"><ellipse cx="10" cy="9" rx="6" ry="8" fill="#22a022"/><ellipse cx="9" cy="8" rx="3" ry="6" fill="#60d040"/><rect x="9" y="14" width="2.5" height="6" fill="#8a5a20"/></svg><div class=t style="left:1635px;top:325.21px;font-size:15.7px;color:#000;">is_lamp_wall_e</div><svg class=a style="left:1607px;top:347px;" width="21" height="20" viewBox="0 0 21 20"><ellipse cx="10" cy="9" rx="6" ry="8" fill="#22a022"/><ellipse cx="9" cy="8" rx="3" ry="6" fill="#60d040"/><rect x="9" y="14" width="2.5" height="6" fill="#8a5a20"/></svg><div class=t style="left:1635px;top:349.21px;font-size:15.7px;color:#000;">is_lamp_wall_e</div><svg class=a style="left:1606px;top:369px;" width="23" height="24" viewBox="0 0 23 24"><path d="M6 1 L12 0 L18 1 L22 4 L22 10 L18 13 L16 20 L12 23 L6 22 L1 18 L0 11 L3 6Z" fill="#b4b4b4"/><path d="M11 1 L18 1 L22 4 L22 10 L17 12 L12 9Z" fill="#e8e8e8"/><path d="M3 10 L10 10 L12 15 L8 20 L3 18Z" fill="#d6d6d6"/><path d="M8 2h2v2h-2z M12 4h2v2h-2z M16 3h2v2h-2z M19 8h2v2h-2z M14 9h2v2h-2z M1 12h2v2h-2z M6 11h2v2h-2z M9 15h2v2h-2z M4 17h2v2h-2z M12 19h2v2h-2z M16 15h2v2h-2z" fill="#404040"/></svg><div class=t style="left:1635px;top:373.21px;font-size:15.7px;color:#000;">is_chandelier_h_tall_double_on_cmp</div><svg class=a style="left:1606px;top:393px;" width="23" height="24" viewBox="0 0 23 24"><path d="M6 1 L12 0 L18 1 L22 4 L22 10 L18 13 L16 20 L12 23 L6 22 L1 18 L0 11 L3 6Z" fill="#b4b4b4"/><path d="M11 1 L18 1 L22 4 L22 10 L17 12 L12 9Z" fill="#e8e8e8"/><path d="M3 10 L10 10 L12 15 L8 20 L3 18Z" fill="#d6d6d6"/><path d="M8 2h2v2h-2z M12 4h2v2h-2z M16 3h2v2h-2z M19 8h2v2h-2z M14 9h2v2h-2z M1 12h2v2h-2z M6 11h2v2h-2z M9 15h2v2h-2z M4 17h2v2h-2z M12 19h2v2h-2z M16 15h2v2h-2z" fill="#404040"/></svg><div class=a style="left:1633px;top:394px;width:263.22px;height:22px;background:#d9d9d9"></div><div class=t style="left:1635px;top:397.21px;font-size:15.7px;color:#000;">is_chandelier_h_tall_double_on_cmp</div><div class=a style="left:1607px;top:459px;width:371px;height:2px;background:#e8e8e8"></div><div class=a style="left:1607px;top:461px;width:371px;height:2px;background:#8a8a8a"></div><div class=a style="left:1607px;top:463px;width:371px;height:67px;background:#c4c4c4"></div><div class=a style="left:1951px;top:463px;width:27px;height:67px;background:#dadada"></div><div class=a style="left:1621px;top:486px;width:316px;height:54px;border:1px solid #e6e6e6;border-right-color:#9a9a9a;border-bottom-color:#9a9a9a;box-sizing:border-box"></div><div class=a style="left:1632px;top:515px;width:294px;height:15px;background:#efefef;border:1px solid #fff;border-right-color:#777;box-sizing:border-box"></div><div class=a style="left:1626px;top:476px;width:307px;height:33px;background:#808080;border:1.3px solid #000;box-sizing:border-box"></div><div class=t style="left:1632px;top:482.39px;font-size:20.8px;color:#000;">-</div><div class=t style="left:1745.4px;top:482.39px;font-size:20.8px;color:#000;">Entities</div><div class=a style="left:1607px;top:525px;width:371px;height:2px;background:#8a8a8a"></div><div class=a style="left:1607px;top:527px;width:371px;height:3px;background:#f0f0f0"></div><div class=a style="left:1607px;top:530px;width:371px;height:30.5px;background:#03519c"></div><div class=t style="left:1622px;top:535.27px;font-size:17.4px;color:#fff;">Properties</div><div class=a style="left:1950.5px;top:534px;width:24.5px;height:23px;background:#efefef;border-right:1.5px solid #8a8a8a;border-bottom:1.5px solid #8a8a8a;border-top:1px solid #fff;border-left:1px solid #fff;box-sizing:border-box"></div><svg class=a style="left:1956.25px;top:539px;" width="13" height="13" viewBox="0 0 13 13"><path d="M1.5 1.5 L11.5 11.5 M11.5 1.5 L1.5 11.5" stroke="#000" stroke-width="2.6"/></svg><div class=a style="left:1607px;top:560.5px;width:371px;height:542.5px;background:#c4c4c4"></div><div class=a style="left:1951px;top:560.5px;width:27px;height:542.5px;background:#dadada"></div><div class=a style="left:1959px;top:586px;width:11px;height:299.5px;background:#8a8a8a"></div><div class=a style="left:1620.5px;top:581px;width:318px;height:133px;border:1px solid #e6e6e6;border-right-color:#9a9a9a;border-bottom-color:#9a9a9a;box-sizing:border-box"></div><div class=a style="left:1626px;top:572px;width:306px;height:32px;background:#808080;border:1.3px solid #000;box-sizing:border-box"></div><div class=t style="left:1632px;top:577.89px;font-size:20.8px;color:#000;">-</div><div class=t style="left:1681.33px;top:577.89px;font-size:20.8px;color:#000;">Common parameters</div><div class=t style="left:1632px;top:613.39px;font-size:20.8px;color:#000;">Type: composit</div><div class=t style="left:1633px;top:651.39px;font-size:20.8px;color:#fff;">Name:</div><div class=t style="left:1632px;top:650.39px;font-size:20.8px;color:#9a9a9a;">Name:</div><div class=a style="left:1632px;top:678px;width:294px;height:29px;background:#c8c8c8;border:1px solid #e8e8e8;border-top-color:#a8a8a8;border-left-color:#a8a8a8;box-sizing:border-box;overflow:hidden"></div><div class=a style="left:1632px;top:678px;width:292px;height:29px;overflow:hidden"><div class=t style="left:8px;top:3.89px;font-size:20.8px;color:#7d7d7d">goebbels_villa_indoor2_cmp</div></div><div class=a style="left:1620.5px;top:736px;width:318px;height:387px;border:1px solid #e6e6e6;border-right-color:#9a9a9a;border-bottom-color:#9a9a9a;box-sizing:border-box"></div><div class=a style="left:1626px;top:727px;width:306px;height:32px;background:#808080;border:1.3px solid #000;box-sizing:border-box"></div><div class=t style="left:1632px;top:732.89px;font-size:20.8px;color:#000;">-</div><div class=t style="left:1655.89px;top:732.89px;font-size:20.8px;color:#000;">Object specific parameters</div><div class=a style="left:1632px;top:780px;width:294px;height:12px;border:1px solid #e6e6e6;border-right-color:#9a9a9a;border-bottom-color:#9a9a9a;box-sizing:border-box"></div><div class=a style="left:1638px;top:768px;width:282px;height:32px;background:#808080;border:1.3px solid #000;box-sizing:border-box"></div><div class=t style="left:1644px;top:773.89px;font-size:20.8px;color:#000;font-weight:bold;">+</div><div class=t style="left:1707.92px;top:773.89px;font-size:20.8px;color:#000;font-weight:bold;">Material editor</div><div class=a style="left:1632px;top:820px;width:294px;height:303px;border:1px solid #e6e6e6;border-right-color:#9a9a9a;border-bottom-color:#9a9a9a;box-sizing:border-box"></div><div class=a style="left:1638px;top:807px;width:282px;height:31px;background:#808080;border:1.3px solid #000;box-sizing:border-box"></div><div class=t style="left:1644px;top:812.39px;font-size:20.8px;color:#000;">-</div><div class=t style="left:1719.46px;top:812.39px;font-size:20.8px;color:#000;">Object group</div><div class=a style="left:1644px;top:860px;width:270px;height:263px;border:1px solid #e6e6e6;border-right-color:#9a9a9a;border-bottom-color:#9a9a9a;box-sizing:border-box"></div><div class=a style="left:1650px;top:847px;width:259px;height:32px;background:#808080;border:1.3px solid #000;box-sizing:border-box"></div><div class=t style="left:1656px;top:852.89px;font-size:20.8px;color:#000;">-</div><div class=t style="left:1737.31px;top:852.89px;font-size:20.8px;color:#000;">Common</div><div class=a style="left:1656px;top:885px;width:246px;height:33px;background:#efefef;border-top:1px solid #fff;border-left:1px solid #fff;border-right:1.5px solid #7a7a7a;border-bottom:2px solid #7a7a7a;box-sizing:border-box"></div><div class=t style="left:1699.81px;top:891.39px;font-size:20.8px;color:#000;">Object properties</div><div class=a style="left:1656px;top:932px;width:18px;height:18px;background:#fff;border-top:1.5px solid #707070;border-left:1.5px solid #707070;border-right:1px solid #e0e0e0;border-bottom:1px solid #e0e0e0;box-sizing:border-box"></div><div class=t style="left:1682px;top:932.39px;font-size:20.8px;color:#000;">Show position gizmo</div><div class=a style="left:1656px;top:965px;width:52px;height:28px;background:#c8c8c8;border:1px solid #e0e0e0;border-top-color:#a0a0a0;border-left-color:#a0a0a0;box-sizing:border-box"></div><div class=t style="left:1664px;top:969.39px;font-size:20.8px;color:#8a8a8a;">0</div><div class=a style="left:1708px;top:965px;width:29px;height:14px;background:#efefef;border-top:1px solid #fff;border-left:1px solid #fff;border-right:1px solid #707070;border-bottom:1px solid #707070;box-sizing:border-box"></div><div class=a style="left:1708px;top:979px;width:29px;height:14px;background:#efefef;border-top:1px solid #fff;border-left:1px solid #fff;border-right:1px solid #707070;border-bottom:1px solid #707070;box-sizing:border-box"></div><svg class=a style="left:1719.5px;top:970px;" width="6" height="4" viewBox="0 0 6 4"><path d="M0 4 L3 0 L6 4Z" fill="#888"/></svg><svg class=a style="left:1719.5px;top:984px;" width="6" height="4" viewBox="0 0 6 4"><path d="M0 0 L3 4 L6 0Z" fill="#888"/></svg><div class=a style="left:1738px;top:965px;width:52px;height:28px;background:#c8c8c8;border:1px solid #e0e0e0;border-top-color:#a0a0a0;border-left-color:#a0a0a0;box-sizing:border-box"></div><div class=t style="left:1746px;top:969.39px;font-size:20.8px;color:#8a8a8a;">0</div><div class=a style="left:1790px;top:965px;width:29px;height:14px;background:#efefef;border-top:1px solid #fff;border-left:1px solid #fff;border-right:1px solid #707070;border-bottom:1px solid #707070;box-sizing:border-box"></div><div class=a style="left:1790px;top:979px;width:29px;height:14px;background:#efefef;border-top:1px solid #fff;border-left:1px solid #fff;border-right:1px solid #707070;border-bottom:1px solid #707070;box-sizing:border-box"></div><svg class=a style="left:1801.5px;top:970px;" width="6" height="4" viewBox="0 0 6 4"><path d="M0 4 L3 0 L6 4Z" fill="#888"/></svg><svg class=a style="left:1801.5px;top:984px;" width="6" height="4" viewBox="0 0 6 4"><path d="M0 0 L3 4 L6 0Z" fill="#888"/></svg><div class=a style="left:1820px;top:965px;width:52px;height:28px;background:#c8c8c8;border:1px solid #e0e0e0;border-top-color:#a0a0a0;border-left-color:#a0a0a0;box-sizing:border-box"></div><div class=t style="left:1828px;top:969.39px;font-size:20.8px;color:#8a8a8a;">0</div><div class=a style="left:1872px;top:965px;width:29px;height:14px;background:#efefef;border-top:1px solid #fff;border-left:1px solid #fff;border-right:1px solid #707070;border-bottom:1px solid #707070;box-sizing:border-box"></div><div class=a style="left:1872px;top:979px;width:29px;height:14px;background:#efefef;border-top:1px solid #fff;border-left:1px solid #fff;border-right:1px solid #707070;border-bottom:1px solid #707070;box-sizing:border-box"></div><svg class=a style="left:1883.5px;top:970px;" width="6" height="4" viewBox="0 0 6 4"><path d="M0 4 L3 0 L6 4Z" fill="#888"/></svg><svg class=a style="left:1883.5px;top:984px;" width="6" height="4" viewBox="0 0 6 4"><path d="M0 0 L3 4 L6 0Z" fill="#888"/></svg><div class=a style="left:1656px;top:1003.5px;width:246px;height:2px;background:#9a9a9a;border-bottom:1px solid #eee;box-sizing:border-box"></div><div class=t style="left:1656px;top:1017.39px;font-size:20.8px;color:#000;">Rotate around X, deg</div><div class=a style="left:1656px;top:1057.5px;width:97px;height:2.5px;background:#a0a0a0;border-bottom:1px solid #fff;box-sizing:border-box"></div><div class=a style="left:1706px;top:1044px;width:14px;height:29px;background:#e6e6e6;border:1px solid #7a7a7a;border-top-color:#fff;border-left-color:#fff;box-sizing:border-box"></div><div class=a style="left:1791px;top:1044px;width:85px;height:29px;background:#fff;border:1px solid #a0a0a0;box-sizing:border-box"></div><div class=t style="left:1800px;top:1049.39px;font-size:20.8px;color:#000;">0</div><div class=a style="left:1876px;top:1044px;width:26px;height:14.5px;background:#efefef;border-top:1px solid #fff;border-left:1px solid #fff;border-right:1px solid #707070;border-bottom:1px solid #707070;box-sizing:border-box"></div><div class=a style="left:1876px;top:1058.5px;width:26px;height:14.5px;background:#efefef;border-top:1px solid #fff;border-left:1px solid #fff;border-right:1px solid #707070;border-bottom:1px solid #707070;box-sizing:border-box"></div><svg class=a style="left:1886px;top:1049.5px;" width="6" height="4" viewBox="0 0 6 4"><path d="M0 4 L3 0 L6 4Z" fill="#000"/></svg><svg class=a style="left:1886px;top:1063.5px;" width="6" height="4" viewBox="0 0 6 4"><path d="M0 0 L3 4 L6 0Z" fill="#000"/></svg><div class=t style="left:1656px;top:1083.39px;font-size:20.8px;color:#000;">Rotate around Y, deg</div></div><div class=a style="left:1856px;top:-2px;width:1978px;height:1106px;border:2px solid #2e2e2e;border-radius:9px;box-sizing:border-box"></div><div class=a style="left:3px;top:1112px;width:1849px;height:1047px;border-radius:9px;overflow:hidden;background:#f0f0f0;"><div class=a style="left:0px;top:0px;width:1849px;height:44px;background:#f3f3f3"></div><svg class=a style="left:16px;top:9px;" width="18" height="21" viewBox="0 0 18 21"><path d="M4 3 L7 1 L9 4 L14 3 L16 1 L17 5 L15 9 L17 17 L13 19 L9 16 L5 19 L3 15 L5 9Z" fill="#4cc8d0" stroke="#1f4a50" stroke-width="1.2"/></svg><div class=t style="left:41px;top:13.76px;font-size:18px;color:#8a8a8a;">DaEditorX  [DX11]  - C:/dagor2/enlisted/develop/levels/battle_of_berlin/battle_of_berlin.level.blk</div><div class=a style="left:1666px;top:19.5px;width:15px;height:1.3px;background:#8b8b8b"></div><div class=a style="left:1735px;top:12.5px;width:15px;height:15px;border:1.3px solid #8b8b8b;border-radius:3px;box-sizing:border-box"></div><svg class=a style="left:1806px;top:12px;" width="15" height="15" viewBox="0 0 15 15"><path d="M0.5 0.5 L14.5 14.5 M14.5 0.5 L0.5 14.5" stroke="#8b8b8b" stroke-width="1.3"/></svg><div class=a style="left:0px;top:44px;width:1849px;height:30px;background:#fff"></div><div class=t style="left:12.5px;top:52.78px;font-size:16.8px;color:#6e6e6e;">Project</div><div class=t style="left:88px;top:52.78px;font-size:16.8px;color:#6e6e6e;">Edit</div><div class=t style="left:140px;top:52.78px;font-size:16.8px;color:#6e6e6e;">View</div><div class=t style="left:200px;top:52.78px;font-size:16.8px;color:#6e6e6e;">Modes</div><div class=t style="left:276px;top:52.78px;font-size:16.8px;color:#6e6e6e;">Landscape</div><div class=t style="left:381px;top:52.78px;font-size:16.8px;color:#6e6e6e;">Tools</div><div class=t style="left:444px;top:52.78px;font-size:16.8px;color:#6e6e6e;">Settings</div><div class=t style="left:530px;top:52.78px;font-size:16.8px;color:#6e6e6e;">Help</div><div class=t style="left:589px;top:52.78px;font-size:16.8px;color:#6e6e6e;">Exit</div><div class=a style="left:0px;top:74px;width:1849px;height:1.2px;background:#9c9c9c"></div><div class=a style="left:0px;top:75.2px;width:1849px;height:1px;background:#fff"></div><div class=a style="left:0px;top:76.2px;width:1849px;height:41.8px;background:#f0f0f0"></div><div class=a style="left:0px;top:118px;width:1849px;height:1.6px;background:#9a9a9a"></div><div class=a style="left:0px;top:119.6px;width:1849px;height:1px;background:#fff"></div><div class=a style="left:3px;top:79px;width:2px;height:36px;background:#fff;border-right:1px solid #a0a0a0"></div><div class=a style="left:8px;top:79px;width:2px;height:36px;background:#fff;border-right:1px solid #a0a0a0"></div><div class=a style="left:16.5px;top:82px;width:147.5px;height:27px;background:#f0f0f0;border:2px solid #a8a8a8;border-right-color:#e8e8e8;border-bottom-color:#e8e8e8;box-sizing:border-box"></div><div class=a style="left:137px;top:84px;width:25px;height:23px;background:#f0f0f0;border-left:1px solid #fff;border-top:1px solid #fff;border-right:2px solid #8a8a8a;border-bottom:2px solid #8a8a8a;box-sizing:border-box"></div><svg class=a style="left:144px;top:92px;" width="12" height="7" viewBox="0 0 12 7"><path d="M0 0 H12 L6 7Z" fill="#9a9a9a"/></svg><div class=a style="left:178.5px;top:82px;width:147.5px;height:27px;background:#f0f0f0;border:2px solid #a8a8a8;border-right-color:#e8e8e8;border-bottom-color:#e8e8e8;box-sizing:border-box"></div><div class=a style="left:299px;top:84px;width:25px;height:23px;background:#f0f0f0;border-left:1px solid #fff;border-top:1px solid #fff;border-right:2px solid #8a8a8a;border-bottom:2px solid #8a8a8a;box-sizing:border-box"></div><svg class=a style="left:306px;top:92px;" width="12" height="7" viewBox="0 0 12 7"><path d="M0 0 H12 L6 7Z" fill="#9a9a9a"/></svg><div class=a style="left:343.5px;top:85px;width:1px;height:25px;background:#a0a0a0"></div><div class=a style="left:344.5px;top:85px;width:1px;height:25px;background:#fff"></div><div class=a style="left:349px;top:81px;width:31px;height:30px;background:#f6f6f6"></div><svg class=a style="left:353px;top:85px;" width="22" height="22" viewBox="0 0 24 24"><path d="M8 4 A9 9 0 1 0 17 4.5" fill="none" stroke="#1a1a70" stroke-width="2"/><path d="M6 0 L14 3 L8 9Z" fill="#1a1a70"/></svg><div class=a style="left:383.5px;top:85px;width:1px;height:25px;background:#a0a0a0"></div><div class=a style="left:384.5px;top:85px;width:1px;height:25px;background:#fff"></div><div class=t style="left:402px;top:85.99px;font-size:19.5px;color:#9a9a9a;">x :</div><div class=a style="left:442.3px;top:81.5px;width:81.3px;height:28.5px;background:#f0f0f0;border:1px solid #b0b0b0;border-right-color:#f8f8f8;border-bottom-color:#f8f8f8;box-sizing:border-box"></div><div class=t style="left:450.3px;top:85.99px;font-size:19.5px;color:#6a6a6a;">308.1</div><div class=a style="left:523.6px;top:81.5px;width:29px;height:14.25px;background:#efefef;border-top:1px solid #fff;border-left:1px solid #fff;border-right:1px solid #707070;border-bottom:1px solid #707070;box-sizing:border-box"></div><div class=a style="left:523.6px;top:95.75px;width:29px;height:14.25px;background:#efefef;border-top:1px solid #fff;border-left:1px solid #fff;border-right:1px solid #707070;border-bottom:1px solid #707070;box-sizing:border-box"></div><svg class=a style="left:535.1px;top:86.75px;" width="6" height="4" viewBox="0 0 6 4"><path d="M0 4 L3 0 L6 4Z" fill="#888"/></svg><svg class=a style="left:535.1px;top:100.75px;" width="6" height="4" viewBox="0 0 6 4"><path d="M0 0 L3 4 L6 0Z" fill="#888"/></svg><div class=t style="left:565.6px;top:85.99px;font-size:19.5px;color:#9a9a9a;">y :</div><div class=a style="left:604.3px;top:81.5px;width:81.4px;height:28.5px;background:#f0f0f0;border:1px solid #b0b0b0;border-right-color:#f8f8f8;border-bottom-color:#f8f8f8;box-sizing:border-box"></div><div class=t style="left:612.3px;top:85.99px;font-size:19.5px;color:#6a6a6a;">41.8</div><div class=a style="left:685.7px;top:81.5px;width:29px;height:14.25px;background:#efefef;border-top:1px solid #fff;border-left:1px solid #fff;border-right:1px solid #707070;border-bottom:1px solid #707070;box-sizing:border-box"></div><div class=a style="left:685.7px;top:95.75px;width:29px;height:14.25px;background:#efefef;border-top:1px solid #fff;border-left:1px solid #fff;border-right:1px solid #707070;border-bottom:1px solid #707070;box-sizing:border-box"></div><svg class=a style="left:697.2px;top:86.75px;" width="6" height="4" viewBox="0 0 6 4"><path d="M0 4 L3 0 L6 4Z" fill="#888"/></svg><svg class=a style="left:697.2px;top:100.75px;" width="6" height="4" viewBox="0 0 6 4"><path d="M0 0 L3 4 L6 0Z" fill="#888"/></svg><div class=t style="left:728.6px;top:85.99px;font-size:19.5px;color:#9a9a9a;">z :</div><div class=a style="left:766.4px;top:81.5px;width:81.4px;height:28.5px;background:#f0f0f0;border:1px solid #b0b0b0;border-right-color:#f8f8f8;border-bottom-color:#f8f8f8;box-sizing:border-box"></div><div class=t style="left:774.4px;top:85.99px;font-size:19.5px;color:#6a6a6a;">-200.9</div><div class=a style="left:847.8px;top:81.5px;width:29px;height:14.25px;background:#efefef;border-top:1px solid #fff;border-left:1px solid #fff;border-right:1px solid #707070;border-bottom:1px solid #707070;box-sizing:border-box"></div><div class=a style="left:847.8px;top:95.75px;width:29px;height:14.25px;background:#efefef;border-top:1px solid #fff;border-left:1px solid #fff;border-right:1px solid #707070;border-bottom:1px solid #707070;box-sizing:border-box"></div><svg class=a style="left:859.3px;top:86.75px;" width="6" height="4" viewBox="0 0 6 4"><path d="M0 4 L3 0 L6 4Z" fill="#888"/></svg><svg class=a style="left:859.3px;top:100.75px;" width="6" height="4" viewBox="0 0 6 4"><path d="M0 0 L3 4 L6 0Z" fill="#888"/></svg><svg class=a style="left:902px;top:85.5px;" width="22" height="22" viewBox="0 0 24 24"><path d="M4 22 L4 12 A8 8 0 0 1 20 12 L20 22 L15 22 L15 12 A3 3 0 0 0 9 12 L9 22Z" fill="#c84818" transform="rotate(-30 12 12)"/></svg><svg class=a style="left:934px;top:84.5px;" width="24" height="24" viewBox="0 0 24 24"><path d="M4 22 L4 12 A8 8 0 0 1 20 12 L20 22 L15 22 L15 12 A3 3 0 0 0 9 12 L9 22Z" fill="#c84818" transform="rotate(-30 12 12)"/></svg><svg class=a style="left:966px;top:84.5px;" width="24" height="24" viewBox="0 0 24 24"><path d="M4 22 L4 12 A8 8 0 0 1 20 12 L20 22 L15 22 L15 12 A3 3 0 0 0 9 12 L9 22Z" fill="#c84818" transform="rotate(-30 12 12)"/></svg><div class=a style="left:997.5px;top:85px;width:1px;height:25px;background:#a0a0a0"></div><div class=a style="left:998.5px;top:85px;width:1px;height:25px;background:#fff"></div><svg class=a style="left:1006px;top:84.5px;" width="24" height="24" viewBox="0 0 24 24"><rect x="4" y="8" width="13" height="12" fill="#fff" stroke="#1a1a8c" stroke-width="2"/><path d="M4 8 L8 4 H20 V16 L17 20 M17 8 L20 4" fill="none" stroke="#1a1a8c" stroke-width="1.5"/><path d="M0 4V0H4 M20 0H24V4 M24 20V24H20 M4 24H0V20" fill="none" stroke="#000" stroke-width="2"/></svg><svg class=a style="left:1037px;top:84.5px;" width="24" height="24" viewBox="0 0 24 24"><circle cx="12" cy="12" r="10.5" fill="none" stroke="#999" stroke-width="1.3"/><path d="M2 12 Q12 3 22 12 Q12 19 2 12Z" fill="#fff" stroke="#1a1a8c" stroke-width="2"/><circle cx="12" cy="11.5" r="3.5" fill="#000"/></svg><div class=a style="left:1069.5px;top:85px;width:1px;height:25px;background:#a0a0a0"></div><div class=a style="left:1070.5px;top:85px;width:1px;height:25px;background:#fff"></div><svg class=a style="left:1077px;top:84.5px;" width="24" height="24" viewBox="0 0 24 24"><circle cx="12" cy="12" r="10.5" fill="none" stroke="#999" stroke-width="1.3"/><path d="M0 13 Q4 5 7 11 Q9 17 12 10 Q15 5 17 10 Q20 16 24 11" fill="none" stroke="#1a1a8c" stroke-width="3"/></svg><svg class=a style="left:1110px;top:85px;" width="23" height="23" viewBox="0 0 24 24"><ellipse cx="6" cy="6" rx="4" ry="5.5" fill="#ddd" stroke="#000" stroke-width="1.5"/><ellipse cx="17" cy="6" rx="4" ry="5.5" fill="#ddd" stroke="#000" stroke-width="1.5"/><ellipse cx="6" cy="19" rx="3.5" ry="3" fill="#ddd" stroke="#000" stroke-width="1.5"/><ellipse cx="17" cy="19" rx="3.5" ry="3" fill="#ddd" stroke="#000" stroke-width="1.5"/></svg><svg class=a style="left:1144px;top:87px;" width="19" height="19" viewBox="0 0 24 24"><rect x="13" y="14" width="6" height="8" fill="#aaa"/><circle cx="9" cy="4" r="2.5" fill="#111"/><path d="M5 8 H13 V15 H12 V23 H6 V15 H5Z" fill="#222"/></svg><svg class=a style="left:1174px;top:84.5px;" width="24" height="24" viewBox="0 0 24 24"><path d="M2 13 L5 6 H19 L22 13 V20 H2Z" fill="#1a2a80"/><rect x="6" y="8" width="12" height="5" fill="#cde"/><circle cx="6" cy="20" r="2.5" fill="#000"/><circle cx="18" cy="20" r="2.5" fill="#000"/></svg><div class=a style="left:1205px;top:85px;width:1px;height:25px;background:#a0a0a0"></div><div class=a style="left:1206px;top:85px;width:1px;height:25px;background:#fff"></div><svg class=a style="left:1213px;top:84.5px;" width="24" height="24" viewBox="0 0 24 24"><text x="0" y="10" font-family="Liberation Serif" font-size="11" font-weight="bold" fill="#000">Stat</text><path d="M0 12.5H24" stroke="#000" stroke-width="1.2"/><path d="M0 16H24 M0 19.5H24 M0 23H24" stroke="#000" stroke-width="1.3" stroke-dasharray="4 2"/></svg><div class=a style="left:1245px;top:85px;width:1px;height:25px;background:#a0a0a0"></div><div class=a style="left:1246px;top:85px;width:1px;height:25px;background:#fff"></div><svg class=a style="left:1254px;top:86px;" width="21" height="21" viewBox="0 0 24 24"><rect x="1" y="1" width="10" height="10" fill="#7080b0"/><rect x="13" y="1" width="10" height="10" fill="#7080b0"/><rect x="1" y="13" width="10" height="10" fill="#7080b0"/><rect x="13" y="13" width="10" height="10" fill="#7080b0"/></svg><svg class=a style="left:1285px;top:85px;" width="23" height="23" viewBox="0 0 24 24"><ellipse cx="7" cy="12" rx="5.5" ry="8" fill="#fff" stroke="#000" stroke-width="2"/><path d="M7 4 L23 12 L7 20" fill="#fff" stroke="#000" stroke-width="2"/><ellipse cx="7" cy="12" rx="5" ry="7.5" fill="#fff"/></svg><div class=a style="left:1317px;top:85px;width:1px;height:25px;background:#a0a0a0"></div><div class=a style="left:1318px;top:85px;width:1px;height:25px;background:#fff"></div><svg class=a style="left:1325px;top:84.5px;" width="24" height="24" viewBox="0 0 24 24"><rect x="1" y="6" width="22" height="16" rx="2" fill="#222"/><rect x="3" y="9" width="18" height="11" fill="#888"/><rect x="6" y="3" width="10" height="4" fill="#222"/><circle cx="12" cy="14" r="5" fill="#000"/><circle cx="12" cy="14" r="3" fill="#00b8c8"/></svg><svg class=a style="left:1357px;top:84px;" width="25" height="25" viewBox="0 0 24 24"><rect x="14" y="1" width="10" height="8" rx="1" fill="#222"/><circle cx="19" cy="5" r="2.5" fill="#2bb"/><path d="M1 13h4v4H1z M7 13h4v4H7z M13 13h4v4h-4z M19 13h4v4h-4z M7 7h4v4H7z M7 19h4v4H7z" fill="#1e7fe0"/></svg><div class=a style="left:1389px;top:85px;width:1px;height:25px;background:#a0a0a0"></div><div class=a style="left:1390px;top:85px;width:1px;height:25px;background:#fff"></div><svg class=a style="left:1400px;top:86.5px;" width="20" height="20" viewBox="0 0 24 24"><circle cx="12" cy="12" r="9" fill="#ffee00" stroke="#333" stroke-width="1" stroke-dasharray="2 3"/></svg><div class=a style="left:1429.5px;top:85px;width:1px;height:25px;background:#a0a0a0"></div><div class=a style="left:1430.5px;top:85px;width:1px;height:25px;background:#fff"></div><svg class=a style="left:1437px;top:83.5px;" width="26" height="26" viewBox="0 0 24 24"><rect x="0" y="1" width="24" height="21" fill="#fff" stroke="#ccc"/><rect x="0" y="1" width="22" height="3" fill="#3050e0"/><rect x="19" y="0" width="5" height="5" fill="#e02020"/><path d="M2 8H18 M2 11H16 M2 14H18 M2 17H14" stroke="#bbb"/></svg><div class=a style="left:1545px;top:85px;width:1px;height:25px;background:#a0a0a0"></div><div class=a style="left:1546px;top:85px;width:1px;height:25px;background:#fff"></div><svg class=a style="left:1553px;top:84.5px;" width="24" height="24" viewBox="0 0 24 24"><rect x="2" y="2" width="20" height="20" fill="#fff" stroke="#000" stroke-width="2"/><rect x="3" y="3" width="9" height="9" fill="#7c8fc8"/><rect x="12" y="12" width="9" height="9" fill="#7c8fc8"/><path d="M1 23 L23 1" stroke="#f00" stroke-width="3.5"/></svg><div class=a style="left:1585px;top:85px;width:1px;height:25px;background:#a0a0a0"></div><div class=a style="left:1586px;top:85px;width:1px;height:25px;background:#fff"></div><svg class=a style="left:1593px;top:82.5px;" width="28" height="28" viewBox="0 0 24 24"><circle cx="12" cy="12" r="11" fill="#fff" stroke="#1838c0" stroke-width="2"/><path d="M4 20 L20 4" stroke="#f02020" stroke-width="3"/><path d="M20 4 L12 12" stroke="#2040f0" stroke-width="3"/></svg><div class=a style="left:0px;top:120.6px;width:1849px;height:33.4px;background:#f0f0f0"></div><div class=a style="left:6px;top:124px;width:70px;height:24px;background:#f0f0f0;border-top:1px solid #fafafa;box-sizing:border-box"></div><div class=t style="left:11px;top:128.65px;font-size:15.29px;color:#000;">Collision</div><div class=a style="left:76px;top:127px;width:1.5px;height:21px;background:#333"></div><div class=a style="left:78px;top:124px;width:98px;height:24px;background:#f0f0f0;border-top:1px solid #fafafa;box-sizing:border-box"></div><div class=t style="left:82px;top:128.18px;font-size:15.85px;color:#000;">Environment</div><div class=a style="left:176px;top:127px;width:1.5px;height:21px;background:#333"></div><div class=a style="left:178px;top:122px;width:87px;height:27px;background:#f4f4f4;border-top:1px solid #fff;border-left:1px solid #fff;box-sizing:border-box"></div><div class=t style="left:184px;top:127.24px;font-size:14.72px;color:#000;">Landscape</div><div class=a style="left:265px;top:127px;width:1.5px;height:21px;background:#333"></div><div class=a style="left:267px;top:124px;width:77px;height:24px;background:#f0f0f0;border-top:1px solid #fafafa;box-sizing:border-box"></div><div class=t style="left:269.4px;top:128.89px;font-size:15.02px;color:#000;">Occluders</div><div class=a style="left:344px;top:127px;width:1.5px;height:21px;background:#333"></div><div class=a style="left:346px;top:124px;width:88px;height:24px;background:#f0f0f0;border-top:1px solid #fafafa;box-sizing:border-box"></div><div class=t style="left:350px;top:128.66px;font-size:15.29px;color:#000;">SGeometry</div><div class=a style="left:434px;top:127px;width:1.5px;height:21px;background:#333"></div><div class=a style="left:0px;top:154px;width:1849px;height:1.6px;background:#9a9a9a"></div><div class=a style="left:0px;top:155.6px;width:1849px;height:1px;background:#fff"></div><div class=a style="left:0px;top:156.6px;width:1849px;height:42.4px;background:#f0f0f0"></div><div class=a style="left:0px;top:199px;width:1849px;height:1.6px;background:#9a9a9a"></div><div class=a style="left:0px;top:200.6px;width:1849px;height:1px;background:#fff"></div><div class=a style="left:3px;top:160px;width:2px;height:36px;background:#fff;border-right:1px solid #a0a0a0"></div><div class=a style="left:8px;top:160px;width:2px;height:36px;background:#fff;border-right:1px solid #a0a0a0"></div><div class=a style="left:296px;top:161px;width:31px;height:30px;background:#f6f6f6;border:1px solid #e4e4e4;box-sizing:border-box"></div><svg class=a style="left:19px;top:163.25px;" width="25.5" height="25.5" viewBox="0 0 24 24"><rect x="2" y="1" width="17" height="19" fill="#fff" stroke="#000" stroke-width="1.5"/><path d="M5 6H16 M5 10H16 M5 14H13" stroke="#000"/><path d="M0 24 L6 16 L12 20 L18 14 L24 24Z" fill="#18a018"/></svg><div class=a style="left:51px;top:164px;width:1px;height:24px;background:#a0a0a0"></div><div class=a style="left:52px;top:164px;width:1px;height:24px;background:#fff"></div><svg class=a style="left:59px;top:163.5px;" width="25" height="25" viewBox="0 0 24 24"><path d="M0 24 L12 10 L24 24Z" fill="#18b018"/><path d="M8 6 L12 2 L16 6 M8 10 L12 6 L16 10" fill="none" stroke="#000" stroke-width="2"/></svg><svg class=a style="left:91px;top:163.5px;" width="25" height="25" viewBox="0 0 24 24"><path d="M0 12 L8 18 L16 18 L24 12 V24 H0Z" fill="#18b018"/><path d="M8 2 L12 6 L16 2 M8 6 L12 10 L16 6" fill="none" stroke="#000" stroke-width="2"/></svg><svg class=a style="left:124px;top:165.5px;" width="21" height="21" viewBox="0 0 24 24"><circle cx="14" cy="9" r="8" fill="#ddd" stroke="#888"/><path d="M3 22 L12 12" stroke="#aaa" stroke-width="4"/></svg><svg class=a style="left:157px;top:166.5px;" width="19" height="19" viewBox="0 0 24 24"><path d="M12 1 Q4 14 5 17 A7 7 0 0 0 19 17 Q20 14 12 1Z" fill="#ccc" stroke="#999"/></svg><svg class=a style="left:187px;top:163px;" width="26" height="26" viewBox="0 0 24 24"><circle cx="15" cy="14" r="9" fill="#30c030" stroke="#186018" stroke-width="2"/><rect x="2" y="1" width="10" height="8" fill="#888" transform="rotate(35 7 5)"/><circle cx="15" cy="14" r="4" fill="#e8f040"/></svg><svg class=a style="left:220px;top:163.5px;" width="25" height="25" viewBox="0 0 24 24"><path d="M2 22 L10 14 L13 17 L5 23Z" fill="#444"/><path d="M11 13 L22 2" stroke="#999" stroke-width="3"/></svg><div class=a style="left:251px;top:164px;width:1px;height:24px;background:#a0a0a0"></div><div class=a style="left:252px;top:164px;width:1px;height:24px;background:#fff"></div><svg class=a style="left:306px;top:169.5px;" width="13" height="13" viewBox="0 0 24 24"><path d="M6 2 L6 20 L10 16 L13 23 L16 22 L13 15 L19 15Z" fill="#000"/></svg><div class=a style="left:331.5px;top:164px;width:1px;height:24px;background:#a0a0a0"></div><div class=a style="left:332.5px;top:164px;width:1px;height:24px;background:#fff"></div><svg class=a style="left:340px;top:165px;" width="22" height="22" viewBox="0 0 24 24"><path d="M12 1 L16 6 H13.5 V10.5 H18 V8 L23 12 L18 16 V13.5 H13.5 V18 H16 L12 23 L8 18 H10.5 V13.5 H6 V16 L1 12 L6 8 V10.5 H10.5 V6 H8Z" fill="#1a1a70"/></svg><svg class=a style="left:371.5px;top:163.75px;" width="24.5" height="24.5" viewBox="0 0 24 24"><path d="M0 24 L6 16 H24 L18 24Z" fill="#999"/><path d="M12 1 V18 M4 8 H20" stroke="#1a1a70" stroke-width="2"/></svg><svg class=a style="left:404px;top:164.5px;" width="23" height="23" viewBox="0 0 24 24"><path d="M8 4 A9 9 0 1 0 17 4.5" fill="none" stroke="#1a1a70" stroke-width="2"/><path d="M6 0 L14 3 L8 9Z" fill="#1a1a70"/></svg><svg class=a style="left:437px;top:166.75px;" width="18.5" height="18.5" viewBox="0 0 24 24"><rect x="2" y="2" width="20" height="20" fill="#fff" stroke="#000" stroke-width="2"/><rect x="3" y="11" width="10" height="10" fill="#777"/><path d="M3 11H13V21" fill="none" stroke="#000" stroke-width="1.5"/></svg><svg class=a style="left:468px;top:164px;" width="24" height="24" viewBox="0 0 24 24"><path d="M0 24 L6 16 H24 L18 24Z" fill="#999"/><circle cx="12" cy="4" r="3" fill="#999"/><path d="M12 7 V17" stroke="#000" stroke-dasharray="2 2"/><rect x="9" y="15" width="6" height="6" fill="#fff" stroke="#000"/></svg><div class=a style="left:499.5px;top:164px;width:1px;height:24px;background:#a0a0a0"></div><div class=a style="left:500.5px;top:164px;width:1px;height:24px;background:#fff"></div><svg class=a style="left:508px;top:164px;" width="24" height="24" viewBox="0 0 24 24"><path d="M1 3H13 M1 7H10 M1 11H13 M1 15H10 M1 19H13 M1 23H13" stroke="#000" stroke-width="2"/><path d="M15 11 V23 L18 20 L21 24 L22 22 L20 19 H24Z" fill="#101080"/></svg><div class=a style="left:539.5px;top:164px;width:1px;height:24px;background:#a0a0a0"></div><div class=a style="left:540.5px;top:164px;width:1px;height:24px;background:#fff"></div><div class=a style="left:544px;top:164px;width:1px;height:24px;background:#a0a0a0"></div><div class=a style="left:545px;top:164px;width:1px;height:24px;background:#fff"></div><svg class=a style="left:549px;top:165.5px;" width="21" height="21" viewBox="0 0 24 24"><rect x="2" y="1" width="17" height="19" fill="#fff" stroke="#000" stroke-width="1.5"/><path d="M5 6H16 M5 10H16 M5 14H13" stroke="#000"/><path d="M0 24 L6 16 L12 20 L18 14 L24 24Z" fill="#18a018"/></svg><div class=a style="left:785.5px;top:164px;width:1px;height:24px;background:#a0a0a0"></div><div class=a style="left:786.5px;top:164px;width:1px;height:24px;background:#fff"></div><svg class=a style="left:795px;top:165px;" width="22" height="22" viewBox="0 0 24 24"><rect x="2" y="1" width="20" height="22" fill="#ccc" stroke="#000" stroke-width="2"/><path d="M6 8H18 M6 12H18 M6 16H18" stroke="#333" stroke-width="2"/></svg><svg class=a style="left:826px;top:163.5px;" width="25" height="25" viewBox="0 0 24 24"><path d="M3 4 L21 21 M21 3 L3 21" stroke="#111" stroke-width="5"/><path d="M3 4 L21 21" stroke="#603" stroke-width="1"/></svg><div class=a style="left:859px;top:164px;width:1px;height:24px;background:#a0a0a0"></div><div class=a style="left:860px;top:164px;width:1px;height:24px;background:#fff"></div><svg class=a style="left:869px;top:168px;" width="16" height="16" viewBox="0 0 24 24"><circle cx="4" cy="12" r="1.5" fill="#e00"/><circle cx="20" cy="4" r="2.5" fill="#e00"/><circle cx="12" cy="19" r="1.5" fill="#e00"/></svg><svg class=a style="left:897px;top:163.5px;" width="25" height="25" viewBox="0 0 24 24"><path d="M1 10 L7 17 L13 8 L19 15 L23 9" fill="none" stroke="#e00" stroke-width="3"/></svg><svg class=a style="left:931px;top:165.5px;" width="21" height="21" viewBox="0 0 24 24"><circle cx="12" cy="12" r="9" fill="#e01818" stroke="#700"/></svg><svg class=a style="left:961px;top:163.5px;" width="25" height="25" viewBox="0 0 24 24"><circle cx="12" cy="11" r="9" fill="#d01818" stroke="#000" stroke-width="1.5"/><path d="M6 18 L18 24" stroke="#000" stroke-width="2"/></svg><svg class=a style="left:995px;top:164.5px;" width="23" height="23" viewBox="0 0 24 24"><circle cx="12" cy="12" r="10" fill="#8090d0" stroke="#404080" stroke-width="1.5"/><path d="M2 12H22 M12 2V22" stroke="#404080"/></svg><svg class=a style="left:1026px;top:165px;" width="22" height="22" viewBox="0 0 24 24"><path d="M2 22 L16 8" stroke="#333" stroke-width="3"/><path d="M18 2 L19 5 L22 6 L19 7 L18 10 L17 7 L14 6 L17 5Z" fill="#aaa"/></svg><svg class=a style="left:1057px;top:163.5px;" width="25" height="25" viewBox="0 0 24 24"><rect x="2" y="3" width="20" height="18" fill="none" stroke="#18a018" stroke-width="2" stroke-dasharray="2 2"/><rect x="6" y="7" width="4" height="4" fill="#18a018"/><rect x="14" y="13" width="4" height="4" fill="#18a018"/></svg><div class=a style="left:1089px;top:164px;width:1px;height:24px;background:#a0a0a0"></div><div class=a style="left:1090px;top:164px;width:1px;height:24px;background:#fff"></div><svg class=a style="left:1098px;top:164.5px;" width="23" height="23" viewBox="0 0 24 24"><circle cx="11" cy="11" r="9" fill="#fff" stroke="#2030a0" stroke-width="2"/><circle cx="8" cy="9" r="1.5" fill="#000"/><circle cx="14" cy="9" r="1.5" fill="#000"/><rect x="14" y="14" width="9" height="9" fill="#bbc"/></svg><svg class=a style="left:1130.5px;top:163.5px;" width="25" height="25" viewBox="0 0 24 24"><circle cx="12" cy="12" r="9" fill="#fff" stroke="#d01010" stroke-width="2.5"/><path d="M5 19 L19 5" stroke="#d01010" stroke-width="2"/></svg><svg class=a style="left:1162.5px;top:164.5px;" width="23" height="23" viewBox="0 0 24 24"><circle cx="12" cy="12" r="9" fill="none" stroke="#222" stroke-width="2"/><path d="M6 6 L18 18 M18 6 L6 18" stroke="#d01010" stroke-width="2"/></svg><svg class=a style="left:1194.5px;top:164.5px;" width="23" height="23" viewBox="0 0 24 24"><circle cx="12" cy="12" r="9" fill="none" stroke="#222" stroke-width="2"/><path d="M6 6 L12 12 L18 6 M12 12 V20" stroke="#18a018" stroke-width="2"/></svg><svg class=a style="left:1226.5px;top:164.5px;" width="23" height="23" viewBox="0 0 24 24"><circle cx="12" cy="12" r="9" fill="none" stroke="#222" stroke-width="2"/><path d="M4 20 L20 4" stroke="#2030c0" stroke-width="2"/></svg><svg class=a style="left:1256.5px;top:163.5px;" width="25" height="25" viewBox="0 0 24 24"><path d="M6 4 Q14 0 14 8 Q14 14 8 16 Q4 20 12 22 L20 20" fill="none" stroke="#b01010" stroke-width="4"/></svg><svg class=a style="left:1288.5px;top:163.5px;" width="25" height="25" viewBox="0 0 24 24"><path d="M2 12 L12 3 L22 12 V22 H2Z" fill="#c01010"/></svg><svg class=a style="left:1320.5px;top:163.25px;" width="25.5" height="25.5" viewBox="0 0 24 24"><circle cx="12" cy="12" r="10" fill="#8090d0" stroke="#404080" stroke-width="1.5"/><path d="M2 12H22 M12 2V22" stroke="#404080"/></svg><div class=a style="left:1352.5px;top:164px;width:1px;height:24px;background:#a0a0a0"></div><div class=a style="left:1353.5px;top:164px;width:1px;height:24px;background:#fff"></div><svg class=a style="left:1362px;top:164.5px;" width="23" height="23" viewBox="0 0 24 24"><path d="M2 4 L10 10 L18 3 M10 10 L8 22 M10 14 L20 22" stroke="#000" stroke-width="2.5" fill="none"/><circle cx="11" cy="5" r="2.5" fill="#c00"/></svg><svg class=a style="left:1391.5px;top:163.25px;" width="25.5" height="25.5" viewBox="0 0 24 24"><path d="M6 2 L10 12 L2 20 M10 12 L22 16" stroke="#000" stroke-width="2.5" fill="none"/><circle cx="12" cy="10" r="2" fill="#c00"/></svg><svg class=a style="left:1426px;top:164.5px;" width="23" height="23" viewBox="0 0 24 24"><rect x="2" y="7" width="20" height="15" fill="#c81818" stroke="#600"/><path d="M7 7 V3 H17 V7" fill="none" stroke="#600" stroke-width="2"/></svg><svg class=a style="left:1460px;top:166.5px;" width="19" height="19" viewBox="0 0 24 24"><circle cx="12" cy="12" r="8" fill="none" stroke="#000" stroke-width="3"/></svg><svg class=a style="left:1490px;top:164.5px;" width="23" height="23" viewBox="0 0 24 24"><rect x="0" y="0" width="24" height="24" fill="#d8d8d8"/><path d="M2 3 Q12 4 21 22" stroke="#a01010" stroke-width="3" fill="none"/></svg><svg class=a style="left:1520px;top:163.5px;" width="25" height="25" viewBox="0 0 24 24"><path d="M2 4 L22 22" stroke="#222" stroke-width="2"/><circle cx="6" cy="8" r="2.5" fill="#d040c0"/><circle cx="16" cy="17" r="2.5" fill="#d040c0"/></svg><div class=a style="left:1553px;top:164px;width:1px;height:24px;background:#a0a0a0"></div><div class=a style="left:1554px;top:164px;width:1px;height:24px;background:#fff"></div><svg class=a style="left:1562px;top:165px;" width="22" height="22" viewBox="0 0 24 24"><text x="0" y="22" font-family="Liberation Serif" font-weight="bold" font-size="25" fill="#d01010">M</text></svg><svg class=a style="left:1593px;top:163.5px;" width="25" height="25" viewBox="0 0 24 24"><circle cx="12" cy="12" r="10" fill="#d8d8d8" stroke="#888"/><circle cx="9" cy="10" r="2" fill="#666"/><circle cx="15" cy="14" r="2" fill="#666"/></svg><svg class=a style="left:1627.5px;top:165.75px;" width="20.5" height="20.5" viewBox="0 0 24 24"><text x="3" y="22" font-family="Liberation Sans" font-weight="bold" font-size="25" fill="#d01010">?</text></svg><div class=a style="left:620.5px;top:162px;width:149px;height:29px;background:#fff;border:1px solid #b8b8b8;border-right-color:#f0f0f0;border-bottom-color:#f0f0f0;box-sizing:border-box"></div><div class=a style="left:0px;top:201.6px;width:1849px;height:1.4px;background:#f0f0f0"></div><svg class=a style="left:1px;top:203px" width="1422" height="834" viewBox="4 1315 1422 834"><defs><filter id="ab" x="-20%" y="-20%" width="140%" height="140%"><feGaussianBlur stdDeviation="5"/></filter><filter id="ab2" x="-20%" y="-20%" width="140%" height="140%"><feGaussianBlur stdDeviation="2"/></filter></defs><rect x="4" y="1315" width="1422" height="834" fill="#908a7a"/><g transform="translate(0 1315) scale(0.57754)"><g filter="url(#ab)"><path d="M0 0 L2476 0 L2476 70 L0 80 Z" fill="#8a929c" /><path d="M400 0 L1120 0 L1120 60 L400 70 Z" fill="#6e7886" /><path d="M1120 0 L1300 0 L1300 60 L1120 60 Z" fill="#c8ccd0" /><path d="M0 70 L180 60 L240 200 L0 220 Z" fill="#d4ccbc" /><path d="M260 100 L400 90 L420 180 L270 190 Z" fill="#c0c4c8" /><path d="M0 200 L400 60 L2476 40 L2476 330 L1900 330 L1100 300 L700 330 L300 420 L0 460 Z" fill="#827e74" /><path d="M1060 110 L1580 100 L1590 160 L1070 168 Z" fill="#b8bcc0" /><path d="M420 0 L1160 0 L1160 55 L420 65 Z" fill="#96a0aa" /><path d="M1160 0 L2476 0 L2476 40 L1160 50 Z" fill="#a8aaae" /><path d="M740 70 L900 70 L920 130 L750 130 Z" fill="#9aa0a6" /><path d="M1280 20 L1420 40 L1420 110 L1290 100 Z" fill="#b8b0a8" /><path d="M0 460 L300 420 L700 330 L820 420 L700 700 L450 1000 L0 1100 Z" fill="#8c8676" /><path d="M0 250 L350 300 L380 330 L0 420 Z" fill="#928a78" /><path d="M0 700 L250 600 L350 900 L0 1000 Z" fill="#6e6658" /><path d="M420 700 L700 600 L660 850 L430 850 Z" fill="#8a8a60" /><path d="M0 950 L300 930 L330 1120 L0 1180 Z" fill="#7e8a5a" /><path d="M0 1180 L200 1150 L420 1280 L0 1330 Z" fill="#a89a84" /><path d="M1930 420 L2476 250 L2476 620 L2250 830 L1860 840 Z" fill="#7c7568" /><path d="M1500 180 L2476 560" stroke="#a6a6a2" stroke-width="70"/><path d="M0 370 L900 330" stroke="#b8bcc0" stroke-width="18" stroke-dasharray="40 14"/><path d="M1850 840 L2250 830 L2300 960 L1900 990 Z" fill="#b0aca4" /><path d="M2330 650 L2476 590 L2476 1160 L2300 1010 Z" fill="#aeb0b4" /><path d="M2200 1000 L2476 1100 L2476 1444 L2200 1444 Z" fill="#8a8678" /><path d="M1230 760 L1890 660 L2010 770 L1260 880 Z" fill="#4e5050" /><path d="M1180 980 L1850 880 L1930 930 L1200 1060 Z" fill="#a8a6a2" /><path d="M1230 1040 L1900 960 L2200 1000 L2200 1200 L1500 1060 L1250 1100 Z" fill="#827a6c" /><path d="M0 857 L538 857 L600 1013 L268 1016 L0 1150 Z" fill="#ad9f86" /><path d="M350 667 L700 667 L700 881 L350 881 Z" fill="#8a9455" /><path d="M0 973 L268 973 L268 1124 L0 1124 Z" fill="#8a9a5a" /><path d="M268 1016 L743 1001 L760 1259 L485 1274 L268 1284 Z" fill="#6c5e4c" /><path d="M743 1001 L1247 1001 L1247 1054 L743 1054 Z" fill="#4a4a48" /><path d="M646 1054 L1300 1054 L1300 1444 L485 1444 L485 1274 L646 1259 Z" fill="#b3b0aa" /><path d="M0 1150 L268 1284 L485 1274 L485 1444 L0 1444 Z" fill="#8e8678" /><path d="M1280 1040 L1560 1010 L1600 1300 L1300 1330 Z" fill="#6e6254" /><path d="M1530 1040 L1640 1000 L1950 1030 L2230 1330 L2230 1444 L1300 1444 L1300 1330 L1540 1190 Z" fill="#b0b6bc" /><path d="M1560 1150 L1800 1120 L2000 1330 L1750 1444 L1520 1444 L1480 1300 Z" fill="#90908e" /><path d="M1900 1000 L2400 940 L2476 1000 L2476 1444 L2230 1444 L2230 1330 Z" fill="#847c6e" /><path d="M1900 880 L2400 860 L2420 1000 L1950 1020 Z" fill="#aeaaa4" /><path d="M0 1290 L420 1274 L500 1444 L0 1444 Z" fill="#a6aeb6" /><path d="M60 1340 L380 1330 L420 1444 L60 1444 Z" fill="#8a98a8" /></g><g filter="url(#ab2)"><ellipse cx="801" cy="88" rx="18" ry="38" fill="#3a4246"/><ellipse cx="2033" cy="70" rx="17" ry="36" fill="#3e484a"/><ellipse cx="531" cy="67" rx="15" ry="32" fill="#444c50"/><ellipse cx="224" cy="175" rx="20" ry="43" fill="#3a4246"/><ellipse cx="2345" cy="241" rx="17" ry="36" fill="#3a4246"/><ellipse cx="1428" cy="166" rx="22" ry="46" fill="#3a4246"/><ellipse cx="1378" cy="82" rx="15" ry="32" fill="#3e484a"/><ellipse cx="291" cy="138" rx="20" ry="42" fill="#444c50"/><ellipse cx="255" cy="222" rx="12" ry="26" fill="#3a4246"/><ellipse cx="1356" cy="60" rx="11" ry="23" fill="#444c50"/><ellipse cx="1229" cy="210" rx="19" ry="41" fill="#5a6a4a"/><ellipse cx="1449" cy="185" rx="13" ry="29" fill="#444c50"/><ellipse cx="1730" cy="118" rx="17" ry="36" fill="#3e484a"/><ellipse cx="1225" cy="149" rx="15" ry="33" fill="#3e484a"/><ellipse cx="2426" cy="77" rx="15" ry="32" fill="#50585a"/><ellipse cx="376" cy="196" rx="10" ry="23" fill="#3a4246"/><ellipse cx="1893" cy="223" rx="20" ry="44" fill="#50585a"/><ellipse cx="842" cy="152" rx="16" ry="34" fill="#5a6a4a"/><ellipse cx="170" cy="69" rx="13" ry="28" fill="#3a4246"/><ellipse cx="150" cy="264" rx="18" ry="38" fill="#5a6a4a"/><ellipse cx="704" cy="163" rx="18" ry="39" fill="#3a4246"/><ellipse cx="2329" cy="153" rx="17" ry="37" fill="#5a6a4a"/><ellipse cx="145" cy="285" rx="11" ry="25" fill="#444c50"/><ellipse cx="1229" cy="93" rx="15" ry="32" fill="#50585a"/><ellipse cx="2187" cy="302" rx="20" ry="44" fill="#50585a"/><ellipse cx="1690" cy="161" rx="13" ry="27" fill="#3a4246"/><ellipse cx="436" cy="114" rx="13" ry="28" fill="#5a6a4a"/><ellipse cx="2057" cy="98" rx="13" ry="29" fill="#444c50"/><ellipse cx="1037" cy="158" rx="17" ry="36" fill="#444c50"/><ellipse cx="1709" cy="204" rx="17" ry="37" fill="#3a4246"/><ellipse cx="2356" cy="257" rx="17" ry="36" fill="#5a6a4a"/><ellipse cx="987" cy="73" rx="18" ry="38" fill="#3a4246"/><ellipse cx="471" cy="355" rx="15" ry="33" fill="#3a4246"/><ellipse cx="841" cy="56" rx="10" ry="22" fill="#444c50"/><ellipse cx="1519" cy="62" rx="12" ry="27" fill="#5a6a4a"/><ellipse cx="367" cy="120" rx="14" ry="30" fill="#50585a"/><ellipse cx="1173" cy="76" rx="16" ry="34" fill="#5a6a4a"/><ellipse cx="1189" cy="139" rx="12" ry="25" fill="#50585a"/><ellipse cx="1833" cy="193" rx="18" ry="39" fill="#3e484a"/><ellipse cx="57" cy="344" rx="16" ry="35" fill="#444c50"/><ellipse cx="1877" cy="135" rx="18" ry="38" fill="#3a4246"/><ellipse cx="1723" cy="123" rx="14" ry="31" fill="#444c50"/><ellipse cx="880" cy="111" rx="16" ry="35" fill="#3e484a"/><ellipse cx="816" cy="111" rx="20" ry="42" fill="#444c50"/><ellipse cx="1995" cy="301" rx="19" ry="40" fill="#444c50"/><ellipse cx="494" cy="197" rx="19" ry="40" fill="#3a4246"/><ellipse cx="1956" cy="191" rx="12" ry="27" fill="#3e484a"/><ellipse cx="2368" cy="183" rx="21" ry="45" fill="#50585a"/><ellipse cx="2364" cy="156" rx="13" ry="27" fill="#444c50"/><ellipse cx="1163" cy="148" rx="16" ry="34" fill="#3e484a"/><ellipse cx="2080" cy="193" rx="18" ry="38" fill="#3a4246"/><ellipse cx="2066" cy="78" rx="15" ry="32" fill="#444c50"/><ellipse cx="1183" cy="97" rx="19" ry="42" fill="#50585a"/><ellipse cx="214" cy="342" rx="19" ry="40" fill="#5a6a4a"/><ellipse cx="1794" cy="94" rx="11" ry="25" fill="#444c50"/><ellipse cx="1462" cy="188" rx="18" ry="38" fill="#3e484a"/><ellipse cx="2046" cy="353" rx="18" ry="38" fill="#50585a"/><ellipse cx="386" cy="215" rx="10" ry="22" fill="#3a4246"/><ellipse cx="2045" cy="107" rx="13" ry="28" fill="#50585a"/><ellipse cx="1240" cy="284" rx="14" ry="30" fill="#3e484a"/><ellipse cx="1037" cy="81" rx="21" ry="45" fill="#50585a"/><ellipse cx="2222" cy="251" rx="20" ry="42" fill="#3e484a"/><ellipse cx="1242" cy="210" rx="16" ry="35" fill="#3a4246"/><ellipse cx="2161" cy="288" rx="17" ry="37" fill="#444c50"/><ellipse cx="426" cy="191" rx="19" ry="40" fill="#3e484a"/><ellipse cx="152" cy="258" rx="16" ry="35" fill="#5a6a4a"/><ellipse cx="1941" cy="73" rx="17" ry="36" fill="#444c50"/><ellipse cx="473" cy="53" rx="11" ry="24" fill="#5a6a4a"/><ellipse cx="1390" cy="283" rx="21" ry="45" fill="#5a6a4a"/><ellipse cx="806" cy="351" rx="17" ry="37" fill="#444c50"/><ellipse cx="1715" cy="184" rx="16" ry="35" fill="#5a6a4a"/><ellipse cx="1257" cy="119" rx="16" ry="35" fill="#50585a"/><ellipse cx="2284" cy="325" rx="12" ry="27" fill="#5a6a4a"/><ellipse cx="339" cy="78" rx="15" ry="33" fill="#3a4246"/><ellipse cx="1661" cy="177" rx="12" ry="27" fill="#50585a"/><ellipse cx="382" cy="269" rx="18" ry="38" fill="#444c50"/><ellipse cx="626" cy="83" rx="16" ry="34" fill="#3a4246"/><ellipse cx="986" cy="195" rx="22" ry="47" fill="#444c50"/><ellipse cx="399" cy="178" rx="16" ry="35" fill="#50585a"/><ellipse cx="1043" cy="154" rx="11" ry="24" fill="#50585a"/><ellipse cx="48" cy="217" rx="15" ry="33" fill="#3a4246"/><ellipse cx="951" cy="205" rx="13" ry="29" fill="#3a4246"/><ellipse cx="279" cy="333" rx="13" ry="27" fill="#3a4246"/><ellipse cx="208" cy="127" rx="21" ry="45" fill="#444c50"/><ellipse cx="669" cy="81" rx="15" ry="32" fill="#50585a"/><ellipse cx="1005" cy="211" rx="16" ry="35" fill="#5a6a4a"/><ellipse cx="1734" cy="68" rx="11" ry="23" fill="#444c50"/><ellipse cx="1053" cy="63" rx="21" ry="46" fill="#3a4246"/><ellipse cx="1984" cy="66" rx="20" ry="43" fill="#3a4246"/><ellipse cx="654" cy="78" rx="10" ry="22" fill="#3e484a"/><ellipse cx="1539" cy="53" rx="18" ry="40" fill="#3a4246"/><ellipse cx="2399" cy="123" rx="12" ry="26" fill="#50585a"/><ellipse cx="1556" cy="209" rx="12" ry="27" fill="#5a6a4a"/><ellipse cx="1238" cy="96" rx="14" ry="30" fill="#3a4246"/><ellipse cx="2462" cy="51" rx="10" ry="22" fill="#3e484a"/><ellipse cx="1364" cy="100" rx="16" ry="34" fill="#5a6a4a"/><ellipse cx="263" cy="302" rx="15" ry="33" fill="#5a6a4a"/><ellipse cx="2402" cy="138" rx="12" ry="27" fill="#444c50"/><ellipse cx="1749" cy="243" rx="15" ry="32" fill="#50585a"/><ellipse cx="2431" cy="307" rx="10" ry="22" fill="#50585a"/><ellipse cx="1066" cy="57" rx="18" ry="39" fill="#5a6a4a"/><ellipse cx="2155" cy="254" rx="13" ry="29" fill="#444c50"/><ellipse cx="1715" cy="54" rx="12" ry="26" fill="#50585a"/><ellipse cx="1103" cy="124" rx="21" ry="46" fill="#3e484a"/><ellipse cx="801" cy="51" rx="20" ry="44" fill="#444c50"/><ellipse cx="882" cy="40" rx="14" ry="31" fill="#5a6a4a"/><ellipse cx="690" cy="249" rx="13" ry="28" fill="#3a4246"/><ellipse cx="224" cy="301" rx="12" ry="25" fill="#3e484a"/><ellipse cx="103" cy="47" rx="14" ry="29" fill="#444c50"/><ellipse cx="209" cy="346" rx="20" ry="43" fill="#444c50"/><ellipse cx="1628" cy="269" rx="20" ry="44" fill="#5a6a4a"/><ellipse cx="1892" cy="270" rx="16" ry="34" fill="#50585a"/><ellipse cx="1793" cy="245" rx="10" ry="23" fill="#3e484a"/><ellipse cx="1553" cy="274" rx="20" ry="42" fill="#444c50"/><ellipse cx="2252" cy="280" rx="17" ry="36" fill="#3a4246"/><ellipse cx="2046" cy="226" rx="21" ry="44" fill="#444c50"/><ellipse cx="210" cy="53" rx="18" ry="38" fill="#3a4246"/><ellipse cx="932" cy="184" rx="11" ry="23" fill="#3a4246"/><ellipse cx="1550" cy="257" rx="16" ry="34" fill="#3a4246"/><ellipse cx="1131" cy="62" rx="21" ry="45" fill="#3e484a"/><ellipse cx="227" cy="208" rx="19" ry="41" fill="#5a6a4a"/><ellipse cx="624" cy="63" rx="13" ry="28" fill="#444c50"/><ellipse cx="571" cy="247" rx="15" ry="33" fill="#5a6a4a"/><ellipse cx="190" cy="331" rx="13" ry="29" fill="#3a4246"/><ellipse cx="1527" cy="245" rx="11" ry="24" fill="#444c50"/><ellipse cx="821" cy="248" rx="18" ry="39" fill="#3e484a"/><ellipse cx="1405" cy="43" rx="11" ry="23" fill="#50585a"/><ellipse cx="2407" cy="71" rx="13" ry="27" fill="#5a6a4a"/><ellipse cx="720" cy="205" rx="15" ry="33" fill="#5a6a4a"/><ellipse cx="1359" cy="139" rx="11" ry="24" fill="#5a6a4a"/><ellipse cx="43" cy="186" rx="20" ry="43" fill="#5a6a4a"/><ellipse cx="2461" cy="163" rx="21" ry="45" fill="#444c50"/><ellipse cx="184" cy="68" rx="19" ry="41" fill="#50585a"/><ellipse cx="2358" cy="82" rx="20" ry="43" fill="#3e484a"/><ellipse cx="692" cy="76" rx="14" ry="31" fill="#5a6a4a"/><ellipse cx="2222" cy="195" rx="10" ry="22" fill="#3a4246"/><ellipse cx="2352" cy="258" rx="15" ry="32" fill="#444c50"/><ellipse cx="1030" cy="160" rx="11" ry="25" fill="#50585a"/><ellipse cx="4" cy="280" rx="20" ry="43" fill="#3a4246"/><ellipse cx="2327" cy="102" rx="10" ry="22" fill="#50585a"/><ellipse cx="626" cy="60" rx="15" ry="32" fill="#3e484a"/><ellipse cx="189" cy="336" rx="19" ry="41" fill="#3a4246"/><ellipse cx="694" cy="56" rx="18" ry="38" fill="#444c50"/><ellipse cx="617" cy="125" rx="16" ry="35" fill="#444c50"/><ellipse cx="1914" cy="291" rx="15" ry="33" fill="#3a4246"/><ellipse cx="2010" cy="241" rx="21" ry="45" fill="#3e484a"/><ellipse cx="1359" cy="270" rx="10" ry="23" fill="#5a6a4a"/><ellipse cx="1116" cy="280" rx="18" ry="38" fill="#50585a"/><ellipse cx="1362" cy="94" rx="15" ry="32" fill="#50585a"/><ellipse cx="737" cy="276" rx="22" ry="46" fill="#50585a"/><ellipse cx="1005" cy="116" rx="16" ry="34" fill="#5a6a4a"/><ellipse cx="296" cy="245" rx="11" ry="24" fill="#3e484a"/><ellipse cx="2243" cy="199" rx="13" ry="27" fill="#50585a"/><ellipse cx="2467" cy="183" rx="12" ry="25" fill="#444c50"/><ellipse cx="604" cy="95" rx="17" ry="36" fill="#50585a"/><ellipse cx="592" cy="122" rx="17" ry="36" fill="#3a4246"/><ellipse cx="1856" cy="172" rx="15" ry="32" fill="#3e484a"/><ellipse cx="519" cy="126" rx="19" ry="41" fill="#5a6a4a"/><ellipse cx="687" cy="349" rx="11" ry="25" fill="#3e484a"/><ellipse cx="1310" cy="292" rx="20" ry="43" fill="#3a4246"/><ellipse cx="671" cy="119" rx="15" ry="32" fill="#5a6a4a"/><ellipse cx="1069" cy="139" rx="20" ry="42" fill="#3a4246"/><ellipse cx="315" cy="176" rx="19" ry="41" fill="#5a6a4a"/><ellipse cx="2397" cy="196" rx="11" ry="23" fill="#3e484a"/><ellipse cx="2118" cy="351" rx="13" ry="28" fill="#3a4246"/><ellipse cx="554" cy="88" rx="22" ry="46" fill="#3a4246"/><ellipse cx="2331" cy="270" rx="18" ry="38" fill="#5a6a4a"/><ellipse cx="210" cy="288" rx="10" ry="22" fill="#444c50"/><ellipse cx="575" cy="334" rx="18" ry="38" fill="#50585a"/><ellipse cx="2382" cy="240" rx="16" ry="35" fill="#5a6a4a"/><ellipse cx="1729" cy="75" rx="11" ry="23" fill="#3e484a"/><ellipse cx="2336" cy="101" rx="13" ry="28" fill="#3e484a"/><ellipse cx="2" cy="211" rx="22" ry="47" fill="#50585a"/><ellipse cx="2374" cy="246" rx="21" ry="44" fill="#5a6a4a"/><ellipse cx="1303" cy="215" rx="10" ry="22" fill="#5a6a4a"/><path d="M577 542 l-28 74" stroke="#3a3a38" stroke-width="4"/><path d="M553 617 l-14 86" stroke="#3a3a38" stroke-width="4"/><path d="M758 489 l-27 63" stroke="#3a3a38" stroke-width="4"/><path d="M344 790 l-18 95" stroke="#3a3a38" stroke-width="4"/><path d="M606 673 l-17 107" stroke="#3a3a38" stroke-width="4"/><path d="M255 881 l-16 55" stroke="#3a3a38" stroke-width="4"/><path d="M623 534 l27 74" stroke="#3a3a38" stroke-width="4"/><path d="M153 487 l-4 86" stroke="#3a3a38" stroke-width="4"/><path d="M777 436 l-6 54" stroke="#3a3a38" stroke-width="4"/><path d="M798 433 l-26 44" stroke="#3a3a38" stroke-width="4"/><path d="M322 932 l23 91" stroke="#3a3a38" stroke-width="4"/><path d="M817 954 l-10 52" stroke="#3a3a38" stroke-width="4"/><path d="M767 832 l-28 86" stroke="#3a3a38" stroke-width="4"/><path d="M310 586 l-10 51" stroke="#3a3a38" stroke-width="4"/><path d="M2 524 l-8 106" stroke="#3a3a38" stroke-width="4"/><path d="M101 976 l-17 64" stroke="#3a3a38" stroke-width="4"/><path d="M673 882 l-4 43" stroke="#3a3a38" stroke-width="4"/><path d="M388 585 l25 53" stroke="#3a3a38" stroke-width="4"/><path d="M298 932 l-28 68" stroke="#3a3a38" stroke-width="4"/><path d="M665 846 l-27 42" stroke="#3a3a38" stroke-width="4"/><path d="M51 947 l-14 92" stroke="#3a3a38" stroke-width="4"/><path d="M736 563 l-13 107" stroke="#3a3a38" stroke-width="4"/><path d="M505 513 l12 62" stroke="#3a3a38" stroke-width="4"/><path d="M226 342 l15 104" stroke="#3a3a38" stroke-width="4"/><path d="M519 962 l-28 56" stroke="#3a3a38" stroke-width="4"/><path d="M389 971 l27 67" stroke="#3a3a38" stroke-width="4"/><path d="M205 623 l0 104" stroke="#3a3a38" stroke-width="4"/><path d="M150 869 l14 97" stroke="#3a3a38" stroke-width="4"/><path d="M633 740 l-10 62" stroke="#3a3a38" stroke-width="4"/><path d="M296 856 l-25 53" stroke="#3a3a38" stroke-width="4"/><path d="M617 503 l-26 42" stroke="#3a3a38" stroke-width="4"/><path d="M453 555 l28 101" stroke="#3a3a38" stroke-width="4"/><path d="M810 514 l-24 46" stroke="#3a3a38" stroke-width="4"/><path d="M408 808 l-3 56" stroke="#3a3a38" stroke-width="4"/><path d="M341 749 l10 92" stroke="#3a3a38" stroke-width="4"/><path d="M694 778 l-22 98" stroke="#3a3a38" stroke-width="4"/><path d="M240 714 l-7 91" stroke="#3a3a38" stroke-width="4"/><path d="M163 503 l-15 50" stroke="#3a3a38" stroke-width="4"/><path d="M725 721 l-10 67" stroke="#3a3a38" stroke-width="4"/><path d="M813 674 l-16 96" stroke="#3a3a38" stroke-width="4"/><path d="M535 994 l-23 73" stroke="#3a3a38" stroke-width="4"/><path d="M671 894 l24 42" stroke="#3a3a38" stroke-width="4"/><path d="M240 418 l-18 108" stroke="#3a3a38" stroke-width="4"/><path d="M478 953 l-7 100" stroke="#3a3a38" stroke-width="4"/><path d="M368 511 l16 106" stroke="#3a3a38" stroke-width="4"/><path d="M86 733 l7 55" stroke="#3a3a38" stroke-width="4"/><path d="M302 433 l-17 57" stroke="#3a3a38" stroke-width="4"/><path d="M491 770 l-17 40" stroke="#3a3a38" stroke-width="4"/><path d="M268 787 l-18 61" stroke="#3a3a38" stroke-width="4"/><path d="M166 864 l2 44" stroke="#3a3a38" stroke-width="4"/><path d="M83 600 l3 84" stroke="#3a3a38" stroke-width="4"/><path d="M74 448 l11 68" stroke="#3a3a38" stroke-width="4"/><path d="M232 543 l27 61" stroke="#3a3a38" stroke-width="4"/><path d="M464 575 l-5 100" stroke="#3a3a38" stroke-width="4"/><path d="M817 580 l-18 90" stroke="#3a3a38" stroke-width="4"/><path d="M167 343 l24 69" stroke="#3a3a38" stroke-width="4"/><path d="M672 608 l22 72" stroke="#3a3a38" stroke-width="4"/><path d="M133 349 l3 84" stroke="#3a3a38" stroke-width="4"/><path d="M746 398 l7 65" stroke="#3a3a38" stroke-width="4"/><path d="M413 436 l-13 76" stroke="#3a3a38" stroke-width="4"/></g><path d="M0 1190 Q300 1000 520 880 Q700 760 820 420" fill="none" stroke="#b8ac92" stroke-width="22" opacity="0.8"/><path d="M150 920 Q400 850 640 760 M0 820 Q250 760 470 780 M250 1444 Q380 1250 560 1180" fill="none" stroke="#b0a48c" stroke-width="16" opacity="0.7"/><path d="M0 400 Q300 380 700 320" fill="none" stroke="#a89c88" stroke-width="20" opacity="0.7"/><path d="M840 375 L1710 320 L1930 420 L830 515 Z" fill="#c6c0ba" /><path d="M860 372 L850 505" stroke="#a89c94" stroke-width="6" opacity="0.6"/><path d="M896 370 L886 502" stroke="#a89c94" stroke-width="6" opacity="0.6"/><path d="M932 368 L923 499" stroke="#a89c94" stroke-width="6" opacity="0.6"/><path d="M968 366 L959 496" stroke="#a89c94" stroke-width="6" opacity="0.6"/><path d="M1004 364 L996 493" stroke="#a89c94" stroke-width="6" opacity="0.6"/><path d="M1040 363 L1032 490" stroke="#a89c94" stroke-width="6" opacity="0.6"/><path d="M1076 361 L1069 487" stroke="#a89c94" stroke-width="6" opacity="0.6"/><path d="M1112 359 L1105 484" stroke="#a89c94" stroke-width="6" opacity="0.6"/><path d="M1148 357 L1142 481" stroke="#a89c94" stroke-width="6" opacity="0.6"/><path d="M1184 355 L1178 478" stroke="#a89c94" stroke-width="6" opacity="0.6"/><path d="M1220 354 L1215 475" stroke="#a89c94" stroke-width="6" opacity="0.6"/><path d="M1256 352 L1251 472" stroke="#a89c94" stroke-width="6" opacity="0.6"/><path d="M1292 350 L1288 469" stroke="#a89c94" stroke-width="6" opacity="0.6"/><path d="M1328 348 L1324 466" stroke="#a89c94" stroke-width="6" opacity="0.6"/><path d="M1364 346 L1361 463" stroke="#a89c94" stroke-width="6" opacity="0.6"/><path d="M1400 345 L1397 460" stroke="#a89c94" stroke-width="6" opacity="0.6"/><path d="M1436 343 L1434 457" stroke="#a89c94" stroke-width="6" opacity="0.6"/><path d="M1472 341 L1470 454" stroke="#a89c94" stroke-width="6" opacity="0.6"/><path d="M1508 339 L1507 451" stroke="#a89c94" stroke-width="6" opacity="0.6"/><path d="M1544 337 L1543 448" stroke="#a89c94" stroke-width="6" opacity="0.6"/><path d="M1580 336 L1580 445" stroke="#a89c94" stroke-width="6" opacity="0.6"/><path d="M1616 334 L1616 442" stroke="#a89c94" stroke-width="6" opacity="0.6"/><path d="M1652 332 L1653 439" stroke="#a89c94" stroke-width="6" opacity="0.6"/><path d="M1688 330 L1689 436" stroke="#a89c94" stroke-width="6" opacity="0.6"/><path d="M1724 328 L1726 433" stroke="#a89c94" stroke-width="6" opacity="0.6"/><path d="M1760 327 L1762 430" stroke="#a89c94" stroke-width="6" opacity="0.6"/><path d="M1796 325 L1799 427" stroke="#a89c94" stroke-width="6" opacity="0.6"/><path d="M1832 323 L1835 424" stroke="#a89c94" stroke-width="6" opacity="0.6"/><path d="M1868 321 L1872 421" stroke="#a89c94" stroke-width="6" opacity="0.6"/><path d="M1904 319 L1908 418" stroke="#a89c94" stroke-width="6" opacity="0.6"/><path d="M830 505 L1930 410 L1930 430 L830 525 Z" fill="#eeeeee" /><path d="M830 520 L1930 425 L1890 665 L1230 760 L840 690 Z" fill="#d6d8da" /><rect x="915" y="545" width="34" height="44" fill="#7c8686" stroke="#22e022" stroke-width="3"/><rect x="970" y="539" width="34" height="44" fill="#7c8686" stroke="#22e022" stroke-width="3"/><rect x="1025" y="534" width="34" height="44" fill="#7c8686" stroke="#22e022" stroke-width="3"/><rect x="1080" y="529" width="34" height="44" fill="#7c8686" stroke="#22e022" stroke-width="3"/><rect x="1135" y="524" width="34" height="44" fill="#7c8686" stroke="#22e022" stroke-width="3"/><rect x="1190" y="519" width="34" height="44" fill="#7c8686" stroke="#22e022" stroke-width="3"/><rect x="1245" y="513" width="34" height="44" fill="#7c8686" stroke="#22e022" stroke-width="3"/><rect x="1300" y="508" width="34" height="44" fill="#7c8686" stroke="#22e022" stroke-width="3"/><rect x="1355" y="503" width="34" height="44" fill="#7c8686" stroke="#22e022" stroke-width="3"/><rect x="1410" y="498" width="34" height="44" fill="#7c8686" stroke="#22e022" stroke-width="3"/><rect x="1465" y="493" width="34" height="44" fill="#7c8686" stroke="#22e022" stroke-width="3"/><rect x="1520" y="487" width="34" height="44" fill="#7c8686" stroke="#22e022" stroke-width="3"/><rect x="1575" y="482" width="34" height="44" fill="#7c8686" stroke="#22e022" stroke-width="3"/><rect x="1630" y="477" width="34" height="44" fill="#7c8686" stroke="#22e022" stroke-width="3"/><rect x="1685" y="472" width="34" height="44" fill="#7c8686" stroke="#22e022" stroke-width="3"/><rect x="1740" y="467" width="34" height="44" fill="#7c8686" stroke="#22e022" stroke-width="3"/><rect x="1795" y="461" width="34" height="44" fill="#7c8686" stroke="#22e022" stroke-width="3"/><rect x="915" y="620" width="34" height="44" fill="#7c8686" stroke="#22e022" stroke-width="3"/><rect x="970" y="614" width="34" height="44" fill="#7c8686" stroke="#22e022" stroke-width="3"/><rect x="1025" y="609" width="34" height="44" fill="#7c8686" stroke="#22e022" stroke-width="3"/><rect x="1080" y="604" width="34" height="44" fill="#7c8686" stroke="#22e022" stroke-width="3"/><rect x="1135" y="599" width="34" height="44" fill="#7c8686" stroke="#22e022" stroke-width="3"/><rect x="1190" y="594" width="34" height="44" fill="#7c8686" stroke="#22e022" stroke-width="3"/><rect x="1245" y="588" width="34" height="44" fill="#7c8686" stroke="#22e022" stroke-width="3"/><rect x="1300" y="583" width="34" height="44" fill="#7c8686" stroke="#22e022" stroke-width="3"/><rect x="1355" y="578" width="34" height="44" fill="#7c8686" stroke="#22e022" stroke-width="3"/><rect x="1410" y="573" width="34" height="44" fill="#7c8686" stroke="#22e022" stroke-width="3"/><rect x="1465" y="568" width="34" height="44" fill="#7c8686" stroke="#22e022" stroke-width="3"/><rect x="1520" y="562" width="34" height="44" fill="#7c8686" stroke="#22e022" stroke-width="3"/><rect x="1575" y="557" width="34" height="44" fill="#7c8686" stroke="#22e022" stroke-width="3"/><rect x="1630" y="552" width="34" height="44" fill="#7c8686" stroke="#22e022" stroke-width="3"/><rect x="1685" y="547" width="34" height="44" fill="#7c8686" stroke="#22e022" stroke-width="3"/><rect x="1740" y="542" width="34" height="44" fill="#7c8686" stroke="#22e022" stroke-width="3"/><rect x="1795" y="536" width="34" height="44" fill="#7c8686" stroke="#22e022" stroke-width="3"/><rect x="1245" y="663" width="34" height="44" fill="#7c8686" stroke="#22e022" stroke-width="3"/><rect x="1300" y="658" width="34" height="44" fill="#7c8686" stroke="#22e022" stroke-width="3"/><rect x="1355" y="653" width="34" height="44" fill="#7c8686" stroke="#22e022" stroke-width="3"/><rect x="1410" y="648" width="34" height="44" fill="#7c8686" stroke="#22e022" stroke-width="3"/><rect x="1465" y="643" width="34" height="44" fill="#7c8686" stroke="#22e022" stroke-width="3"/><rect x="1520" y="637" width="34" height="44" fill="#7c8686" stroke="#22e022" stroke-width="3"/><rect x="1575" y="632" width="34" height="44" fill="#7c8686" stroke="#22e022" stroke-width="3"/><rect x="1630" y="627" width="34" height="44" fill="#7c8686" stroke="#22e022" stroke-width="3"/><rect x="1685" y="622" width="34" height="44" fill="#7c8686" stroke="#22e022" stroke-width="3"/><rect x="1740" y="617" width="34" height="44" fill="#7c8686" stroke="#22e022" stroke-width="3"/><rect x="1795" y="611" width="34" height="44" fill="#7c8686" stroke="#22e022" stroke-width="3"/><path d="M765 690 L1190 660 L1250 830 L745 880 Z" fill="#c9c7c4" /><path d="M745 870 L1250 820 L1250 840 L745 895 Z" fill="#e8e8e8" /><path d="M745 885 L1250 835 L1250 960 L760 1020 Z" fill="#9ca0a4" /><rect x="800" y="905" width="70" height="90" fill="#5a6064" stroke="#22e022" stroke-width="3"/><rect x="895" y="897" width="70" height="90" fill="#5a6064" stroke="#22e022" stroke-width="3"/><rect x="990" y="889" width="70" height="90" fill="#5a6064" stroke="#22e022" stroke-width="3"/><rect x="1085" y="881" width="70" height="90" fill="#5a6064" stroke="#22e022" stroke-width="3"/><g filter="url(#ab2)"><ellipse cx="1600" cy="745" rx="215" ry="165" fill="#a4ad5c"/><ellipse cx="1540" cy="700" rx="120" ry="90" fill="#b8c070"/><ellipse cx="1680" cy="820" rx="110" ry="80" fill="#7e8c40"/></g><ellipse cx="1930" cy="560" rx="22" ry="110" fill="#4e6c3e" transform="rotate(22 1930 560)"/><ellipse cx="2030" cy="620" rx="22" ry="110" fill="#4e6c3e" transform="rotate(22 2030 620)"/><ellipse cx="2170" cy="680" rx="22" ry="110" fill="#4e6c3e" transform="rotate(22 2170 680)"/><path d="M365 905 L485 1160 M763 930 L828 1180 M1003 905 L1070 1130" stroke="#3e4848" stroke-width="10"/><path d="M828 1180 L1000 1320 M1070 1130 L1200 1250 M485 1160 L560 1250" stroke="#6a6864" stroke-width="18" opacity="0.55"/><path d="M520 1160 L780 1130 L1050 1090 M560 1040 L750 1020" stroke="#e0e0e0" stroke-width="14" opacity="0.8"/><circle cx="545" cy="1400" r="22" fill="#3a3a3a"/><circle cx="545" cy="1400" r="9" fill="#888"/><circle cx="590" cy="1425" r="22" fill="#3a3a3a"/><circle cx="590" cy="1425" r="9" fill="#888"/><circle cx="635" cy="1405" r="22" fill="#3a3a3a"/><circle cx="635" cy="1405" r="9" fill="#888"/><circle cx="570" cy="1360" r="22" fill="#3a3a3a"/><circle cx="570" cy="1360" r="9" fill="#888"/><circle cx="620" cy="1370" r="22" fill="#3a3a3a"/><circle cx="620" cy="1370" r="9" fill="#888"/><circle cx="1330" cy="1150" r="22" fill="#3a3a3a"/><circle cx="1330" cy="1150" r="9" fill="#888"/><circle cx="1400" cy="1110" r="22" fill="#3a3a3a"/><circle cx="1400" cy="1110" r="9" fill="#888"/><circle cx="1470" cy="1090" r="22" fill="#3a3a3a"/><circle cx="1470" cy="1090" r="9" fill="#888"/><path d="M60 1090 L250 1030 M150 1010 L170 1130 M80 1120 L230 1040 M280 1020 L450 1000 M340 960 L420 1070 M1950 990 L2100 985 M1990 940 L2060 1040 M1270 870 L1500 840 M1330 800 L1350 900" stroke="#30e030" stroke-width="2.5"/><path d="M550 645 L620 490 M550 645 L840 610 L1140 580 M550 645 L610 820 M720 270 L1010 255 M720 270 L700 320 M720 270 L750 380 M1540 230 L1750 215 L1880 260 M1750 215 L1740 310 M2180 360 L2430 450 L2360 590 M2430 450 L2060 490" fill="none" stroke="#e02020" stroke-width="2.5"/></g><rect x="1271" y="1878.5" width="104" height="34" fill="#f2f200"/><path d="M1290 1880 V1886 M1300 1880 V1884 M1310 1880 V1888 M1320 1880 V1884 M1330 1880 V1886 M1340 1880 V1884 M1350 1880 V1886 M1360 1880 V1884" stroke="#000" stroke-width="1"/><text x="1373" y="1905" text-anchor="end" font-family="Liberation Sans" font-size="21" fill="#000">188.3°</text><rect x="1271" y="1913" width="104" height="37" fill="#0c8a18"/><text x="1373" y="1939" text-anchor="end" font-family="Liberation Sans" font-size="21" fill="#fff">-32.9°</text><g transform="translate(1325 2053)"><circle r="42" fill="none" stroke="#2a6a8a" stroke-width="11"/><circle r="28" fill="none" stroke="#2a6a8a" stroke-width="3"/><path d="M0 -85 L9 -9 L85 0 L9 9 L0 85 L-9 9 L-85 0 L-9 -9Z" fill="#2e6486" stroke="#1a3a50"/><path d="M-40 -40 L4 -4 L40 -40 L4 4 L40 40 L-4 4 L-40 40 L-4 -4Z" fill="#3a7a9a"/><path d="M0 -45 L6 -4 L-6 -4Z" fill="#e02020"/><path d="M0 45 L6 4 L-6 4Z" fill="#2040e0"/><circle r="5" fill="#fff"/></g><circle cx="1311" cy="1969" r="13" fill="#fff" stroke="#2a5a80" stroke-width="2"/><text x="1305" y="1975.5" font-family="Liberation Sans" font-weight="bold" font-size="18" fill="#2a5a80">S</text><circle cx="1404" cy="2036" r="13" fill="#fff" stroke="#2a5a80" stroke-width="2"/><text x="1398" y="2042.5" font-family="Liberation Sans" font-weight="bold" font-size="18" fill="#2a5a80">W</text><circle cx="1243" cy="2061" r="13" fill="#fff" stroke="#2a5a80" stroke-width="2"/><text x="1237" y="2067.5" font-family="Liberation Sans" font-weight="bold" font-size="18" fill="#2a5a80">E</text><circle cx="1335" cy="2128" r="13" fill="#fff" stroke="#2a5a80" stroke-width="2"/><text x="1329" y="2134.5" font-family="Liberation Sans" font-weight="bold" font-size="18" fill="#2a5a80">N</text><rect x="4" y="1315" width="192" height="35" fill="#000"/><text x="39.92" y="1340.5" font-family="Liberation Sans" font-size="23" fill="#fff">Perspective</text></svg><div class=a style="left:1423px;top:203px;width:2px;height:834px;background:#fff"></div><div class=a style="left:1425px;top:203px;width:2px;height:834px;background:#8a8a8a"></div><div class=a style="left:1427px;top:203px;width:1px;height:834px;background:#fff"></div><div class=a style="left:1428px;top:203px;width:419px;height:30.5px;background:#03519c"></div><div class=t style="left:1443px;top:208.27px;font-size:17.4px;color:#fff;">Object Properties</div><div class=a style="left:1821px;top:207px;width:22px;height:23px;background:#efefef;border-right:1.5px solid #8a8a8a;border-bottom:1.5px solid #8a8a8a;border-top:1px solid #fff;border-left:1px solid #fff;box-sizing:border-box"></div><svg class=a style="left:1825.5px;top:212px;" width="13" height="13" viewBox="0 0 13 13"><path d="M1.5 1.5 L11.5 11.5 M11.5 1.5 L1.5 11.5" stroke="#000" stroke-width="2.6"/></svg><div class=a style="left:1428px;top:233.5px;width:419px;height:803.5px;background:#c4c4c4"></div><div class=a style="left:1822px;top:233.5px;width:25px;height:803.5px;background:#efefef"></div><div class=a style="left:1829.5px;top:260px;width:11.5px;height:401px;background:#8a8a8a"></div><div class=t style="left:1441px;top:245.56px;font-size:20.6px;color:#000;">Name:</div><div class=a style="left:1441px;top:272.5px;width:369px;height:29px;background:#fff;border:1px solid #e0e0e0;box-sizing:border-box"></div><div class=t style="left:1450px;top:276.86px;font-size:20.6px;color:#000;">goebbels_villa_cmp_487</div><div class=t style="left:1441px;top:315.56px;font-size:20.6px;color:#000;">Edit layer:   default</div><div class=t style="left:1441px;top:352.56px;font-size:20.6px;color:#000;">Notes</div><div class=a style="left:1441px;top:378.5px;width:369px;height:29.5px;background:#fff;border:1px solid #e0e0e0;box-sizing:border-box"></div><div class=t style="left:1441px;top:421.56px;font-size:20.6px;color:#000;">Place on collision</div><svg class=a style="left:1454px;top:460.5px;" width="16" height="16" viewBox="0 0 16 16"><circle cx="8" cy="8" r="7" fill="#fff" stroke="#a0a0a0" stroke-width="1.2"/><circle cx="8" cy="8" r="3.3" fill="#000"/></svg><div class=t style="left:1478.5px;top:458.56px;font-size:20.6px;color:#000;">-- no --</div><svg class=a style="left:1454px;top:490.7px;" width="16" height="16" viewBox="0 0 16 16"><circle cx="8" cy="8" r="7" fill="#fff" stroke="#a0a0a0" stroke-width="1.2"/></svg><div class=t style="left:1478.5px;top:488.76px;font-size:20.6px;color:#000;">Place pivot</div><svg class=a style="left:1454px;top:520.9px;" width="16" height="16" viewBox="0 0 16 16"><circle cx="8" cy="8" r="7" fill="#fff" stroke="#a0a0a0" stroke-width="1.2"/></svg><div class=t style="left:1478.5px;top:518.96px;font-size:20.6px;color:#000;">Place pivot and use normal</div><svg class=a style="left:1454px;top:551.1px;" width="16" height="16" viewBox="0 0 16 16"><circle cx="8" cy="8" r="7" fill="#fff" stroke="#a0a0a0" stroke-width="1.2"/></svg><div class=t style="left:1478.5px;top:549.16px;font-size:20.6px;color:#000;">Place 3-point (bbox)</div><svg class=a style="left:1454px;top:581.3px;" width="16" height="16" viewBox="0 0 16 16"><circle cx="8" cy="8" r="7" fill="#fff" stroke="#a0a0a0" stroke-width="1.2"/></svg><div class=t style="left:1478.5px;top:579.36px;font-size:20.6px;color:#000;">Place foundation (bbox)</div><svg class=a style="left:1454px;top:611.5px;" width="16" height="16" viewBox="0 0 16 16"><circle cx="8" cy="8" r="7" fill="#fff" stroke="#a0a0a0" stroke-width="1.2"/></svg><div class=t style="left:1478.5px;top:609.56px;font-size:20.6px;color:#000;">Place on water (floatable)</div><svg class=a style="left:1454px;top:641.7px;" width="16" height="16" viewBox="0 0 16 16"><circle cx="8" cy="8" r="7" fill="#fff" stroke="#a0a0a0" stroke-width="1.2"/></svg><div class=t style="left:1478.5px;top:639.76px;font-size:20.6px;color:#000;">Place pivot with rendinst collision</div><div class=a style="left:1441px;top:678px;width:18px;height:18px;background:#fff;border-top:1.5px solid #707070;border-left:1.5px solid #707070;border-right:1px solid #e0e0e0;border-bottom:1px solid #e0e0e0;box-sizing:border-box"></div><div class=a style="left:1466.5px;top:673px;width:345px;height:30px;overflow:hidden"><div class=t style="left:0;top:5.06px;font-size:20.6px">Override placement type for composit</div></div><div class=a style="left:1441px;top:710.5px;width:369px;height:2.5px;background:#9a9a9a;border-bottom:1px solid #eee;box-sizing:border-box"></div><div class=a style="left:1441px;top:729px;width:369px;height:33px;background:#efefef;border-top:1px solid #fff;border-left:1px solid #fff;border-right:1.5px solid #7a7a7a;border-bottom:2px solid #7a7a7a;box-sizing:border-box"></div><div class=t style="left:1535.04px;top:735.56px;font-size:20.6px;color:#000;">goebbels_villa_cmp</div><div class=a style="left:1441px;top:779.5px;width:369px;height:32.5px;background:#efefef;border-top:1px solid #fff;border-left:1px solid #fff;border-right:1.5px solid #7a7a7a;border-bottom:2px solid #7a7a7a;box-sizing:border-box"></div><div class=t style="left:1473.79px;top:785.81px;font-size:20.6px;color:#000;">Generate individual per-inst-seed</div><div class=a style="left:1441px;top:821.5px;width:369px;height:32.5px;background:#efefef;border-top:1px solid #fff;border-left:1px solid #fff;border-right:1.5px solid #7a7a7a;border-bottom:2px solid #7a7a7a;box-sizing:border-box"></div><div class=t style="left:1491.53px;top:827.81px;font-size:20.6px;color:#000;">Generate equal per-inst-seed</div><div class=a style="left:1441px;top:939.5px;width:369px;height:32.5px;background:#efefef;border-top:1px solid #fff;border-left:1px solid #fff;border-right:1.5px solid #7a7a7a;border-bottom:2px solid #7a7a7a;box-sizing:border-box"></div><div class=t style="left:1511.56px;top:945.81px;font-size:20.6px;color:#000;">Generate individual seed</div><div class=a style="left:1441px;top:981.5px;width:369px;height:32.5px;background:#efefef;border-top:1px solid #fff;border-left:1px solid #fff;border-right:1.5px solid #7a7a7a;border-bottom:2px solid #7a7a7a;box-sizing:border-box"></div><div class=t style="left:1529.3px;top:987.81px;font-size:20.6px;color:#000;">Generate equal seed</div><div class=t style="left:1441px;top:867.56px;font-size:20.6px;color:#000;">Per-instance seed</div><div class=a style="left:1441px;top:906.5px;width:245px;height:2.5px;background:#a0a0a0;border-bottom:1px solid #fff;box-sizing:border-box"></div><div class=a style="left:1441px;top:893.5px;width:14px;height:28.5px;background:#e6e6e6;border:1px solid #7a7a7a;border-top-color:#fff;border-left-color:#fff;box-sizing:border-box"></div><div class=a style="left:1698px;top:893.5px;width:83px;height:28.5px;background:#fff;border:1px solid #a0a0a0;box-sizing:border-box"></div><div class=t style="left:1706px;top:898.56px;font-size:20.6px;color:#000;">0</div><div class=a style="left:1781px;top:893.5px;width:29px;height:14.25px;background:#efefef;border-top:1px solid #fff;border-left:1px solid #fff;border-right:1px solid #707070;border-bottom:1px solid #707070;box-sizing:border-box"></div><div class=a style="left:1781px;top:907.75px;width:29px;height:14.25px;background:#efefef;border-top:1px solid #fff;border-left:1px solid #fff;border-right:1px solid #707070;border-bottom:1px solid #707070;box-sizing:border-box"></div><svg class=a style="left:1792.5px;top:898.75px;" width="6" height="4" viewBox="0 0 6 4"><path d="M0 4 L3 0 L6 4Z" fill="#000"/></svg><svg class=a style="left:1792.5px;top:912.75px;" width="6" height="4" viewBox="0 0 6 4"><path d="M0 0 L3 4 L6 0Z" fill="#000"/></svg><div class=t style="left:1441px;top:1026.56px;font-size:20.6px;color:#000;">Random seed</div></div><div class=a style="left:3px;top:1112px;width:1849px;height:1047px;border:2px solid #2e2e2e;border-radius:9px;box-sizing:border-box"></div><div class=a style="left:1859px;top:1113px;width:1975px;height:1046px;border-radius:9px;overflow:hidden;background:#f0f0f0;"><div class=a style="left:0px;top:0px;width:1975px;height:44px;background:linear-gradient(#cdcdcd,#e7e7e7)"></div><svg class=a style="left:16px;top:10px;" width="18" height="21" viewBox="0 0 18 21"><path d="M9 1 L17 8 L12 13 L14 18 L11 20 L9 17 L7 20 L4 18 L6 13 L1 8Z" fill="#5cd0cc" stroke="#1f4a50" stroke-width="1.3"/><path d="M9 5 L12.5 8.5 L9 11.5 L5.5 8.5Z" fill="#dff" stroke="#1f4a50" stroke-width="1.2"/></svg><div class=t style="left:43px;top:11.76px;font-size:18px;color:#8a8a8a;">Asset viewer2  [DX11]  - C:\dagor2\enlisted\application.blk</div><div class=a style="left:1793px;top:20.3px;width:15px;height:1.3px;background:#8b8b8b"></div><div class=a style="left:1862px;top:13.3px;width:15px;height:15px;border:1.3px solid #8b8b8b;border-radius:3px;box-sizing:border-box"></div><svg class=a style="left:1933px;top:12.8px;" width="15" height="15" viewBox="0 0 15 15"><path d="M0.5 0.5 L14.5 14.5 M14.5 0.5 L0.5 14.5" stroke="#8b8b8b" stroke-width="1.3"/></svg><div class=a style="left:0px;top:44px;width:1975px;height:30px;background:linear-gradient(#e5e5e5,#f8f8f8)"></div><div class=t style="left:14px;top:51.28px;font-size:16.8px;color:#6e6e6e;">File</div><div class=t style="left:62px;top:51.28px;font-size:16.8px;color:#6e6e6e;">Export</div><div class=t style="left:134px;top:51.28px;font-size:16.8px;color:#6e6e6e;">Settings</div><div class=t style="left:220px;top:51.28px;font-size:16.8px;color:#6e6e6e;">View</div><div class=t style="left:279px;top:51.28px;font-size:16.8px;color:#6e6e6e;">Exit</div><div class=a style="left:0px;top:74px;width:1975px;height:1.2px;background:#9c9c9c"></div><div class=a style="left:0px;top:75.2px;width:1975px;height:1px;background:#fff"></div><div class=a style="left:0px;top:76.2px;width:1975px;height:40px;background:#f0f0f0"></div><div class=a style="left:0px;top:116.2px;width:1975px;height:1.6px;background:#9a9a9a"></div><div class=a style="left:0px;top:117.8px;width:1975px;height:1px;background:#fff"></div><div class=a style="left:0px;top:76.2px;width:1975px;height:40px;background:#ededed"></div><div class=a style="left:3px;top:79.2px;width:2px;height:34px;background:#fff;border-right:1px solid #a0a0a0"></div><div class=a style="left:8px;top:79.2px;width:2px;height:34px;background:#fff;border-right:1px solid #a0a0a0"></div><svg class=a style="left:21px;top:83.2px;" width="24" height="24" viewBox="0 0 24 24"><rect x="4" y="8" width="13" height="12" fill="#fff" stroke="#1a1a8c" stroke-width="2"/><path d="M4 8 L8 4 H20 V16 L17 20 M17 8 L20 4" fill="none" stroke="#1a1a8c" stroke-width="1.5"/><path d="M0 4V0H4 M20 0H24V4 M24 20V24H20 M4 24H0V20" fill="none" stroke="#000" stroke-width="2"/></svg><svg class=a style="left:53px;top:84.2px;" width="22" height="22" viewBox="0 0 24 24"><circle cx="12" cy="12" r="10.5" fill="none" stroke="#999" stroke-width="1.3"/><path d="M2 12 Q12 3 22 12 Q12 19 2 12Z" fill="#fff" stroke="#1a1a8c" stroke-width="2"/><circle cx="12" cy="11.5" r="3.5" fill="#000"/></svg><div class=a style="left:84.5px;top:83.2px;width:1px;height:24px;background:#a0a0a0"></div><div class=a style="left:85.5px;top:83.2px;width:1px;height:24px;background:#fff"></div><svg class=a style="left:93px;top:83.2px;" width="24" height="24" viewBox="0 0 24 24"><circle cx="12" cy="12" r="10.5" fill="none" stroke="#999" stroke-width="1.3"/><path d="M0 13 Q4 5 7 11 Q9 17 12 10 Q15 5 17 10 Q20 16 24 11" fill="none" stroke="#1a1a8c" stroke-width="3"/></svg><svg class=a style="left:125.5px;top:84.2px;" width="22" height="22" viewBox="0 0 24 24"><ellipse cx="6" cy="6" rx="4" ry="5.5" fill="#ddd" stroke="#000" stroke-width="1.5"/><ellipse cx="17" cy="6" rx="4" ry="5.5" fill="#ddd" stroke="#000" stroke-width="1.5"/><ellipse cx="6" cy="19" rx="3.5" ry="3" fill="#ddd" stroke="#000" stroke-width="1.5"/><ellipse cx="17" cy="19" rx="3.5" ry="3" fill="#ddd" stroke="#000" stroke-width="1.5"/></svg><svg class=a style="left:160px;top:86.2px;" width="18" height="18" viewBox="0 0 24 24"><rect x="13" y="14" width="6" height="8" fill="#aaa"/><circle cx="9" cy="4" r="2.5" fill="#111"/><path d="M5 8 H13 V15 H12 V23 H6 V15 H5Z" fill="#222"/></svg><div class=a style="left:188.5px;top:83.2px;width:1px;height:24px;background:#a0a0a0"></div><div class=a style="left:189.5px;top:83.2px;width:1px;height:24px;background:#fff"></div><svg class=a style="left:196px;top:82.7px;" width="25" height="25" viewBox="0 0 24 24"><text x="0" y="10" font-family="Liberation Serif" font-size="11" font-weight="bold" fill="#000">Stat</text><path d="M0 12.5H24" stroke="#000" stroke-width="1.2"/><path d="M0 16H24 M0 19.5H24 M0 23H24" stroke="#000" stroke-width="1.3" stroke-dasharray="4 2"/></svg><div class=a style="left:228.5px;top:83.2px;width:1px;height:24px;background:#a0a0a0"></div><div class=a style="left:229.5px;top:83.2px;width:1px;height:24px;background:#fff"></div><svg class=a style="left:236px;top:83.7px;" width="23" height="23" viewBox="0 0 24 24"><ellipse cx="7" cy="12" rx="5.5" ry="8" fill="#fff" stroke="#000" stroke-width="2"/><path d="M7 4 L23 12 L7 20" fill="#fff" stroke="#000" stroke-width="2"/><ellipse cx="7" cy="12" rx="5" ry="7.5" fill="#fff"/></svg><div class=a style="left:268px;top:83.2px;width:1px;height:24px;background:#a0a0a0"></div><div class=a style="left:269px;top:83.2px;width:1px;height:24px;background:#fff"></div><svg class=a style="left:277px;top:84.2px;" width="22" height="22" viewBox="0 0 24 24"><rect x="1" y="6" width="22" height="16" rx="2" fill="#222"/><rect x="3" y="9" width="18" height="11" fill="#888"/><rect x="6" y="3" width="10" height="4" fill="#222"/><circle cx="12" cy="14" r="5" fill="#000"/><circle cx="12" cy="14" r="3" fill="#00b8c8"/></svg><svg class=a style="left:309px;top:83.2px;" width="24" height="24" viewBox="0 0 24 24"><rect x="14" y="1" width="10" height="8" rx="1" fill="#222"/><circle cx="19" cy="5" r="2.5" fill="#2bb"/><path d="M1 13h4v4H1z M7 13h4v4H7z M13 13h4v4h-4z M19 13h4v4h-4z M7 7h4v4H7z M7 19h4v4H7z" fill="#1e7fe0"/></svg><div class=a style="left:340px;top:83.2px;width:1px;height:24px;background:#a0a0a0"></div><div class=a style="left:341px;top:83.2px;width:1px;height:24px;background:#fff"></div><svg class=a style="left:351px;top:85.2px;" width="20" height="20" viewBox="0 0 24 24"><circle cx="12" cy="12" r="9" fill="#ffee00" stroke="#333" stroke-width="1" stroke-dasharray="2 3"/></svg><div class=a style="left:380.5px;top:83.2px;width:1px;height:24px;background:#a0a0a0"></div><div class=a style="left:381.5px;top:83.2px;width:1px;height:24px;background:#fff"></div><div class=a style="left:385px;top:83.2px;width:1px;height:24px;background:#a0a0a0"></div><div class=a style="left:386px;top:83.2px;width:1px;height:24px;background:#fff"></div><svg class=a style="left:392px;top:86.2px;" width="18" height="18" viewBox="0 0 24 24"><path d="M12 2 L21 6 V18 L12 22 L3 18 V6Z M3 6 L12 10 L21 6 M12 10 V22 M7 12 H17" fill="#eef" stroke="#2323d0" stroke-width="2"/></svg><div class=a style="left:417.5px;top:83.2px;width:1px;height:24px;background:#a0a0a0"></div><div class=a style="left:418.5px;top:83.2px;width:1px;height:24px;background:#fff"></div><svg class=a style="left:424.5px;top:86.45px;" width="17.5" height="17.5" viewBox="0 0 24 24"><path d="M12 2 L21 6 V18 L12 22 L3 18 V6Z" fill="#6a6af0" stroke="#000" stroke-width="1.5"/><path d="M3 6 L12 10 L21 6 M12 10 V22" fill="none" stroke="#000" stroke-width="2"/></svg><div class=a style="left:452px;top:83.2px;width:1px;height:24px;background:#a0a0a0"></div><div class=a style="left:453px;top:83.2px;width:1px;height:24px;background:#fff"></div><div class=a style="left:457.5px;top:83.2px;width:1px;height:24px;background:#a0a0a0"></div><div class=a style="left:458.5px;top:83.2px;width:1px;height:24px;background:#fff"></div><svg class=a style="left:461px;top:82.7px;" width="25" height="25" viewBox="0 0 24 24"><rect x="4" y="8" width="13" height="12" fill="#fff" stroke="#1a1a8c" stroke-width="2"/><path d="M4 8 L8 4 H20 V16 L17 20 M17 8 L20 4" fill="none" stroke="#1a1a8c" stroke-width="1.5"/><path d="M0 4V0H4 M20 0H24V4 M24 20V24H20 M4 24H0V20" fill="none" stroke="#000" stroke-width="2"/></svg><div class=a style="left:492.5px;top:83.2px;width:1px;height:24px;background:#a0a0a0"></div><div class=a style="left:493.5px;top:83.2px;width:1px;height:24px;background:#fff"></div><svg class=a style="left:501px;top:83.2px;" width="24" height="24" viewBox="0 0 24 24"><rect x="2" y="2" width="20" height="20" fill="#fff" stroke="#000" stroke-width="2"/><rect x="3" y="3" width="9" height="9" fill="#7c8fc8"/><rect x="12" y="12" width="9" height="9" fill="#7c8fc8"/><path d="M1 23 L23 1" stroke="#f00" stroke-width="3.5"/></svg><div class=a style="left:532.7px;top:83.2px;width:1px;height:24px;background:#a0a0a0"></div><div class=a style="left:533.7px;top:83.2px;width:1px;height:24px;background:#fff"></div><svg class=a style="left:541px;top:83.2px;" width="24" height="24" viewBox="0 0 24 24"><defs><linearGradient id="gg" x1="1" y1="0" x2="0" y2="1"><stop offset="0" stop-color="#4cd11a"/><stop offset="1" stop-color="#b05a10"/></linearGradient></defs><rect x="0" y="0" width="24" height="24" fill="url(#gg)"/></svg><div class=a style="left:573px;top:83.2px;width:1px;height:24px;background:#a0a0a0"></div><div class=a style="left:574px;top:83.2px;width:1px;height:24px;background:#fff"></div><svg class=a style="left:581px;top:83.2px;" width="24" height="24" viewBox="0 0 24 24"><rect x="0" y="1" width="24" height="21" fill="#fff" stroke="#ccc"/><rect x="0" y="1" width="22" height="3" fill="#3050e0"/><rect x="19" y="0" width="5" height="5" fill="#e02020"/><path d="M2 8H18 M2 11H16 M2 14H18 M2 17H14" stroke="#bbb"/></svg><div class=a style="left:681px;top:77.2px;width:2px;height:38px;background:#555"></div><div class=a style="left:686px;top:79.2px;width:2px;height:34px;background:#fff;border-right:1px solid #a0a0a0"></div><div class=a style="left:691px;top:79.2px;width:2px;height:34px;background:#fff;border-right:1px solid #a0a0a0"></div><div class=a style="left:700px;top:77.7px;width:31px;height:30px;background:#f6f6f6;border:1px solid #e4e4e4;box-sizing:border-box"></div><svg class=a style="left:704px;top:80.7px;" width="24" height="24" viewBox="0 0 24 24"><path d="M6 2 L6 20 L10 16 L13 23 L16 22 L13 15 L19 15Z" fill="#000"/></svg><div class=a style="left:735px;top:83.2px;width:1px;height:24px;background:#a0a0a0"></div><div class=a style="left:736px;top:83.2px;width:1px;height:24px;background:#fff"></div><svg class=a style="left:744px;top:81.7px;" width="22" height="22" viewBox="0 0 24 24"><path d="M12 1 L16 6 H13.5 V10.5 H18 V8 L23 12 L18 16 V13.5 H13.5 V18 H16 L12 23 L8 18 H10.5 V13.5 H6 V16 L1 12 L6 8 V10.5 H10.5 V6 H8Z" fill="#1a1a70"/></svg><svg class=a style="left:777px;top:81.7px;" width="22" height="22" viewBox="0 0 24 24"><path d="M8 4 A9 9 0 1 0 17 4.5" fill="none" stroke="#1a1a70" stroke-width="2"/><path d="M6 0 L14 3 L8 9Z" fill="#1a1a70"/></svg><svg class=a style="left:808px;top:82.7px;" width="20" height="20" viewBox="0 0 24 24"><rect x="2" y="2" width="20" height="20" fill="#fff" stroke="#000" stroke-width="2"/><rect x="3" y="11" width="10" height="10" fill="#777"/><path d="M3 11H13V21" fill="none" stroke="#000" stroke-width="1.5"/></svg><div class=a style="left:2px;top:119px;width:499px;height:30.5px;background:#03519c"></div><div class=t style="left:17px;top:124.27px;font-size:17.4px;color:#fff;">Assets Tree</div><div class=a style="left:474px;top:123px;width:23px;height:23px;background:#efefef;border-right:1.5px solid #8a8a8a;border-bottom:1.5px solid #8a8a8a;border-top:1px solid #fff;border-left:1px solid #fff;box-sizing:border-box"></div><svg class=a style="left:479px;top:128px;" width="13" height="13" viewBox="0 0 13 13"><path d="M1.5 1.5 L11.5 11.5 M11.5 1.5 L1.5 11.5" stroke="#000" stroke-width="2.6"/></svg><div class=a style="left:2px;top:149.5px;width:499px;height:686.5px;background:#fff"></div><div class=a style="left:14px;top:162.5px;width:17px;height:1px;border-top:1px dotted #8a8a8a;box-sizing:border-box"></div><div class=a style="left:41px;top:171.5px;width:1px;height:15px;border-left:1px dotted #8a8a8a;box-sizing:border-box"></div><div class=a style="left:41px;top:186.5px;width:17px;height:1px;border-top:1px dotted #8a8a8a;box-sizing:border-box"></div><div class=a style="left:68px;top:195.5px;width:1px;height:15px;border-left:1px dotted #8a8a8a;box-sizing:border-box"></div><div class=a style="left:68px;top:210.5px;width:17px;height:1px;border-top:1px dotted #8a8a8a;box-sizing:border-box"></div><div class=a style="left:95px;top:219.5px;width:1px;height:15px;border-left:1px dotted #8a8a8a;box-sizing:border-box"></div><div class=a style="left:95px;top:234.5px;width:17px;height:1px;border-top:1px dotted #8a8a8a;box-sizing:border-box"></div><div class=a style="left:122px;top:243.5px;width:1px;height:15px;border-left:1px dotted #8a8a8a;box-sizing:border-box"></div><div class=a style="left:122px;top:258.5px;width:17px;height:1px;border-top:1px dotted #8a8a8a;box-sizing:border-box"></div><div class=a style="left:149px;top:267.5px;width:1px;height:15px;border-left:1px dotted #8a8a8a;box-sizing:border-box"></div><div class=a style="left:149px;top:282.5px;width:17px;height:1px;border-top:1px dotted #8a8a8a;box-sizing:border-box"></div><div class=a style="left:8px;top:156.5px;width:13px;height:13px;background:#fff;border:1px solid #8a8a8a;box-sizing:border-box"></div><div class=a style="left:11px;top:162.5px;width:7px;height:1.3px;background:#000"></div><svg class=a style="left:31px;top:152.5px;" width="21" height="20" viewBox="0 0 21 20"><path d="M1 2 H10 L11 4 H20 V18 H1Z" fill="#8a8a8a"/><rect x="2" y="4" width="18" height="14" fill="#f2f27a"/><rect x="2" y="1" width="8" height="3" fill="#f2f27a"/><path d="M4 6h2v2h-2z M10 6h2v2h-2z M16 6h2v2h-2z M7 10h2v2h-2z M13 10h2v2h-2z M4 14h2v2h-2z M10 14h2v2h-2z M16 14h2v2h-2z" fill="#ffff20"/><path d="M3 18.5 H21 V5" fill="none" stroke="#000" stroke-width="2"/></svg><div class=t style="left:58px;top:154.71px;font-size:15.7px;color:#000;">Root</div><div class=a style="left:35px;top:180.5px;width:13px;height:13px;background:#fff;border:1px solid #8a8a8a;box-sizing:border-box"></div><div class=a style="left:38px;top:186.5px;width:7px;height:1.3px;background:#000"></div><svg class=a style="left:58px;top:176.5px;" width="21" height="20" viewBox="0 0 21 20"><path d="M0 5 L5 0 H21 V14 L16 19 H0Z" fill="#000"/><path d="M7 19 V5 L11 1 H13 L9 5 V19Z" fill="#9aa0a8"/><path d="M2 7h3v3h-3z M11 7h3v3h-3z M2 15h3v3h-3z M11 15h3v3h-3z M4 2h2v2h-2z M14 1h3v2h-3z" fill="#f4f0a0"/><path d="M16 5h2v2h-2z M18 8h2v2h-2z M16 11h2v2h-2z M19 3h1v2h-1z" fill="#c8c088"/><path d="M1 12.5H5 M10 12.5H15" stroke="#8a8a8a" stroke-width="1"/></svg><div class=t style="left:85px;top:178.71px;font-size:15.7px;color:#000;">assets</div><div class=a style="left:62px;top:204.5px;width:13px;height:13px;background:#fff;border:1px solid #8a8a8a;box-sizing:border-box"></div><div class=a style="left:65px;top:210.5px;width:7px;height:1.3px;background:#000"></div><svg class=a style="left:85px;top:200.5px;" width="21" height="20" viewBox="0 0 21 20"><path d="M0 5 L5 0 H21 V14 L16 19 H0Z" fill="#000"/><path d="M7 19 V5 L11 1 H13 L9 5 V19Z" fill="#9aa0a8"/><path d="M2 7h3v3h-3z M11 7h3v3h-3z M2 15h3v3h-3z M11 15h3v3h-3z M4 2h2v2h-2z M14 1h3v2h-3z" fill="#f4f0a0"/><path d="M16 5h2v2h-2z M18 8h2v2h-2z M16 11h2v2h-2z M19 3h1v2h-1z" fill="#c8c088"/><path d="M1 12.5H5 M10 12.5H15" stroke="#8a8a8a" stroke-width="1"/></svg><div class=t style="left:112px;top:202.71px;font-size:15.7px;color:#000;">manmade_common</div><div class=a style="left:89px;top:228.5px;width:13px;height:13px;background:#fff;border:1px solid #8a8a8a;box-sizing:border-box"></div><div class=a style="left:92px;top:234.5px;width:7px;height:1.3px;background:#000"></div><svg class=a style="left:112px;top:224.5px;" width="21" height="20" viewBox="0 0 21 20"><path d="M1 5 H19 V18 H1Z" fill="#8a8a8a"/><rect x="2" y="6" width="17" height="12" fill="#f2f27a"/><path d="M4 8h2v2h-2z M10 8h2v2h-2z M16 8h2v2h-2z M7 12h2v2h-2z M13 12h2v2h-2z" fill="#ffff20"/><path d="M3 18.5 H20 V6" fill="none" stroke="#000" stroke-width="2"/><path d="M1 1 L8 8 M8 1 L1 8" stroke="#c00000" stroke-width="2"/></svg><div class=t style="left:139px;top:226.71px;font-size:15.7px;color:#000;">entities</div><div class=a style="left:116px;top:252.5px;width:13px;height:13px;background:#fff;border:1px solid #8a8a8a;box-sizing:border-box"></div><div class=a style="left:119px;top:258.5px;width:7px;height:1.3px;background:#000"></div><svg class=a style="left:139px;top:248.5px;" width="21" height="20" viewBox="0 0 21 20"><path d="M1 5 H19 V18 H1Z" fill="#8a8a8a"/><rect x="2" y="6" width="17" height="12" fill="#f2f27a"/><path d="M4 8h2v2h-2z M10 8h2v2h-2z M16 8h2v2h-2z M7 12h2v2h-2z M13 12h2v2h-2z" fill="#ffff20"/><path d="M3 18.5 H20 V6" fill="none" stroke="#000" stroke-width="2"/><path d="M1 1 L8 8 M8 1 L1 8" stroke="#c00000" stroke-width="2"/></svg><div class=t style="left:166px;top:250.71px;font-size:15.7px;color:#000;">indoor_stuff</div><svg class=a style="left:164px;top:270.5px;" width="23" height="24" viewBox="0 0 23 24"><path d="M6 1 L12 0 L18 1 L22 4 L22 10 L18 13 L16 20 L12 23 L6 22 L1 18 L0 11 L3 6Z" fill="#b4b4b4"/><path d="M11 1 L18 1 L22 4 L22 10 L17 12 L12 9Z" fill="#e8e8e8"/><path d="M3 10 L10 10 L12 15 L8 20 L3 18Z" fill="#d6d6d6"/><path d="M8 2h2v2h-2z M12 4h2v2h-2z M16 3h2v2h-2z M19 8h2v2h-2z M14 9h2v2h-2z M1 12h2v2h-2z M6 11h2v2h-2z M9 15h2v2h-2z M4 17h2v2h-2z M12 19h2v2h-2z M16 15h2v2h-2z" fill="#404040"/></svg><div class=a style="left:191px;top:271.5px;width:265.22px;height:22px;background:#d9d9d9"></div><div class=t style="left:193px;top:274.71px;font-size:15.7px;color:#000;">is_chandelier_h_tall_double_on_cmp</div><div class=a style="left:2px;top:836px;width:499px;height:210px;background:#c4c4c4"></div><div class=a style="left:14px;top:844px;width:474px;height:33px;background:#efefef;border-top:1px solid #fff;border-left:1px solid #fff;border-right:1.5px solid #7a7a7a;border-bottom:2px solid #7a7a7a;box-sizing:border-box"></div><div class=t style="left:239.44px;top:850.39px;font-size:20.8px;color:#000;">All</div><div class=t style="left:14px;top:889.39px;font-size:20.8px;color:#000;">Filter:</div><div class=a style="left:14px;top:916px;width:474px;height:30px;background:#fff;border:1px solid #e6e6e6;box-sizing:border-box"></div><div class=t style="left:23px;top:921.12px;font-size:20.3px;color:#000;">is_chandelier_h_tall_double_on_cmp</div><div class=t style="left:14px;top:957.39px;font-size:20.8px;color:#000;">Search:</div><div class=a style="left:14px;top:984px;width:474px;height:29.5px;background:#fff;border:1px solid #e6e6e6;box-sizing:border-box"></div><div class=a style="left:501px;top:119px;width:2px;height:927px;background:#fff"></div><div class=a style="left:503px;top:119px;width:2px;height:927px;background:#8a8a8a"></div><div class=a style="left:505px;top:119px;width:1px;height:927px;background:#fff"></div><svg class=a style="left:506px;top:119px" width="1095" height="925" viewBox="2365 1232 1095 925"><defs><linearGradient id="skc" x1="0" y1="0" x2="0" y2="1"><stop offset="0" stop-color="#d8e2ea"/><stop offset="0.5" stop-color="#dfe5eb"/><stop offset="1" stop-color="#e9ecef"/></linearGradient><linearGradient id="sec" x1="0" y1="0" x2="0" y2="1"><stop offset="0" stop-color="#8a95a5"/><stop offset="0.14" stop-color="#909dad"/><stop offset="0.25" stop-color="#7d8ea3"/><stop offset="0.35" stop-color="#5d7490"/><stop offset="0.5" stop-color="#3a4e6c"/><stop offset="0.65" stop-color="#25395a"/><stop offset="0.8" stop-color="#1a2b4a"/><stop offset="1" stop-color="#13213b"/></linearGradient><filter id="blc" x="-50%" y="-50%" width="200%" height="200%"><feGaussianBlur stdDeviation="10"/></filter></defs><rect x="2365" y="1232" width="1095" height="106" fill="url(#skc)"/><rect x="2365" y="1338" width="1095" height="819" fill="url(#sec)"/><g filter="url(#blc)"><ellipse cx="2600" cy="1255" rx="80" ry="20" fill="#c4dae9" opacity="0.7"/><ellipse cx="2800" cy="1250" rx="80" ry="18" fill="#c8dcea" opacity="0.7"/><ellipse cx="2480" cy="1300" rx="100" ry="15" fill="#c8dcea" opacity="0.6"/><ellipse cx="3000" cy="1260" rx="90" ry="20" fill="#cfdde9" opacity="0.5"/><ellipse cx="3250" cy="1250" rx="160" ry="22" fill="#d2d6de" opacity="0.5"/><ellipse cx="3400" cy="1270" rx="80" ry="20" fill="#d4d8de" opacity="0.5"/></g><path d="M2913 1232 V2149 M2366 1991 L3122 1575 M2379 2082 L3114 1618 M2701 1576 L3458 1987 M2709 1618 L3447 2078" fill="none" stroke="#22dd22" stroke-width="1.5"/><g fill="#cfcbc6" stroke="#8a8680" stroke-width="1"><path d="M2908 1541 h10 v14 h-10z M2893 1555 h40 l-5 30 h-30z"/><circle cx="2870" cy="1600" r="16" fill="none" stroke="#cfcbc6" stroke-width="6"/><circle cx="2956" cy="1600" r="16" fill="none" stroke="#cfcbc6" stroke-width="6"/><circle cx="2885" cy="1585" r="12" fill="none" stroke="#cfcbc6" stroke-width="6"/><circle cx="2941" cy="1585" r="12" fill="none" stroke="#cfcbc6" stroke-width="6"/><circle cx="2860" cy="1625" r="12" fill="none" stroke="#cfcbc6" stroke-width="6"/><circle cx="2966" cy="1625" r="12" fill="none" stroke="#cfcbc6" stroke-width="6"/><circle cx="2895" cy="1630" r="13" fill="none" stroke="#cfcbc6" stroke-width="6"/><circle cx="2931" cy="1630" r="13" fill="none" stroke="#cfcbc6" stroke-width="6"/><circle cx="2913" cy="1615" r="14" fill="none" stroke="#cfcbc6" stroke-width="6"/><path d="M2893 1645 q20 -15 40 0 q-4 40 -20 48 q-16 -8 -20 -48z M2902 1690 h22 l-4 70 h-14z"/><path d="M2913 1700 Q2800 1760 2786 1690 M2913 1700 Q3026 1760 3040 1690 M2913 1710 Q2840 1830 2815 1760 M2913 1710 Q2986 1830 3011 1760 M2913 1720 Q2880 1850 2877 1825 M2913 1720 Q2946 1850 2949 1825 M2913 1690 Q2810 1690 2797 1645 M2913 1690 Q3016 1690 3029 1645 M2913 1730 Q2830 1800 2850 1840 M2913 1730 Q2996 1800 2976 1840 M2913 1660 Q2840 1640 2843 1610 M2913 1660 Q2986 1640 2983 1610" fill="none" stroke="#c8c4be" stroke-width="8"/><ellipse cx="2772" cy="1712" rx="22" ry="13"/><rect x="2766" y="1660" width="13" height="52" fill="#e6dcb4" stroke="none"/><ellipse cx="2772.5" cy="1655" rx="8" ry="13" fill="#f6f4ec" stroke="none"/><ellipse cx="2786" cy="1676" rx="22" ry="13"/><rect x="2780" y="1628" width="13" height="48" fill="#e6dcb4" stroke="none"/><ellipse cx="2786.5" cy="1623" rx="8" ry="13" fill="#f6f4ec" stroke="none"/><ellipse cx="2836" cy="1640" rx="22" ry="13"/><rect x="2830" y="1596" width="13" height="44" fill="#e6dcb4" stroke="none"/><ellipse cx="2836.5" cy="1591" rx="8" ry="13" fill="#f6f4ec" stroke="none"/><ellipse cx="2806" cy="1762" rx="22" ry="13"/><rect x="2800" y="1712" width="13" height="50" fill="#e6dcb4" stroke="none"/><ellipse cx="2806.5" cy="1707" rx="8" ry="13" fill="#f6f4ec" stroke="none"/><ellipse cx="2868" cy="1780" rx="22" ry="13"/><rect x="2862" y="1732" width="13" height="48" fill="#e6dcb4" stroke="none"/><ellipse cx="2868.5" cy="1727" rx="8" ry="13" fill="#f6f4ec" stroke="none"/><ellipse cx="2964" cy="1780" rx="22" ry="13"/><rect x="2958" y="1732" width="13" height="48" fill="#e6dcb4" stroke="none"/><ellipse cx="2964.5" cy="1727" rx="8" ry="13" fill="#f6f4ec" stroke="none"/><ellipse cx="3026" cy="1762" rx="22" ry="13"/><rect x="3020" y="1712" width="13" height="50" fill="#e6dcb4" stroke="none"/><ellipse cx="3026.5" cy="1707" rx="8" ry="13" fill="#f6f4ec" stroke="none"/><ellipse cx="3060" cy="1712" rx="22" ry="13"/><rect x="3054" y="1660" width="13" height="52" fill="#e6dcb4" stroke="none"/><ellipse cx="3060.5" cy="1655" rx="8" ry="13" fill="#f6f4ec" stroke="none"/><ellipse cx="3046" cy="1676" rx="22" ry="13"/><rect x="3040" y="1628" width="13" height="48" fill="#e6dcb4" stroke="none"/><ellipse cx="3046.5" cy="1623" rx="8" ry="13" fill="#f6f4ec" stroke="none"/><ellipse cx="3002" cy="1640" rx="22" ry="13"/><rect x="2996" y="1596" width="13" height="44" fill="#e6dcb4" stroke="none"/><ellipse cx="3002.5" cy="1591" rx="8" ry="13" fill="#f6f4ec" stroke="none"/></g><rect x="2365" y="1232" width="193" height="35.5" fill="#000"/><text x="2421.88" y="1257.75" font-family="Liberation Sans" font-size="23" fill="#fff">Custom</text></svg><div class=a style="left:1601px;top:119px;width:2px;height:927px;background:#fff"></div><div class=a style="left:1603px;top:119px;width:2px;height:927px;background:#8a8a8a"></div><div class=a style="left:1605px;top:119px;width:1px;height:927px;background:#fff"></div><div class=a style="left:1606px;top:119px;width:369px;height:30px;background:#03519c"></div><div class=t style="left:1621px;top:123.77px;font-size:17.4px;color:#fff;">Composit Outliner</div><div class=a style="left:1948px;top:123px;width:23px;height:22.5px;background:#efefef;border-right:1.5px solid #8a8a8a;border-bottom:1.5px solid #8a8a8a;border-top:1px solid #fff;border-left:1px solid #fff;box-sizing:border-box"></div><svg class=a style="left:1953px;top:127.75px;" width="13" height="13" viewBox="0 0 13 13"><path d="M1.5 1.5 L11.5 11.5 M11.5 1.5 L1.5 11.5" stroke="#000" stroke-width="2.6"/></svg><div class=a style="left:1606px;top:149px;width:369px;height:257px;background:#fff"></div><div class=a style="left:1606px;top:406px;width:369px;height:29px;background:#f2f2f2"></div><div class=a style="left:1635px;top:413.5px;width:301px;height:11.5px;background:#8a8a8a"></div><div class=a style="left:1617px;top:161.5px;width:17px;height:1px;border-top:1px dotted #8a8a8a;box-sizing:border-box"></div><div class=a style="left:1644px;top:170.5px;width:1px;height:15px;border-left:1px dotted #8a8a8a;box-sizing:border-box"></div><div class=a style="left:1644px;top:185.5px;width:17px;height:1px;border-top:1px dotted #8a8a8a;box-sizing:border-box"></div><div class=a style="left:1671px;top:194.5px;width:1px;height:15px;border-left:1px dotted #8a8a8a;box-sizing:border-box"></div><div class=a style="left:1671px;top:209.5px;width:17px;height:1px;border-top:1px dotted #8a8a8a;box-sizing:border-box"></div><div class=a style="left:1671px;top:194.5px;width:1px;height:39px;border-left:1px dotted #8a8a8a;box-sizing:border-box"></div><div class=a style="left:1671px;top:233.5px;width:17px;height:1px;border-top:1px dotted #8a8a8a;box-sizing:border-box"></div><div class=a style="left:1671px;top:194.5px;width:1px;height:63px;border-left:1px dotted #8a8a8a;box-sizing:border-box"></div><div class=a style="left:1671px;top:257.5px;width:17px;height:1px;border-top:1px dotted #8a8a8a;box-sizing:border-box"></div><div class=a style="left:1611px;top:155.5px;width:13px;height:13px;background:#fff;border:1px solid #8a8a8a;box-sizing:border-box"></div><div class=a style="left:1614px;top:161.5px;width:7px;height:1.3px;background:#000"></div><svg class=a style="left:1632px;top:149.5px;" width="23" height="24" viewBox="0 0 23 24"><path d="M6 1 L12 0 L18 1 L22 4 L22 10 L18 13 L16 20 L12 23 L6 22 L1 18 L0 11 L3 6Z" fill="#b4b4b4"/><path d="M11 1 L18 1 L22 4 L22 10 L17 12 L12 9Z" fill="#e8e8e8"/><path d="M3 10 L10 10 L12 15 L8 20 L3 18Z" fill="#d6d6d6"/><path d="M8 2h2v2h-2z M12 4h2v2h-2z M16 3h2v2h-2z M19 8h2v2h-2z M14 9h2v2h-2z M1 12h2v2h-2z M6 11h2v2h-2z M9 15h2v2h-2z M4 17h2v2h-2z M12 19h2v2h-2z M16 15h2v2h-2z" fill="#404040"/></svg><div class=a style="left:1659px;top:150.5px;width:265.22px;height:22px;background:#d9d9d9"></div><div class=t style="left:1661px;top:153.71px;font-size:15.7px;color:#000;">is_chandelier_h_tall_double_on_cmp</div><div class=a style="left:1638px;top:179.5px;width:13px;height:13px;background:#fff;border:1px solid #8a8a8a;box-sizing:border-box"></div><div class=a style="left:1641px;top:185.5px;width:7px;height:1.3px;background:#000"></div><svg class=a style="left:1661px;top:175.5px;" width="21" height="20" viewBox="0 0 21 20"><path d="M10 1 L18 5 V15 L10 19 L2 15 V5Z M2 5 L10 9 L18 5 M10 9 V19 M5 11 H15" fill="none" stroke="#109010" stroke-width="2"/></svg><div class=t style="left:1688px;top:177.71px;font-size:15.7px;color:#000;">node</div><svg class=a style="left:1688px;top:199.5px;" width="21" height="20" viewBox="0 0 21 20"><ellipse cx="10" cy="9" rx="6" ry="8" fill="#22a022"/><ellipse cx="9" cy="8" rx="3" ry="6" fill="#60d040"/><rect x="9" y="14" width="2.5" height="6" fill="#8a5a20"/></svg><div class=t style="left:1715px;top:201.71px;font-size:15.7px;color:#000;">is_chandelier_h_on:rendInst</div><svg class=a style="left:1688px;top:223.5px;" width="21" height="20" viewBox="0 0 21 20"><path d="M10 1 L18 5 V15 L10 19 L2 15 V5Z M2 5 L10 9 L18 5 M10 9 V19 M5 11 H15" fill="none" stroke="#109010" stroke-width="2"/></svg><div class=t style="left:1715px;top:225.71px;font-size:15.7px;color:#000;">light_chandelier_big_tall_top</div><svg class=a style="left:1688px;top:247.5px;" width="21" height="20" viewBox="0 0 21 20"><path d="M10 1 L18 5 V15 L10 19 L2 15 V5Z M2 5 L10 9 L18 5 M10 9 V19 M5 11 H15" fill="none" stroke="#109010" stroke-width="2"/></svg><div class=t style="left:1715px;top:249.71px;font-size:15.7px;color:#000;">light_chandelier_big_tall_top:gameObj</div><div class=a style="left:1606px;top:435px;width:369px;height:2px;background:#e8e8e8"></div><div class=a style="left:1606px;top:437px;width:369px;height:2px;background:#8a8a8a"></div><div class=a style="left:1606px;top:439px;width:369px;height:62px;background:#c4c4c4"></div><div class=a style="left:1948px;top:439px;width:27px;height:62px;background:#dadada"></div><div class=a style="left:1620px;top:462px;width:314px;height:49px;border:1px solid #e6e6e6;border-right-color:#9a9a9a;border-bottom-color:#9a9a9a;box-sizing:border-box"></div><div class=a style="left:1631px;top:491px;width:292px;height:10px;background:#efefef;border:1px solid #fff;border-right-color:#777;box-sizing:border-box"></div><div class=a style="left:1625px;top:452px;width:305px;height:33px;background:#808080;border:1.3px solid #000;box-sizing:border-box"></div><div class=t style="left:1631px;top:458.39px;font-size:20.8px;color:#000;">-</div><div class=t style="left:1743.4px;top:458.39px;font-size:20.8px;color:#000;">Entities</div><div class=a style="left:1606px;top:496px;width:369px;height:2px;background:#8a8a8a"></div><div class=a style="left:1606px;top:498px;width:369px;height:3px;background:#f0f0f0"></div><div class=a style="left:1606px;top:501px;width:369px;height:30.5px;background:#03519c"></div><div class=t style="left:1621px;top:506.27px;font-size:17.4px;color:#fff;">Properties</div><div class=a style="left:1947.5px;top:505px;width:24.5px;height:23px;background:#efefef;border-right:1.5px solid #8a8a8a;border-bottom:1.5px solid #8a8a8a;border-top:1px solid #fff;border-left:1px solid #fff;box-sizing:border-box"></div><svg class=a style="left:1953.25px;top:510px;" width="13" height="13" viewBox="0 0 13 13"><path d="M1.5 1.5 L11.5 11.5 M11.5 1.5 L1.5 11.5" stroke="#000" stroke-width="2.6"/></svg><div class=a style="left:1606px;top:531.5px;width:369px;height:504.5px;background:#c4c4c4"></div><div class=a style="left:1948px;top:531.5px;width:27px;height:504.5px;background:#dadada"></div><div class=a style="left:1956px;top:557px;width:11px;height:299.5px;background:#8a8a8a"></div><div class=a style="left:1619.5px;top:552px;width:316px;height:133px;border:1px solid #e6e6e6;border-right-color:#9a9a9a;border-bottom-color:#9a9a9a;box-sizing:border-box"></div><div class=a style="left:1625px;top:543px;width:304px;height:32px;background:#808080;border:1.3px solid #000;box-sizing:border-box"></div><div class=t style="left:1631px;top:548.89px;font-size:20.8px;color:#000;">-</div><div class=t style="left:1679.33px;top:548.89px;font-size:20.8px;color:#000;">Common parameters</div><div class=t style="left:1631px;top:584.39px;font-size:20.8px;color:#000;">Type: composit</div><div class=t style="left:1632px;top:622.39px;font-size:20.8px;color:#fff;">Name:</div><div class=t style="left:1631px;top:621.39px;font-size:20.8px;color:#9a9a9a;">Name:</div><div class=a style="left:1631px;top:649px;width:292px;height:29px;background:#c8c8c8;border:1px solid #e8e8e8;border-top-color:#a8a8a8;border-left-color:#a8a8a8;box-sizing:border-box;overflow:hidden"></div><div class=a style="left:1631px;top:649px;width:290px;height:29px;overflow:hidden"><div class=t style="left:8px;top:3.89px;font-size:20.8px;color:#7d7d7d">is_chandelier_h_tall_double_on_cmp</div></div><div class=a style="left:1619.5px;top:707px;width:316px;height:349px;border:1px solid #e6e6e6;border-right-color:#9a9a9a;border-bottom-color:#9a9a9a;box-sizing:border-box"></div><div class=a style="left:1625px;top:698px;width:304px;height:32px;background:#808080;border:1.3px solid #000;box-sizing:border-box"></div><div class=t style="left:1631px;top:703.89px;font-size:20.8px;color:#000;">-</div><div class=t style="left:1653.89px;top:703.89px;font-size:20.8px;color:#000;">Object specific parameters</div><div class=a style="left:1631px;top:751px;width:292px;height:12px;border:1px solid #e6e6e6;border-right-color:#9a9a9a;border-bottom-color:#9a9a9a;box-sizing:border-box"></div><div class=a style="left:1637px;top:739px;width:280px;height:32px;background:#808080;border:1.3px solid #000;box-sizing:border-box"></div><div class=t style="left:1643px;top:744.89px;font-size:20.8px;color:#000;font-weight:bold;">+</div><div class=t style="left:1705.92px;top:744.89px;font-size:20.8px;color:#000;font-weight:bold;">Material editor</div><div class=a style="left:1631px;top:791px;width:292px;height:265px;border:1px solid #e6e6e6;border-right-color:#9a9a9a;border-bottom-color:#9a9a9a;box-sizing:border-box"></div><div class=a style="left:1637px;top:778px;width:280px;height:31px;background:#808080;border:1.3px solid #000;box-sizing:border-box"></div><div class=t style="left:1643px;top:783.39px;font-size:20.8px;color:#000;">-</div><div class=t style="left:1717.46px;top:783.39px;font-size:20.8px;color:#000;">Object group</div><div class=a style="left:1643px;top:831px;width:268px;height:225px;border:1px solid #e6e6e6;border-right-color:#9a9a9a;border-bottom-color:#9a9a9a;box-sizing:border-box"></div><div class=a style="left:1649px;top:818px;width:257px;height:32px;background:#808080;border:1.3px solid #000;box-sizing:border-box"></div><div class=t style="left:1655px;top:823.89px;font-size:20.8px;color:#000;">-</div><div class=t style="left:1735.31px;top:823.89px;font-size:20.8px;color:#000;">Common</div><div class=a style="left:1655px;top:856px;width:244px;height:33px;background:#efefef;border-top:1px solid #fff;border-left:1px solid #fff;border-right:1.5px solid #7a7a7a;border-bottom:2px solid #7a7a7a;box-sizing:border-box"></div><div class=t style="left:1697.81px;top:862.39px;font-size:20.8px;color:#000;">Object properties</div><div class=a style="left:1655px;top:903px;width:18px;height:18px;background:#fff;border-top:1.5px solid #707070;border-left:1.5px solid #707070;border-right:1px solid #e0e0e0;border-bottom:1px solid #e0e0e0;box-sizing:border-box"></div><div class=t style="left:1681px;top:903.39px;font-size:20.8px;color:#000;">Show position gizmo</div><div class=a style="left:1655px;top:936px;width:51.33px;height:28px;background:#c8c8c8;border:1px solid #e0e0e0;border-top-color:#a0a0a0;border-left-color:#a0a0a0;box-sizing:border-box"></div><div class=t style="left:1663px;top:940.39px;font-size:20.8px;color:#8a8a8a;">0</div><div class=a style="left:1706.33px;top:936px;width:29px;height:14px;background:#efefef;border-top:1px solid #fff;border-left:1px solid #fff;border-right:1px solid #707070;border-bottom:1px solid #707070;box-sizing:border-box"></div><div class=a style="left:1706.33px;top:950px;width:29px;height:14px;background:#efefef;border-top:1px solid #fff;border-left:1px solid #fff;border-right:1px solid #707070;border-bottom:1px solid #707070;box-sizing:border-box"></div><svg class=a style="left:1717.83px;top:941px;" width="6" height="4" viewBox="0 0 6 4"><path d="M0 4 L3 0 L6 4Z" fill="#888"/></svg><svg class=a style="left:1717.83px;top:955px;" width="6" height="4" viewBox="0 0 6 4"><path d="M0 0 L3 4 L6 0Z" fill="#888"/></svg><div class=a style="left:1736.33px;top:936px;width:51.33px;height:28px;background:#c8c8c8;border:1px solid #e0e0e0;border-top-color:#a0a0a0;border-left-color:#a0a0a0;box-sizing:border-box"></div><div class=t style="left:1744.33px;top:940.39px;font-size:20.8px;color:#8a8a8a;">0</div><div class=a style="left:1787.67px;top:936px;width:29px;height:14px;background:#efefef;border-top:1px solid #fff;border-left:1px solid #fff;border-right:1px solid #707070;border-bottom:1px solid #707070;box-sizing:border-box"></div><div class=a style="left:1787.67px;top:950px;width:29px;height:14px;background:#efefef;border-top:1px solid #fff;border-left:1px solid #fff;border-right:1px solid #707070;border-bottom:1px solid #707070;box-sizing:border-box"></div><svg class=a style="left:1799.17px;top:941px;" width="6" height="4" viewBox="0 0 6 4"><path d="M0 4 L3 0 L6 4Z" fill="#888"/></svg><svg class=a style="left:1799.17px;top:955px;" width="6" height="4" viewBox="0 0 6 4"><path d="M0 0 L3 4 L6 0Z" fill="#888"/></svg><div class=a style="left:1817.67px;top:936px;width:51.33px;height:28px;background:#c8c8c8;border:1px solid #e0e0e0;border-top-color:#a0a0a0;border-left-color:#a0a0a0;box-sizing:border-box"></div><div class=t style="left:1825.67px;top:940.39px;font-size:20.8px;color:#8a8a8a;">0</div><div class=a style="left:1869px;top:936px;width:29px;height:14px;background:#efefef;border-top:1px solid #fff;border-left:1px solid #fff;border-right:1px solid #707070;border-bottom:1px solid #707070;box-sizing:border-box"></div><div class=a style="left:1869px;top:950px;width:29px;height:14px;background:#efefef;border-top:1px solid #fff;border-left:1px solid #fff;border-right:1px solid #707070;border-bottom:1px solid #707070;box-sizing:border-box"></div><svg class=a style="left:1880.5px;top:941px;" width="6" height="4" viewBox="0 0 6 4"><path d="M0 4 L3 0 L6 4Z" fill="#888"/></svg><svg class=a style="left:1880.5px;top:955px;" width="6" height="4" viewBox="0 0 6 4"><path d="M0 0 L3 4 L6 0Z" fill="#888"/></svg><div class=a style="left:1655px;top:974.5px;width:244px;height:2px;background:#9a9a9a;border-bottom:1px solid #eee;box-sizing:border-box"></div><div class=t style="left:1655px;top:988.39px;font-size:20.8px;color:#000;">Rotate around X, deg</div><div class=a style="left:1655px;top:1028.5px;width:97px;height:2.5px;background:#a0a0a0;border-bottom:1px solid #fff;box-sizing:border-box"></div><div class=a style="left:1705px;top:1015px;width:14px;height:29px;background:#e6e6e6;border:1px solid #7a7a7a;border-top-color:#fff;border-left-color:#fff;box-sizing:border-box"></div><div class=a style="left:1788px;top:1015px;width:85px;height:29px;background:#fff;border:1px solid #a0a0a0;box-sizing:border-box"></div><div class=t style="left:1797px;top:1020.39px;font-size:20.8px;color:#000;">0</div><div class=a style="left:1873px;top:1015px;width:26px;height:14.5px;background:#efefef;border-top:1px solid #fff;border-left:1px solid #fff;border-right:1px solid #707070;border-bottom:1px solid #707070;box-sizing:border-box"></div><div class=a style="left:1873px;top:1029.5px;width:26px;height:14.5px;background:#efefef;border-top:1px solid #fff;border-left:1px solid #fff;border-right:1px solid #707070;border-bottom:1px solid #707070;box-sizing:border-box"></div><svg class=a style="left:1883px;top:1020.5px;" width="6" height="4" viewBox="0 0 6 4"><path d="M0 4 L3 0 L6 4Z" fill="#000"/></svg><svg class=a style="left:1883px;top:1034.5px;" width="6" height="4" viewBox="0 0 6 4"><path d="M0 0 L3 4 L6 0Z" fill="#000"/></svg><div class=t style="left:1655px;top:1054.39px;font-size:20.8px;color:#000;">Rotate around Y, deg</div></div><div class=a style="left:1861px;top:1115px;width:60px;height:1034px;background:linear-gradient(90deg,rgba(0,0,0,0.07),rgba(0,0,0,0))"></div><div class=a style="left:1859px;top:1113px;width:1975px;height:1046px;border:2px solid #2e2e2e;border-radius:9px;box-sizing:border-box"></div></body></html>
